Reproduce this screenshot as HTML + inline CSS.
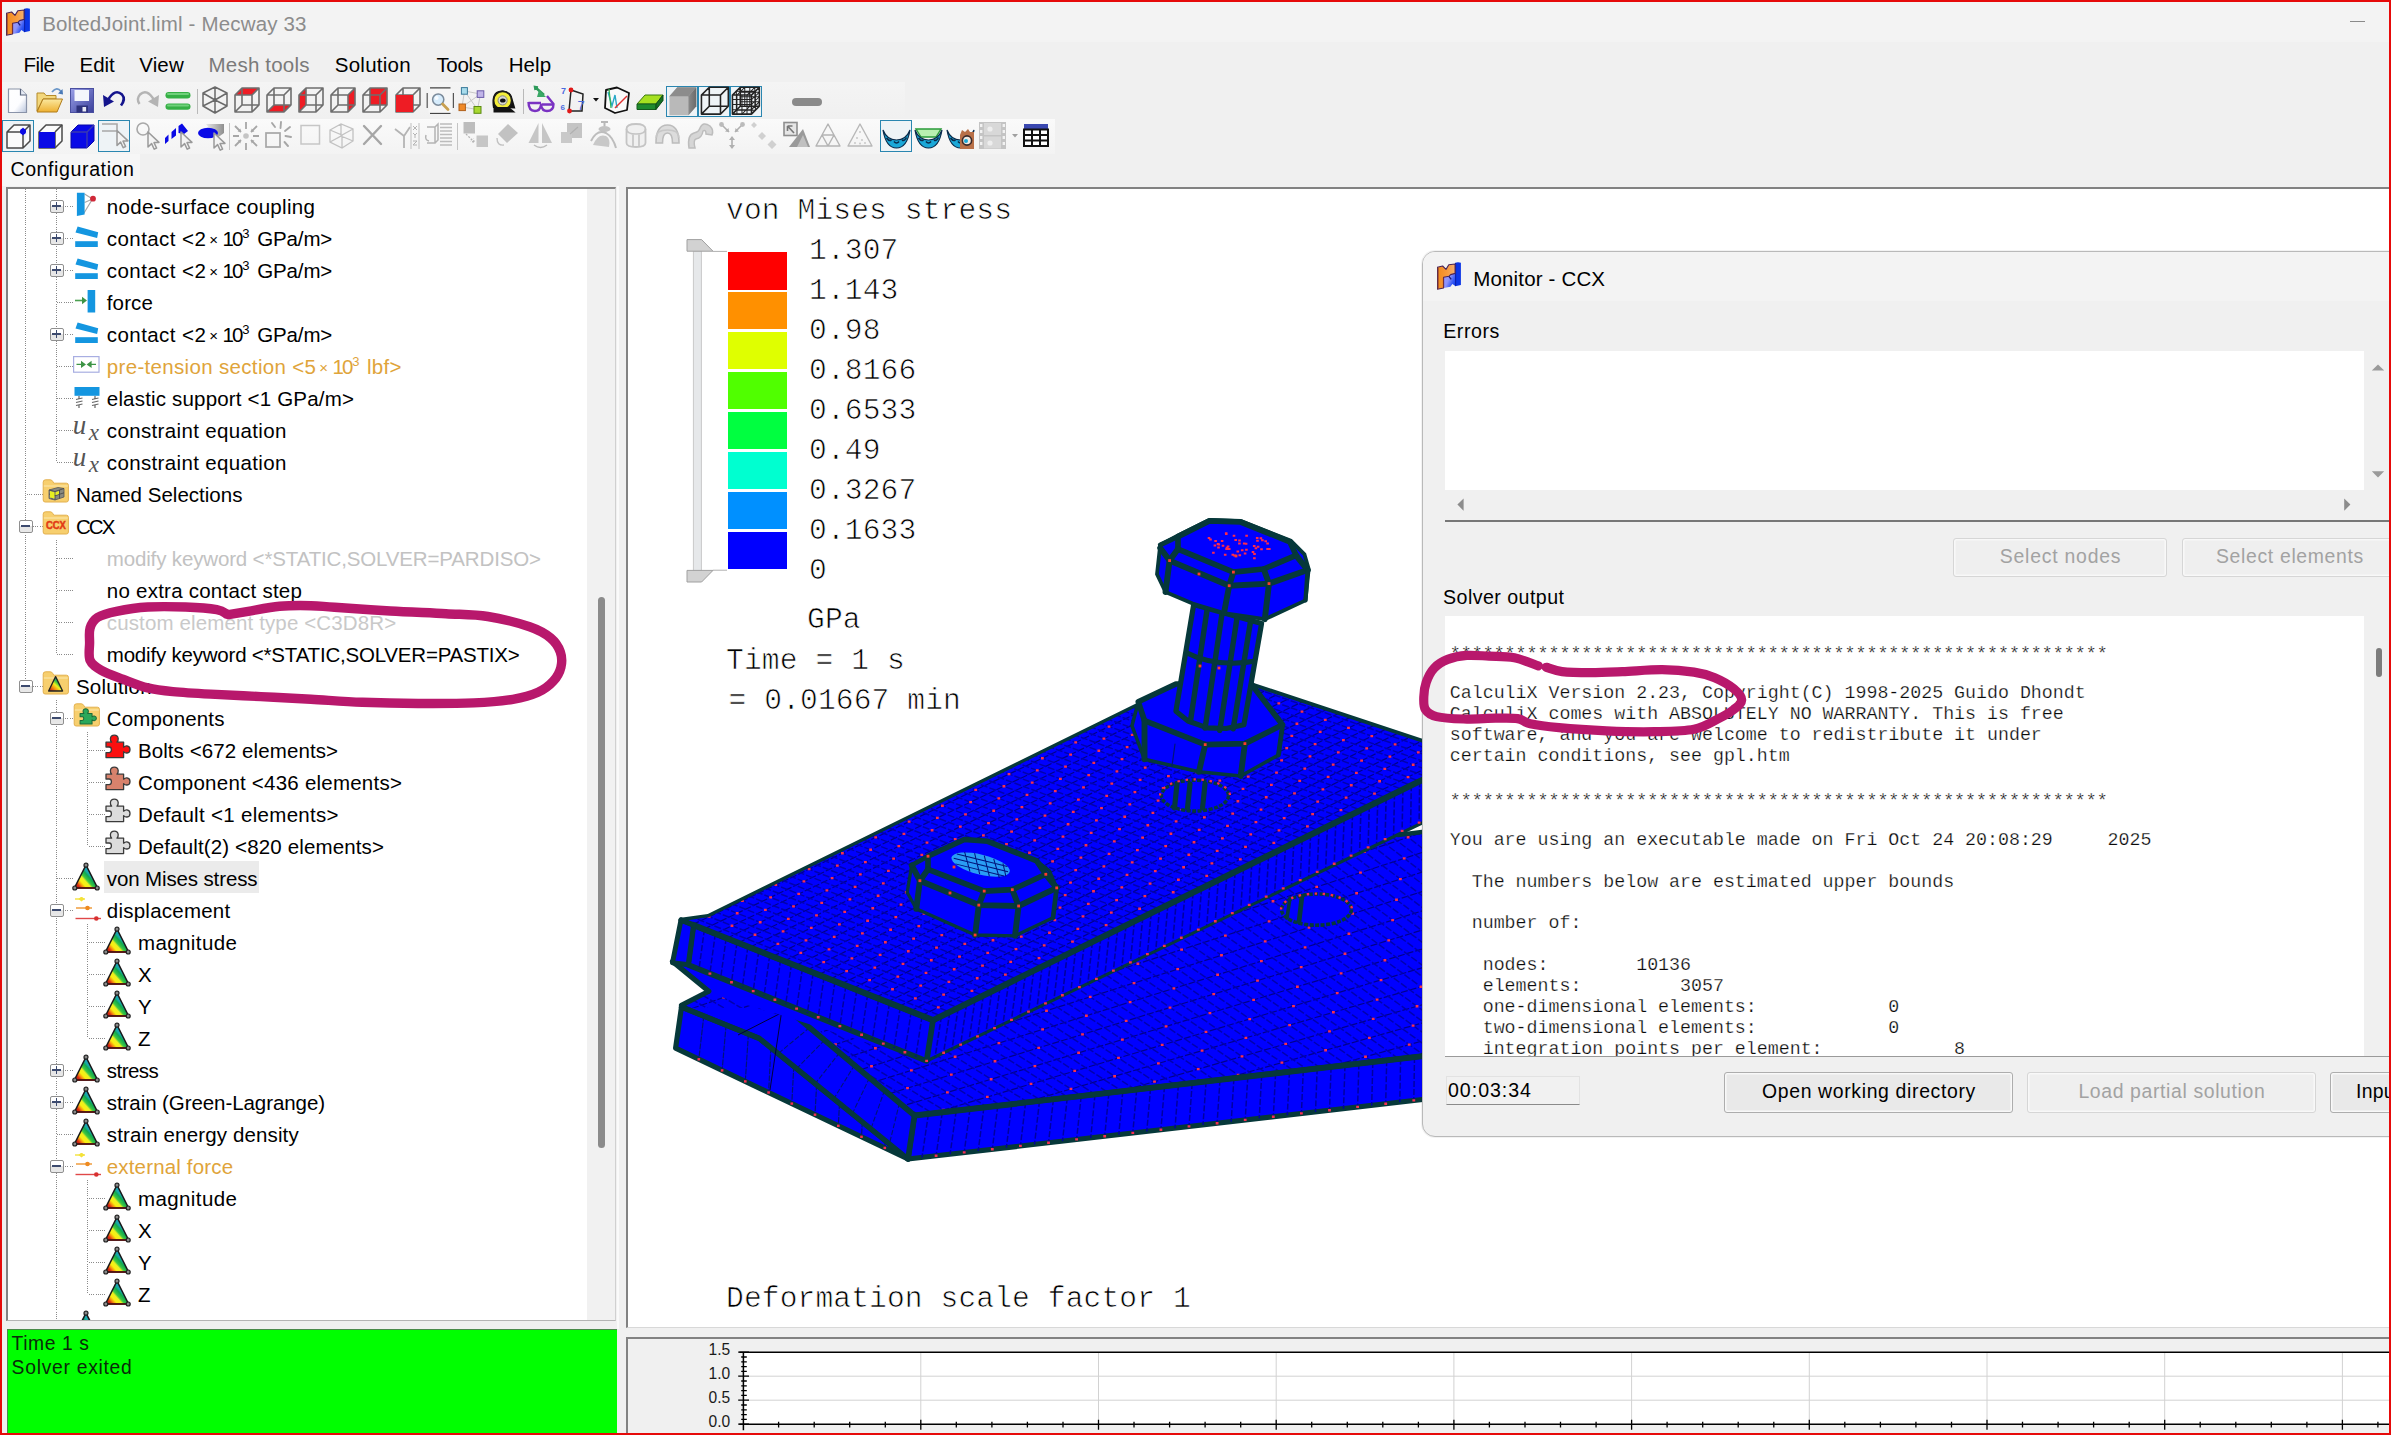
<!DOCTYPE html>
<html lang="en"><head><meta charset="utf-8"><title>BoltedJoint.liml - Mecway 33</title>
<style>
html,body{margin:0;padding:0}
body{width:2391px;height:1435px;overflow:hidden;background:#f0f0f0;position:relative;font-family:"Liberation Sans",sans-serif}
#frame{position:absolute;left:0;top:0;width:2387px;height:1431px;border:2px solid #e60a0a;z-index:50;pointer-events:none}
.abs{position:absolute}
#titlebar{position:absolute;left:2px;top:2px;width:2387px;height:40px;background:#f3f3f3}
#treepanel{position:absolute;left:6px;top:187px;width:610px;height:1133.5px;background:#fff;border-top:2px solid #828282;border-left:2px solid #828282;border-right:1px solid #d0d0d0;border-bottom:1px solid #b4b4b4;box-sizing:border-box;overflow:hidden}
#treeinner{position:absolute;left:-8px;top:-189px;width:640px;height:1435px}
#status{position:absolute;left:7px;top:1329px;width:610px;height:104px;background:#00ff00;border-top:1px solid #4a8a4a;border-left:1px solid #4a8a4a;box-sizing:border-box}
#viewport{position:absolute;left:626px;top:187px;width:1763px;height:1141px;background:#fff;border-top:2px solid #828282;border-left:2px solid #828282;border-bottom:1px solid #d8d8d8;box-sizing:border-box;overflow:hidden}
#vpinner{position:absolute;left:-628px;top:-189px;width:2391px;height:1435px}
#graph{position:absolute;left:626px;top:1337px;width:1763px;height:96px;background:#f0f0f0;border-top:2px solid #828282;border-left:2px solid #828282;box-sizing:border-box;overflow:hidden}
#graphinner{position:absolute;left:-628px;top:-1339px;width:2391px;height:1435px}
</style></head><body>
<div id="titlebar"></div>
<svg style="position:absolute;left:6.2px;top:8px" width="24.0" height="28.0" viewBox="0 0 24 28"><defs><linearGradient id="lgo" x1="0" y1="0" x2="1" y2="0"><stop offset="0" stop-color="#f28a1c"/><stop offset="0.55" stop-color="#f79a3c"/><stop offset="1" stop-color="#f4b070"/></linearGradient><linearGradient id="lgb" x1="0" y1="0" x2="1" y2="0.6"><stop offset="0" stop-color="#a29cff"/><stop offset="0.5" stop-color="#8c92fa"/><stop offset="0.8" stop-color="#3a5cf4"/><stop offset="1" stop-color="#1a44f0"/></linearGradient></defs><path d="M6.6 15.2 L11.9 14.2 L13.6 12.5 L18.6 11.2 V24.2 L15.4 22 L13.4 24.8 L6.6 26Z" fill="url(#lgb)"/><path d="M18.2 0.7 Q21 -0.3 23.9 0.7 V23.1 L18.2 24.2Z" fill="#0c36e6"/><path d="M18.6 1 V24" stroke="#0a1ea8" stroke-width="1"/><path d="M0.4 5.2 L5.6 4 L9 7.4 L11.8 2.7 L18.1 2 V11.4 L13.6 12.6 L11.9 14.3 L6.6 15.3 V26 L0.4 27.2Z" fill="url(#lgo)" stroke="#4a2358" stroke-width="1.1" stroke-linejoin="round"/><path d="M1.1 26.6 V6 M6.4 15.6 V25.4" stroke="#7a3030" stroke-width="0.9"/><path d="M11.9 14.4 L14.2 17.4" stroke="#1a1a7a" stroke-width="1.4"/></svg>
<span style="position:absolute;left:42.20px;top:10.00px;font:20.5px/27px 'Liberation Sans',sans-serif;color:#8c8c8c;white-space:pre;letter-spacing:0.169px;">BoltedJoint.liml - Mecway 33</span>
<div class="abs" style="left:2350px;top:21px;width:15px;height:1px;background:#8a8a8a"></div>
<!-- menu -->
<span style="position:absolute;left:23.60px;top:51.00px;font:20.5px/27px 'Liberation Sans',sans-serif;color:#000;white-space:pre;letter-spacing:-0.608px;">File</span>
<span style="position:absolute;left:79.60px;top:51.00px;font:20.5px/27px 'Liberation Sans',sans-serif;color:#000;white-space:pre;letter-spacing:-0.081px;">Edit</span>
<span style="position:absolute;left:139.30px;top:51.00px;font:20.5px/27px 'Liberation Sans',sans-serif;color:#000;white-space:pre;letter-spacing:0.109px;">View</span>
<span style="position:absolute;left:208.60px;top:51.00px;font:20.5px/27px 'Liberation Sans',sans-serif;color:#7a7a7a;white-space:pre;letter-spacing:0.187px;">Mesh tools</span>
<span style="position:absolute;left:334.80px;top:51.00px;font:20.5px/27px 'Liberation Sans',sans-serif;color:#000;white-space:pre;letter-spacing:0.240px;">Solution</span>
<span style="position:absolute;left:436.40px;top:51.00px;font:20.5px/27px 'Liberation Sans',sans-serif;color:#000;white-space:pre;letter-spacing:-0.291px;">Tools</span>
<span style="position:absolute;left:508.70px;top:51.00px;font:20.5px/27px 'Liberation Sans',sans-serif;color:#000;white-space:pre;letter-spacing:0.110px;">Help</span>
<div style="position:absolute;left:2px;top:82px;width:903px;height:37px;background:linear-gradient(#f4f4f4,#f0f0f0)"></div>
<div style="position:absolute;left:2px;top:119px;width:1053px;height:35px;background:linear-gradient(#fafafa,#f3f3f3)"></div>
<svg style="position:absolute;left:6.0px;top:86.0px;overflow:visible" width="30" height="30" viewBox="0 0 30 30"><defs><linearGradient id="gn" x1="0" y1="0" x2="1" y2="1"><stop offset="0" stop-color="#fff"/><stop offset="0.6" stop-color="#fdfdff"/><stop offset="1" stop-color="#b8c4dc"/></linearGradient></defs><path d="M2.5 3 H14.5 L20.5 9 V26.5 H2.5Z" fill="url(#gn)" stroke="#8a93a8" stroke-width="1.2"/><path d="M14.5 3 V9 H20.5" fill="#e6ebf5" stroke="#5a647c" stroke-width="1.2"/></svg>
<svg style="position:absolute;left:35.0px;top:86.0px;overflow:visible" width="30" height="30" viewBox="0 0 30 30"><defs><linearGradient id="go" x1="0" y1="0" x2="0" y2="1"><stop offset="0" stop-color="#fbe9a0"/><stop offset="1" stop-color="#eeb030"/></linearGradient></defs><path d="M2 7 H9 L11 9.5 H21 V13 H8 L2 25Z" fill="#f3d77c" stroke="#b48a2a" stroke-width="1"/><path d="M8 13 H27.5 L22 26 H2Z" fill="url(#go)" stroke="#b07c1a" stroke-width="1"/><path d="M17 6 Q22 0 26 5.5" fill="none" stroke="#6a96c8" stroke-width="1.8"/><path d="M23 7.5 L28 8.5 L27.5 3Z" fill="#4a7ab8"/></svg>
<svg style="position:absolute;left:68.5px;top:86.0px;overflow:visible" width="30" height="30" viewBox="0 0 30 30"><defs><linearGradient id="gs" x1="0" y1="0" x2="1" y2="1"><stop offset="0" stop-color="#9aa0e8"/><stop offset="1" stop-color="#3a3f9a"/></linearGradient></defs><rect x="1.5" y="2.5" width="23" height="24" fill="url(#gs)" stroke="#4a4fa0" stroke-width="1"/><rect x="5.5" y="4" width="14.5" height="11" fill="#f4f6fc"/><rect x="7.5" y="19.5" width="11.5" height="7" fill="#2e327c"/><rect x="13.5" y="21" width="3.6" height="4.5" fill="#e8eaf6"/></svg>
<svg style="position:absolute;left:101.0px;top:86.0px;overflow:visible" width="30" height="30" viewBox="0 0 30 30"><path d="M7 14 Q14 2 21 8.5 Q25 13 20 19.5" fill="none" stroke="#14148c" stroke-width="2.6"/><path d="M2 9 L3 21 L13 15.5Z" fill="#14148c"/></svg>
<svg style="position:absolute;left:133.0px;top:86.0px;overflow:visible" width="30" height="30" viewBox="0 0 30 30"><path d="M21 14 Q14 2 7 8.5 Q3 13 6.5 18" fill="none" stroke="#b4b4b4" stroke-width="2.4"/><path d="M26 9 L25 21 L15 15.5Z" fill="#b4b4b4"/></svg>
<svg style="position:absolute;left:164.0px;top:86.0px;overflow:visible" width="30" height="30" viewBox="0 0 30 30"><rect x="1.5" y="6" width="25" height="6.4" rx="3.2" fill="#35b045"/><rect x="1.5" y="17.4" width="25" height="6.4" rx="3.2" fill="#35b045"/><rect x="3" y="7" width="22" height="2" rx="1" fill="#6fd07a"/><rect x="3" y="18.4" width="22" height="2" rx="1" fill="#6fd07a"/></svg>
<div style="position:absolute;left:197px;top:89px;width:1px;height:25px;background:#b9b9b9"></div>
<svg style="position:absolute;left:201.0px;top:85.0px;overflow:visible" width="30" height="30" viewBox="0 0 30 30"><path d="M14 2 L26 8 V21 L14 28 L2 21 V8Z M14 15 L14 28 M14 15 L2 8 M14 15 L26 8 M14 2 V15 M2 21 L14 15 L26 21" fill="none" stroke="#6a6a6a" stroke-width="1.5" stroke-linejoin="round"/></svg>
<svg style="position:absolute;left:233.0px;top:86.0px;overflow:visible" width="30" height="30" viewBox="0 0 30 30"><path d="M2 9 L9 2 H26 L19 9Z" fill="#ee1c24"/><path d="M9 2 H26 V19 H9Z M2 9 H19 V26 H2Z M2 9 L9 2 M19 9 L26 2 M19 26 L26 19 M2 26 L9 19" fill="none" stroke="#6e6e6e" stroke-width="1.6" stroke-linejoin="round"/></svg>
<svg style="position:absolute;left:265.1px;top:86.0px;overflow:visible" width="30" height="30" viewBox="0 0 30 30"><path d="M2 26 L9 19 H26 L19 26Z" fill="#ee1c24"/><path d="M9 2 H26 V19 H9Z M2 9 H19 V26 H2Z M2 9 L9 2 M19 9 L26 2 M19 26 L26 19 M2 26 L9 19" fill="none" stroke="#6e6e6e" stroke-width="1.6" stroke-linejoin="round"/></svg>
<svg style="position:absolute;left:297.2px;top:86.0px;overflow:visible" width="30" height="30" viewBox="0 0 30 30"><path d="M2 9 L9 2 V19 L2 26Z" fill="#ee1c24"/><path d="M9 2 H26 V19 H9Z M2 9 H19 V26 H2Z M2 9 L9 2 M19 9 L26 2 M19 26 L26 19 M2 26 L9 19" fill="none" stroke="#6e6e6e" stroke-width="1.6" stroke-linejoin="round"/></svg>
<svg style="position:absolute;left:329.3px;top:86.0px;overflow:visible" width="30" height="30" viewBox="0 0 30 30"><path d="M19 9 L26 2 V19 L19 26Z" fill="#ee1c24"/><path d="M9 2 H26 V19 H9Z M2 9 H19 V26 H2Z M2 9 L9 2 M19 9 L26 2 M19 26 L26 19 M2 26 L9 19" fill="none" stroke="#6e6e6e" stroke-width="1.6" stroke-linejoin="round"/></svg>
<svg style="position:absolute;left:361.4px;top:86.0px;overflow:visible" width="30" height="30" viewBox="0 0 30 30"><path d="M9 2 H26 V19 H9Z" fill="#ee1c24"/><path d="M9 2 H26 V19 H9Z M2 9 H19 V26 H2Z M2 9 L9 2 M19 9 L26 2 M19 26 L26 19 M2 26 L9 19" fill="none" stroke="#6e6e6e" stroke-width="1.6" stroke-linejoin="round"/></svg>
<svg style="position:absolute;left:393.5px;top:86.0px;overflow:visible" width="30" height="30" viewBox="0 0 30 30"><path d="M9 2 H26 V19 H9Z M2 9 H19 V26 H2Z M2 9 L9 2 M19 9 L26 2 M19 26 L26 19 M2 26 L9 19" fill="none" stroke="#6e6e6e" stroke-width="1.6" stroke-linejoin="round"/><path d="M2 9 H19 V26 H2Z" fill="#ee1c24"/></svg>
<svg style="position:absolute;left:425.5px;top:84.0px;overflow:visible" width="30" height="32" viewBox="0 0 30 32"><path d="M4 3.8 H24.5 M4 29.4 H24.5" stroke="#444" stroke-width="1.2"/><path d="M1.2 9 V24 M27.4 9 V24" stroke="#555" stroke-width="1.2"/><rect x="2.5" y="5" width="23.5" height="23.5" fill="#f6f6f6"/><circle cx="12.2" cy="15.6" r="5.6" fill="#d6ecfc" stroke="#7a8a9a" stroke-width="1.5"/><circle cx="10.6" cy="14" r="2" fill="#fff" opacity="0.8"/><path d="M16.6 20 L22 25.4" stroke="#c8a050" stroke-width="2.8" stroke-linecap="round"/></svg>
<svg style="position:absolute;left:457.0px;top:86.0px;overflow:visible" width="30" height="30" viewBox="0 0 30 30"><path d="M7.5 5 L23.5 8 L20.5 23.5 L5 21Z M7.5 5 L20.5 23.5 M23.5 8 L5 21" fill="none" stroke="#c8c8c8" stroke-width="1"/><rect x="4.4" y="1.6" width="6" height="6.6" fill="#a8dcec" stroke="#3a7a9a"/><rect x="20.2" y="4.8" width="6.6" height="6.6" fill="#c0b4e8" stroke="#6a5aa8"/><rect x="2" y="18" width="6.4" height="6.6" fill="#f08a28" stroke="#b0601a"/><rect x="17" y="20.5" width="7" height="6.8" fill="#a8d830" stroke="#5a8a10"/></svg>
<svg style="position:absolute;left:489.5px;top:86.0px;overflow:visible" width="30" height="30" viewBox="0 0 30 30"><path d="M3 22 Q0 4 13 4.5 Q21 5 22.6 13 L25.4 22.5 Z" fill="#111"/><circle cx="12.6" cy="14.4" r="9" fill="#f4ee3a" stroke="#1a1a1a" stroke-width="1.6"/><circle cx="12.6" cy="14.4" r="4.6" fill="#d8d8d0" stroke="#8a8a80" stroke-width="1"/><ellipse cx="12.8" cy="14.6" rx="2.8" ry="2" fill="#111"/><path d="M3.5 21 H19 L25.6 26.4 H3.5Z" fill="#111"/></svg>
<div style="position:absolute;left:523px;top:89px;width:1px;height:25px;background:#b9b9b9"></div>
<svg style="position:absolute;left:527.0px;top:86.0px;overflow:visible" width="30" height="30" viewBox="0 0 30 30"><path d="M8 1 L17 9 M11 1.5 L8 1 L8.5 4" stroke="#2e9a5a" stroke-width="2.4" fill="none"/><path d="M12 4 L19 11 L10 11Z" fill="#3aa866"/><path d="M1.5 16 Q1.5 25 8 25 Q13 25 14 19 Q15 25 20 25 Q26.5 25 26.5 18 L20 10" fill="none" stroke="#7a32c2" stroke-width="2.4" stroke-linejoin="round"/><path d="M1.5 17 H14 M14.5 18.5 H26" stroke="#7a32c2" stroke-width="2.4"/></svg>
<svg style="position:absolute;left:559.5px;top:86.0px;overflow:visible" width="30" height="30" viewBox="0 0 30 30"><path d="M11 4 L23 8 L22 25 L9 25Z" fill="none" stroke="#222" stroke-width="1.5"/><circle cx="11" cy="4" r="2.4" fill="#e01818"/><circle cx="9.5" cy="25" r="2.4" fill="#e01818"/><text x="1" y="8" font-size="9" font-weight="bold" fill="#4a6ae0" font-family="Liberation Sans,sans-serif">7</text><text x="0.5" y="24" font-size="8" font-weight="bold" fill="#4a6ae0" font-family="Liberation Sans,sans-serif">6</text><text x="17.5" y="24" font-size="13" fill="#4a6ae0" font-family="Liberation Sans,sans-serif">7</text></svg>
<svg style="position:absolute;left:593.0px;top:98.0px;overflow:visible" width="7" height="5" viewBox="0 0 7 5"><path d="M0 0 H6 L3 3.4Z" fill="#111"/></svg>
<svg style="position:absolute;left:603.0px;top:86.0px;overflow:visible" width="30" height="30" viewBox="0 0 30 30"><path d="M3 4 L14 1.5 L26 7 L24 24 L12 27 L2 22Z" fill="#fafafa" stroke="#111" stroke-width="1.8" stroke-linejoin="round"/><path d="M5 6 L9 20 L12 9 L14 22" fill="none" stroke="#28a8c8" stroke-width="1.4"/><path d="M12 22 L24 10" stroke="#e03030" stroke-width="1.5"/><path d="M6 3 L8 22" stroke="#30b050" stroke-width="1.2"/></svg>
<svg style="position:absolute;left:635.5px;top:86.0px;overflow:visible" width="30" height="30" viewBox="0 0 30 30"><path d="M1 18 L9 9 H27 L20 18Z" fill="#a6e020" stroke="#3a7a10" stroke-width="1"/><path d="M1 18 H20 V23.5 H1Z" fill="#1e8a2e" stroke="#145a1c" stroke-width="1"/><path d="M20 18 L27 9 V14.5 L20 23.5Z" fill="#157024" stroke="#0e4a16" stroke-width="1"/></svg>
<div style="position:absolute;left:666.0px;top:85.5px;width:30.200000000000003px;height:29.5px;border:1px solid #2a86b0;background:#eef3f6"></div>
<div style="position:absolute;left:697.8px;top:85.5px;width:30.200000000000003px;height:29.5px;border:1px solid #2a86b0;background:#eef3f6"></div>
<div style="position:absolute;left:729.6px;top:85.5px;width:30.200000000000003px;height:29.5px;border:1px solid #2a86b0;background:#eef3f6"></div>
<svg style="position:absolute;left:668.5px;top:87.0px;overflow:visible" width="30" height="30" viewBox="0 0 30 30"><defs><linearGradient id="gc" x1="0" y1="0" x2="1" y2="0"><stop offset="0" stop-color="#8a8a8a"/><stop offset="1" stop-color="#6a6a6a"/></linearGradient></defs><g transform="translate(-1.8,-2) scale(1.12)"><path d="M2 10 L9 2 H26 V19 L19 27 H2Z" fill="#b9b9b9"/><path d="M2 10 L9 2 H26 L19 10Z" fill="#8c8c8c"/><path d="M19 10 L26 2 V19 L19 27Z" fill="url(#gc)"/></g></svg>
<svg style="position:absolute;left:700.5px;top:87.0px;overflow:visible" width="30" height="30" viewBox="0 0 30 30"><g transform="translate(-1.8,-2) scale(1.12)"><path d="M9 2 H26 V19 H9Z M2 9 H19 V26 H2Z M2 9 L9 2 M19 9 L26 2 M19 26 L26 19 M2 26 L9 19" fill="none" stroke="#222" stroke-width="1.4" stroke-linejoin="round"/></g></svg>
<svg style="position:absolute;left:732.3px;top:87.0px;overflow:visible" width="30" height="30" viewBox="0 0 30 30"><g transform="translate(-1.8,-2) scale(1.12)"><path d="M9 2 H26 V19 H9Z M2 9 H19 V26 H2Z M2 9 L9 2 M19 9 L26 2 M19 26 L26 19 M2 26 L9 19" fill="none" stroke="#222" stroke-width="1.4" stroke-linejoin="round"/><path d="M2 17.5 H19 L26 10.5 M10.5 9 V26 L17.5 19 V2 M9 10.5 H26 M2 13 H19 L26 6.5 M2 22 H19 L26 15 M6 9 V26 M15 9 V26 M6 9 L13 2 M15 9 L22 2 M13 2 V19 M22 2 V19 M9 6.5 H26 M9 15 H26 M5.5 5.5 H22.5 V22.5 H5.5Z" fill="none" stroke="#222" stroke-width="0.9"/></g></svg>
<div style="position:absolute;left:791.5px;top:97.5px;width:30.5px;height:8.5px;border-radius:4px;background:#8a8a8a"></div>
<div style="position:absolute;left:2.4px;top:120.3px;width:29.6px;height:29.4px;border:1px solid #2a86b0;background:#eef3f6"></div>
<svg style="position:absolute;left:4.5px;top:122.0px;overflow:visible" width="30" height="30" viewBox="0 0 30 30"><path d="M2 10 H18 V26 H2Z M2 10 L9 3 H25 L18 10 M25 3 V19 L18 26" fill="#fbfbfb" stroke="#4a4a4a" stroke-width="1.5" stroke-linejoin="round"/><path d="M18 5.5 L21 9.5 L18 13.5 L15 9.5Z" fill="#0a0ae6"/><circle cx="18" cy="9.5" r="3" fill="#0a0ae6"/></svg>
<svg style="position:absolute;left:36.5px;top:122.0px;overflow:visible" width="30" height="30" viewBox="0 0 30 30"><path d="M2 10 L9 3 H25 V19 L18 26 H2Z" fill="#fbfbfb" stroke="#4a4a4a" stroke-width="1.5" stroke-linejoin="round"/><path d="M18 10 L25 3 M18 10 V26" stroke="#4a4a4a" stroke-width="1.5"/><rect x="2" y="10" width="16" height="16" fill="#0a0ae6"/></svg>
<svg style="position:absolute;left:69.0px;top:122.0px;overflow:visible" width="30" height="30" viewBox="0 0 30 30"><path d="M2 10 L9 3 H25 V19 L18 26 H2Z" fill="#0a0ae6" stroke="#0808a8" stroke-width="1"/><path d="M2 10 H18 L25 3 M18 10 V26" fill="none" stroke="#3a3ab0" stroke-width="1.4"/></svg>
<div style="position:absolute;left:98.3px;top:120.3px;width:30px;height:29.4px;border:1px solid #2a86b0;background:#eef3f6"></div>
<svg style="position:absolute;left:100.0px;top:121.0px;overflow:visible" width="30" height="30" viewBox="0 0 30 30"><path d="M2 3 H17 V10 H2" fill="none" stroke="#a8a8a8" stroke-width="1.6"/><path d="M17 9.5 l0 15 l3.6 -3.4 l2.6 5.6 l2.4 -1.2 l-2.6 -5.4 l5 -0.2z" fill="#f4f4f4" stroke="#9a9a9a" stroke-width="1.5" stroke-linejoin="round"/></svg>
<svg style="position:absolute;left:134.5px;top:121.0px;overflow:visible" width="30" height="30" viewBox="0 0 30 30"><circle cx="8" cy="8" r="6" fill="none" stroke="#a8a8a8" stroke-width="1.6"/><path d="M13 11 l0 15 l3.6 -3.4 l2.6 5.6 l2.4 -1.2 l-2.6 -5.4 l5 -0.2z" fill="#f4f4f4" stroke="#9a9a9a" stroke-width="1.5" stroke-linejoin="round"/></svg>
<svg style="position:absolute;left:163.5px;top:121.0px;overflow:visible" width="30" height="30" viewBox="0 0 30 30"><path d="M1 17 L4.5 13.5 V20 L1 23Z M7.5 11 L12 7 L12 14.5 L7.5 18Z M14.5 5 L18 2.5 L24 10 L20 13 L14.5 12Z" fill="#0a0ae6"/><path d="M17 11 l0 15 l3.6 -3.4 l2.6 5.6 l2.4 -1.2 l-2.6 -5.4 l5 -0.2z" fill="#f4f4f4" stroke="#9a9a9a" stroke-width="1.5" stroke-linejoin="round"/></svg>
<svg style="position:absolute;left:196.5px;top:121.0px;overflow:visible" width="30" height="30" viewBox="0 0 30 30"><defs><linearGradient id="gp" x1="0" y1="0" x2="1" y2="0"><stop offset="0" stop-color="#e8e8e8"/><stop offset="1" stop-color="#8e8e8e"/></linearGradient></defs><path d="M9 3 H27 V12 L20 17Z" fill="url(#gp)"/><ellipse cx="11" cy="12" rx="10" ry="5.2" fill="#0a0ae6"/><path d="M17 12 l0 15 l3.6 -3.4 l2.6 5.6 l2.4 -1.2 l-2.6 -5.4 l5 -0.2z" fill="#f4f4f4" stroke="#9a9a9a" stroke-width="1.5" stroke-linejoin="round"/></svg>
<div style="position:absolute;left:229px;top:123px;width:1px;height:27px;background:#c4c4c4"></div>
<svg style="position:absolute;left:231.5px;top:121.0px;overflow:visible" width="30" height="30" viewBox="0 0 30 30"><g stroke="#a6a6a6" stroke-width="1.8" fill="none"><path d="M3 5 L9 11 M25 5 L19 11 M3 25 L9 19 M25 25 L19 19 M14 1 V8 M1 15 H7 M27 15 H21 M14 29 V22"/></g><circle cx="14" cy="15" r="2.8" fill="#c4c4c4"/><path d="M9 11 l-3.4 -0.6 l2.8 -2.8z M19 11 l3.4 -0.6 l-2.8 -2.8z M9 19 l-3.4 0.6 l2.8 2.8z M19 19 l3.4 0.6 l-2.8 2.8z" fill="#a6a6a6"/></svg>
<svg style="position:absolute;left:264.0px;top:121.0px;overflow:visible" width="30" height="30" viewBox="0 0 30 30"><rect x="2" y="12" width="14" height="14" fill="none" stroke="#a6a6a6" stroke-width="1.7"/><g stroke="#a6a6a6" stroke-width="1.9" stroke-linecap="round"><path d="M8 2 L11 6 M17 1 L16.5 7 M26 6 L21 10 M27 16 L21.5 15 M24 25 L20.5 21"/></g></svg>
<svg style="position:absolute;left:298.5px;top:121.0px;overflow:visible" width="30" height="30" viewBox="0 0 30 30"><rect x="2" y="4.5" width="18.5" height="18.5" fill="none" stroke="#c6c6c6" stroke-width="1.5"/></svg>
<svg style="position:absolute;left:328.0px;top:121.0px;overflow:visible" width="30" height="30" viewBox="0 0 30 30"><path d="M2 9 L13 3 L25 8 V20 L14 27 L2 21Z M2 9 L14 14 L25 8 M14 14 V27 M13 3 V15 L2 21 M13 15 L25 20" fill="none" stroke="#c2c2c2" stroke-width="1.3"/></svg>
<svg style="position:absolute;left:360.5px;top:121.0px;overflow:visible" width="30" height="30" viewBox="0 0 30 30"><path d="M3 5 L20 23 M20 5 L3 23" stroke="#a6a6a6" stroke-width="2.4" stroke-linecap="round"/></svg>
<svg style="position:absolute;left:392.5px;top:121.0px;overflow:visible" width="30" height="30" viewBox="0 0 30 30"><path d="M2 8 L11 15 V27 M11 15 L17 6" fill="none" stroke="#b4b4b4" stroke-width="1.8"/><path d="M18 2 V28 M26 2 V28" stroke="#c8c8c8" stroke-width="1.2"/><path d="M20 5 l4 4 m0 -4 l-4 4 M20 12 l2 2 l2 -2 m-2 2 v3 M20 20 h4 l-4 4 h4" stroke="#b4b4b4" stroke-width="1" fill="none"/></svg>
<svg style="position:absolute;left:423.5px;top:121.0px;overflow:visible" width="30" height="30" viewBox="0 0 30 30"><path d="M3 6 H11 V22 H3 M11 6 L14 3 V19 L11 22 M2 14 q-1.5 5 3 6" fill="none" stroke="#b4b4b4" stroke-width="1.5"/><path d="M16 3 H28 M16 6.5 H28 M16 10 H28 M16 13.5 H28 M16 17 H28 M16 20.5 H28 M16 24 H28" stroke="#bcbcbc" stroke-width="1.3"/></svg>
<div style="position:absolute;left:457px;top:123px;width:1px;height:27px;background:#c4c4c4"></div>
<svg style="position:absolute;left:461.5px;top:121.0px;overflow:visible" width="30" height="30" viewBox="0 0 30 30"><rect x="1.5" y="1" width="11.5" height="11.5" fill="#bdbdbd"/><rect x="14.5" y="14.5" width="11.5" height="11.5" fill="#c6c6c6"/><path d="M4 13 L12 21 M12 21 l-3.6 -0.6 M12 21 l-0.6 -3.6" stroke="#b4b4b4" stroke-width="1.3" fill="none" stroke-dasharray="2 1.4"/></svg>
<svg style="position:absolute;left:494.0px;top:121.0px;overflow:visible" width="30" height="30" viewBox="0 0 30 30"><path d="M14 3 L24 12 L13 22 L4 13Z" fill="#c2c2c2"/><path d="M3 17 q0 8 7 7" fill="none" stroke="#c2c2c2" stroke-width="1.4"/></svg>
<svg style="position:absolute;left:526.5px;top:121.0px;overflow:visible" width="30" height="30" viewBox="0 0 30 30"><path d="M11.5 2 V22 H1.5Z M15 2 V22 H25Z" fill="#c6c6c6"/><path d="M7 24 q6.5 5 13 0" fill="none" stroke="#bcbcbc" stroke-width="1.4"/></svg>
<svg style="position:absolute;left:560.0px;top:121.0px;overflow:visible" width="30" height="30" viewBox="0 0 30 30"><rect x="7" y="2" width="15" height="15" fill="#c4c4c4"/><rect x="1" y="11" width="11" height="11" fill="#c9c9c9"/><path d="M10 13 L18 6" stroke="#b0b0b0" stroke-width="1.2"/></svg>
<svg style="position:absolute;left:589.0px;top:121.0px;overflow:visible" width="30" height="30" viewBox="0 0 30 30"><path d="M12 1 H19 M15.5 1 V5" stroke="#b8b8b8" stroke-width="2"/><ellipse cx="15.5" cy="8" rx="6" ry="3" fill="#c2c2c2"/><path d="M2 20 Q8 8 17 12 Q24 16 27 27" fill="none" stroke="#bdbdbd" stroke-width="2"/><path d="M4 24 Q9 12 17 15 Q22 18 20 26Z" fill="#c8c8c8"/></svg>
<svg style="position:absolute;left:623.5px;top:121.0px;overflow:visible" width="30" height="30" viewBox="0 0 30 30"><path d="M2.5 8 Q2.5 3 12 3 Q21.5 3 21.5 8 V22 Q21.5 26 12 26 Q2.5 26 2.5 22Z" fill="#f0f0f0" stroke="#c4c4c4" stroke-width="1.8"/><path d="M2.5 8 Q2.5 13 12 13 Q21.5 13 21.5 8 M9 13 V26 M15 13 V26" fill="none" stroke="#c4c4c4" stroke-width="1.6"/></svg>
<svg style="position:absolute;left:654.0px;top:121.0px;overflow:visible" width="30" height="30" viewBox="0 0 30 30"><path d="M2 22 Q2 4 13.5 4 Q25 4 25 22 H18.5 Q18.5 12 13.5 12 Q8.5 12 8.5 22Z" fill="#dcdcdc" stroke="#bcbcbc" stroke-width="1.6"/><path d="M2 17 Q2 9 13.5 9 Q25 9 25 17" fill="none" stroke="#c8c8c8" stroke-width="1.3"/></svg>
<svg style="position:absolute;left:685.5px;top:121.0px;overflow:visible" width="30" height="30" viewBox="0 0 30 30"><path d="M3 27 Q1 14 8 12 Q13 11 14 7 Q17 0 24 5 Q28 9 26 14 L20 13 Q20 8 17 10 Q16 17 10 18 Q7 19 9 27Z" fill="#d6d6d6" stroke="#bdbdbd" stroke-width="1.5"/></svg>
<svg style="position:absolute;left:717.5px;top:121.0px;overflow:visible" width="30" height="30" viewBox="0 0 30 30"><path d="M3 3 L11 11 M25 3 L17 11 M14 16 V27" stroke="#b0b0b0" stroke-width="1.6"/><circle cx="3.5" cy="3.5" r="2.4" fill="#bbb"/><circle cx="24.5" cy="3.5" r="2.4" fill="#bbb"/><path d="M11 11 l-4 -0.5 l3.5 -3.5z M17 11 l4 -0.5 l-3.5 -3.5z M14 15 l-3 4 h6z M14 28 l-3 -4 h6z" fill="#b0b0b0"/></svg>
<svg style="position:absolute;left:751.0px;top:121.0px;overflow:visible" width="30" height="30" viewBox="0 0 30 30"><path d="M3 1 l3 3 l-3 3 l-3 -3z M11 11 l4 4 l-4 4 l-4 -4z M21 19 l4.5 4.5 l-4.5 4.5 l-4.5 -4.5z" fill="#d0d0d0"/></svg>
<svg style="position:absolute;left:783.0px;top:121.0px;overflow:visible" width="30" height="30" viewBox="0 0 30 30"><rect x="1" y="1.5" width="13" height="13" fill="#e6e6e6" stroke="#8e8e8e" stroke-width="1.6"/><path d="M11 12 L4.5 5 M4.5 5 V10 M4.5 5 H9.5" stroke="#777" stroke-width="1.6" fill="none"/><path d="M6 26 L20 8 L27 26Z" fill="#9a9a9a"/><path d="M14 26 L20 14 L25 26Z" fill="#c0c0c0"/></svg>
<svg style="position:absolute;left:814.5px;top:121.0px;overflow:visible" width="30" height="30" viewBox="0 0 30 30"><path d="M13 3 L25 25 H1Z M7 14 H19 L13 25Z" fill="none" stroke="#b4b4b4" stroke-width="1.4" stroke-linejoin="round"/></svg>
<svg style="position:absolute;left:846.5px;top:121.0px;overflow:visible" width="30" height="30" viewBox="0 0 30 30"><path d="M13 3 L25 25 H1Z" fill="none" stroke="#b8b8b8" stroke-width="1.4" stroke-linejoin="round"/><g fill="#c4c4c4"><circle cx="13" cy="11" r="0.9"/><circle cx="10" cy="17" r="0.9"/><circle cx="15" cy="19" r="0.9"/><circle cx="8" cy="22" r="0.9"/><circle cx="18" cy="22" r="0.9"/><circle cx="13" cy="22.5" r="0.9"/></g></svg>
<div style="position:absolute;left:880.0px;top:120.3px;width:30px;height:29.4px;border:1px solid #2a86b0;background:#eef3f6"></div>
<svg style="position:absolute;left:881.5px;top:121.0px;overflow:visible" width="30" height="30" viewBox="0 0 30 30"><path d="M1 9 Q4 27 14.5 27 Q25 27 28 9 Q24 19 14.5 19 Q5 19 1 9Z" fill="#1aa8d8" stroke="#0a2a4a" stroke-width="1.2"/><path d="M4.5 17 q2.5 3.5 5 2 M12 20.5 q2.5 3 5 0 M20 19 q2.5 1.5 4.5 -2.5" stroke="#0a2a4a" stroke-width="1.6" fill="none"/></svg>
<svg style="position:absolute;left:913.5px;top:121.0px;overflow:visible" width="30" height="30" viewBox="0 0 30 30"><path d="M2 8 H27 L22 16 H7Z" fill="#b8f0b0" stroke="#2a9a3a" stroke-width="1.4"/><path d="M1 9 Q4 27 14.5 27 Q25 27 28 9 Q24 19 14.5 19 Q5 19 1 9Z" fill="#1aa8d8" stroke="#0a2a4a" stroke-width="1.2"/><path d="M4.5 17 q2.5 3.5 5 2 M12 20.5 q2.5 3 5 0 M20 19 q2.5 1.5 4.5 -2.5" stroke="#0a2a4a" stroke-width="1.6" fill="none"/></svg>
<svg style="position:absolute;left:945.5px;top:121.0px;overflow:visible" width="30" height="30" viewBox="0 0 30 30"><path d="M1 9 Q4 27 14.5 27 Q25 27 28 9 Q24 19 14.5 19 Q5 19 1 9Z" fill="#1aa8d8" stroke="#0a2a4a" stroke-width="1.2"/><path d="M4.5 17 q2.5 3.5 5 2 M12 20.5 q2.5 3 5 0 M20 19 q2.5 1.5 4.5 -2.5" stroke="#0a2a4a" stroke-width="1.6" fill="none"/><path d="M14 14 l2 -5 l3 2 l3 -3 l2 3 l4 0 V28 H14Z" fill="#b87048"/><circle cx="21" cy="19.5" r="4.6" fill="#f0e8e0" stroke="#3a2a2a" stroke-width="1.6"/><circle cx="20" cy="20" r="2" fill="#1aa8d8"/></svg>
<svg style="position:absolute;left:977.5px;top:121.0px;overflow:visible" width="30" height="30" viewBox="0 0 30 30"><rect x="1" y="1" width="27" height="27" fill="#c4c4c4"/><rect x="6" y="2" width="17" height="12" fill="#d8d8d8"/><rect x="6" y="15.5" width="17" height="12" fill="#d8d8d8"/><g fill="#f2f2f2"><rect x="2" y="3" width="2.4" height="3"/><rect x="2" y="9" width="2.4" height="3"/><rect x="2" y="15" width="2.4" height="3"/><rect x="2" y="21" width="2.4" height="3"/><rect x="24.6" y="3" width="2.4" height="3"/><rect x="24.6" y="9" width="2.4" height="3"/><rect x="24.6" y="15" width="2.4" height="3"/><rect x="24.6" y="21" width="2.4" height="3"/></g><circle cx="12" cy="8" r="2.6" fill="#eee"/><circle cx="12" cy="22" r="2.6" fill="#eee"/></svg>
<svg style="position:absolute;left:1011.5px;top:134.0px;overflow:visible" width="7" height="5" viewBox="0 0 7 5"><path d="M0 0 H6 L3 3.4Z" fill="#a0a0a0"/></svg>
<svg style="position:absolute;left:1022.5px;top:121.0px;overflow:visible" width="30" height="30" viewBox="0 0 30 30"><rect x="1" y="3" width="24" height="5.4" fill="#3a48b0"/><path d="M1 8.4 H25 V25 H1Z M1 14 H25 M1 19.5 H25 M9 8.4 V25 M17 8.4 V25" fill="#fff" stroke="#111" stroke-width="2"/></svg>
<!-- tab -->
<div class="abs" style="left:2px;top:154px;width:138px;height:32px;background:#f6f6f6"></div>
<span style="position:absolute;left:10.40px;top:157.31px;font:19.6px/25px 'Liberation Sans',sans-serif;color:#000;white-space:pre;letter-spacing:0.586px;">Configuration</span>
<!-- tree -->
<div id="treepanel"><div id="treeinner">
<div style="position:absolute;left:25.0px;top:187.0px;width:1px;height:499.0px;background:repeating-linear-gradient(180deg,#8a8a8a 0 1px,transparent 1px 2.2px)"></div>
<div style="position:absolute;left:55.9px;top:187.0px;width:1px;height:275.0px;background:repeating-linear-gradient(180deg,#8a8a8a 0 1px,transparent 1px 2.2px)"></div>
<div style="position:absolute;left:55.9px;top:540.0px;width:1px;height:114.0px;background:repeating-linear-gradient(180deg,#8a8a8a 0 1px,transparent 1px 2.2px)"></div>
<div style="position:absolute;left:55.9px;top:700.0px;width:1px;height:620.0px;background:repeating-linear-gradient(180deg,#8a8a8a 0 1px,transparent 1px 2.2px)"></div>
<div style="position:absolute;left:87.0px;top:732.0px;width:1px;height:114.0px;background:repeating-linear-gradient(180deg,#8a8a8a 0 1px,transparent 1px 2.2px)"></div>
<div style="position:absolute;left:87.0px;top:924.0px;width:1px;height:114.0px;background:repeating-linear-gradient(180deg,#8a8a8a 0 1px,transparent 1px 2.2px)"></div>
<div style="position:absolute;left:87.0px;top:1180.0px;width:1px;height:114.0px;background:repeating-linear-gradient(180deg,#8a8a8a 0 1px,transparent 1px 2.2px)"></div>
<div style="position:absolute;left:63.4px;top:205.5px;width:10.0px;height:1px;background:repeating-linear-gradient(90deg,#8a8a8a 0 1px,transparent 1px 2.2px)"></div>
<div style="position:absolute;left:50.1px;top:199.8px;width:11.5px;height:11.5px;border:1px solid #8f8f8f;border-radius:2px;background:linear-gradient(#fff 0,#fff 50%,#e4e4e4 50%,#e9e9e9 100%)"></div><div style="position:absolute;left:52.2px;top:205.2px;width:8.6px;height:1.5px;background:#3c4a6e"></div><div style="position:absolute;left:55.6px;top:201.6px;width:1.5px;height:8.8px;background:#3c4a6e"></div>
<svg style="position:absolute;left:72.0px;top:192.0px" width="26" height="26" viewBox="0 0 26 26"><path d="M12.6 2 L20.5 7 M12.6 10.5 L20.5 7 M12 21 L20.5 7" stroke="#a8a8a8" stroke-width="1.2" fill="none"/><path d="M4.9 0.8 H12.6 V22.4 L4.9 24.1Z" fill="#1496e0"/><circle cx="21" cy="6.7" r="2.9" fill="#d02838"/></svg>
<span style="position:absolute;left:106.80px;top:193.00px;font:20.5px/27px 'Liberation Sans',sans-serif;color:#000;white-space:pre;letter-spacing:0.323px;">node-surface coupling</span>
<div style="position:absolute;left:63.4px;top:237.5px;width:10.0px;height:1px;background:repeating-linear-gradient(90deg,#8a8a8a 0 1px,transparent 1px 2.2px)"></div>
<div style="position:absolute;left:50.1px;top:231.8px;width:11.5px;height:11.5px;border:1px solid #8f8f8f;border-radius:2px;background:linear-gradient(#fff 0,#fff 50%,#e4e4e4 50%,#e9e9e9 100%)"></div><div style="position:absolute;left:52.2px;top:237.2px;width:8.6px;height:1.5px;background:#3c4a6e"></div><div style="position:absolute;left:55.6px;top:233.6px;width:1.5px;height:8.8px;background:#3c4a6e"></div>
<svg style="position:absolute;left:75.0px;top:226.0px" width="25" height="23" viewBox="0 0 25 23"><path d="M2.6 0.6 L23.2 6.2 L22.1 12.1 L0.5 6.5Z" fill="#1496e0"/><rect x="0.2" y="15.2" width="22.6" height="5.8" fill="#1496e0"/></svg>
<span style="position:absolute;left:106.80px;top:225.00px;font:20.5px/27px 'Liberation Sans',sans-serif;color:#000;white-space:pre;letter-spacing:0.434px;">contact &lt;2</span><span style="position:absolute;left:209.30px;top:229.90px;font:15px/20px 'Liberation Sans',sans-serif;color:#000;white-space:pre;">×</span><span style="position:absolute;left:222.60px;top:225.00px;font:20.5px/27px 'Liberation Sans',sans-serif;color:#000;white-space:pre;letter-spacing:-2.101px;">10</span><span style="position:absolute;left:242.20px;top:225.40px;font:13px/17px 'Liberation Sans',sans-serif;color:#000;white-space:pre;">3</span><span style="position:absolute;left:257.20px;top:225.00px;font:20.5px/27px 'Liberation Sans',sans-serif;color:#000;white-space:pre;letter-spacing:-0.127px;">GPa/m&gt;</span>
<div style="position:absolute;left:63.4px;top:269.5px;width:10.0px;height:1px;background:repeating-linear-gradient(90deg,#8a8a8a 0 1px,transparent 1px 2.2px)"></div>
<div style="position:absolute;left:50.1px;top:263.8px;width:11.5px;height:11.5px;border:1px solid #8f8f8f;border-radius:2px;background:linear-gradient(#fff 0,#fff 50%,#e4e4e4 50%,#e9e9e9 100%)"></div><div style="position:absolute;left:52.2px;top:269.2px;width:8.6px;height:1.5px;background:#3c4a6e"></div><div style="position:absolute;left:55.6px;top:265.6px;width:1.5px;height:8.8px;background:#3c4a6e"></div>
<svg style="position:absolute;left:75.0px;top:258.0px" width="25" height="23" viewBox="0 0 25 23"><path d="M2.6 0.6 L23.2 6.2 L22.1 12.1 L0.5 6.5Z" fill="#1496e0"/><rect x="0.2" y="15.2" width="22.6" height="5.8" fill="#1496e0"/></svg>
<span style="position:absolute;left:106.80px;top:257.00px;font:20.5px/27px 'Liberation Sans',sans-serif;color:#000;white-space:pre;letter-spacing:0.434px;">contact &lt;2</span><span style="position:absolute;left:209.30px;top:261.90px;font:15px/20px 'Liberation Sans',sans-serif;color:#000;white-space:pre;">×</span><span style="position:absolute;left:222.60px;top:257.00px;font:20.5px/27px 'Liberation Sans',sans-serif;color:#000;white-space:pre;letter-spacing:-2.101px;">10</span><span style="position:absolute;left:242.20px;top:257.40px;font:13px/17px 'Liberation Sans',sans-serif;color:#000;white-space:pre;">3</span><span style="position:absolute;left:257.20px;top:257.00px;font:20.5px/27px 'Liberation Sans',sans-serif;color:#000;white-space:pre;letter-spacing:-0.127px;">GPa/m&gt;</span>
<div style="position:absolute;left:57.4px;top:301.5px;width:18.0px;height:1px;background:repeating-linear-gradient(90deg,#8a8a8a 0 1px,transparent 1px 2.2px)"></div>
<svg style="position:absolute;left:75.0px;top:290.0px" width="22" height="23" viewBox="0 0 22 23"><path d="M0 10.5 H10" stroke="#4aa050" stroke-width="1.6"/><path d="M7 6.8 L12 10.5 L7 14.2Z" fill="#3d9446"/><rect x="12.6" y="0" width="7.6" height="22.5" fill="#1496e0"/></svg>
<span style="position:absolute;left:106.80px;top:289.00px;font:20.5px/27px 'Liberation Sans',sans-serif;color:#000;white-space:pre;letter-spacing:0.125px;">force</span>
<div style="position:absolute;left:63.4px;top:333.5px;width:10.0px;height:1px;background:repeating-linear-gradient(90deg,#8a8a8a 0 1px,transparent 1px 2.2px)"></div>
<div style="position:absolute;left:50.1px;top:327.8px;width:11.5px;height:11.5px;border:1px solid #8f8f8f;border-radius:2px;background:linear-gradient(#fff 0,#fff 50%,#e4e4e4 50%,#e9e9e9 100%)"></div><div style="position:absolute;left:52.2px;top:333.2px;width:8.6px;height:1.5px;background:#3c4a6e"></div><div style="position:absolute;left:55.6px;top:329.6px;width:1.5px;height:8.8px;background:#3c4a6e"></div>
<svg style="position:absolute;left:75.0px;top:322.0px" width="25" height="23" viewBox="0 0 25 23"><path d="M2.6 0.6 L23.2 6.2 L22.1 12.1 L0.5 6.5Z" fill="#1496e0"/><rect x="0.2" y="15.2" width="22.6" height="5.8" fill="#1496e0"/></svg>
<span style="position:absolute;left:106.80px;top:321.00px;font:20.5px/27px 'Liberation Sans',sans-serif;color:#000;white-space:pre;letter-spacing:0.434px;">contact &lt;2</span><span style="position:absolute;left:209.30px;top:325.90px;font:15px/20px 'Liberation Sans',sans-serif;color:#000;white-space:pre;">×</span><span style="position:absolute;left:222.60px;top:321.00px;font:20.5px/27px 'Liberation Sans',sans-serif;color:#000;white-space:pre;letter-spacing:-2.101px;">10</span><span style="position:absolute;left:242.20px;top:321.40px;font:13px/17px 'Liberation Sans',sans-serif;color:#000;white-space:pre;">3</span><span style="position:absolute;left:257.20px;top:321.00px;font:20.5px/27px 'Liberation Sans',sans-serif;color:#000;white-space:pre;letter-spacing:-0.127px;">GPa/m&gt;</span>
<div style="position:absolute;left:57.4px;top:365.5px;width:18.0px;height:1px;background:repeating-linear-gradient(90deg,#8a8a8a 0 1px,transparent 1px 2.2px)"></div>
<svg style="position:absolute;left:73.3px;top:356.2px" width="27" height="17" viewBox="0 0 27 17"><rect x="0.6" y="0.6" width="25.4" height="15.6" fill="#fff" stroke="#a8aee2" stroke-width="1.2"/><path d="M3.5 8.4 H11 M15.6 8.4 H23" stroke="#3d9446" stroke-width="1.3"/><path d="M8 4.8 L13 8.4 L8 12Z M18.6 4.8 L13.6 8.4 L18.6 12Z" fill="#3d9446"/></svg>
<span style="position:absolute;left:106.80px;top:353.00px;font:20.5px/27px 'Liberation Sans',sans-serif;color:#e0a43a;white-space:pre;letter-spacing:0.328px;">pre-tension section &lt;5</span><span style="position:absolute;left:319.20px;top:357.90px;font:15px/20px 'Liberation Sans',sans-serif;color:#e0a43a;white-space:pre;">×</span><span style="position:absolute;left:332.60px;top:353.00px;font:20.5px/27px 'Liberation Sans',sans-serif;color:#e0a43a;white-space:pre;letter-spacing:-2.101px;">10</span><span style="position:absolute;left:352.20px;top:353.40px;font:13px/17px 'Liberation Sans',sans-serif;color:#e0a43a;white-space:pre;">3</span><span style="position:absolute;left:367.00px;top:353.00px;font:20.5px/27px 'Liberation Sans',sans-serif;color:#e0a43a;white-space:pre;letter-spacing:0.244px;">lbf&gt;</span>
<div style="position:absolute;left:57.4px;top:397.5px;width:18.0px;height:1px;background:repeating-linear-gradient(90deg,#8a8a8a 0 1px,transparent 1px 2.2px)"></div>
<svg style="position:absolute;left:73.8px;top:387.0px" width="27" height="22" viewBox="0 0 27 22"><rect x="0.5" y="0" width="25" height="8.8" fill="#1496e0"/><path d="M5 9 V12 M2 12.5 L8.5 11 M2 15.5 L8.5 14 M2 18.5 L8.5 17 M5 18 V21" stroke="#666" stroke-width="1.2" fill="none"/><path d="M21 9 V12 M18 12.5 L24.5 11 M18 15.5 L24.5 14 M18 18.5 L24.5 17 M21 18 V21" stroke="#666" stroke-width="1.2" fill="none"/></svg>
<span style="position:absolute;left:106.80px;top:385.00px;font:20.5px/27px 'Liberation Sans',sans-serif;color:#000;white-space:pre;letter-spacing:0.184px;">elastic support &lt;1 GPa/m&gt;</span>
<div style="position:absolute;left:57.4px;top:429.5px;width:18.0px;height:1px;background:repeating-linear-gradient(90deg,#8a8a8a 0 1px,transparent 1px 2.2px)"></div>
<span style="position:absolute;left:72.8px;top:410.4px;font:italic 27px/30px 'Liberation Serif',serif;color:#555;letter-spacing:-0.5px">u</span><span style="position:absolute;left:88.8px;top:421.4px;font:italic 23px/24px 'Liberation Serif',serif;color:#555">x</span>
<span style="position:absolute;left:106.80px;top:417.00px;font:20.5px/27px 'Liberation Sans',sans-serif;color:#000;white-space:pre;letter-spacing:0.356px;">constraint equation</span>
<div style="position:absolute;left:57.4px;top:461.5px;width:18.0px;height:1px;background:repeating-linear-gradient(90deg,#8a8a8a 0 1px,transparent 1px 2.2px)"></div>
<span style="position:absolute;left:72.8px;top:442.4px;font:italic 27px/30px 'Liberation Serif',serif;color:#555;letter-spacing:-0.5px">u</span><span style="position:absolute;left:88.8px;top:453.4px;font:italic 23px/24px 'Liberation Serif',serif;color:#555">x</span>
<span style="position:absolute;left:106.80px;top:449.00px;font:20.5px/27px 'Liberation Sans',sans-serif;color:#000;white-space:pre;letter-spacing:0.356px;">constraint equation</span>
<div style="position:absolute;left:26.5px;top:493.5px;width:18.0px;height:1px;background:repeating-linear-gradient(90deg,#8a8a8a 0 1px,transparent 1px 2.2px)"></div>
<svg style="position:absolute;left:42.3px;top:479.4px" width="28" height="24" viewBox="0 0 28 24"><path d="M1.2 3.2 Q1.2 0.8 3.5 0.8 H8.2 Q9.8 0.8 10.6 2.2 L11.8 4.2 H24.4 Q26.4 4.2 26.4 6.2 V21 Q26.4 23 24.4 23 H3.2 Q1.2 23 1.2 21Z" fill="#f7cf6e" stroke="#e3b04e" stroke-width="1"/><path d="M1.8 7 H25.8" stroke="#fbe4a6" stroke-width="1.2"/><path d="M7 11 L16 8.5 L22 9.5 L22 18 L13 21 L7 19.5Z" fill="#8a8a80" stroke="#555" stroke-width="0.8"/><path d="M7 11 L13 12.5 L22 9.5 M13 12.5 V21 M7 15 L13 16.7 L22 13.8 M10 11.8 V20.2 M17.5 11 V19.5" stroke="#444" stroke-width="0.8" fill="none"/><path d="M8 12 L12.5 13.2 V19.5 L8 18.4Z" fill="#e8f020"/><path d="M13.5 13.2 L17 12 V15 L13.5 16.2Z" fill="#e8f020"/></svg>
<span style="position:absolute;left:75.90px;top:481.00px;font:20.5px/27px 'Liberation Sans',sans-serif;color:#000;white-space:pre;letter-spacing:0.009px;">Named Selections</span>
<div style="position:absolute;left:32.5px;top:525.5px;width:10.0px;height:1px;background:repeating-linear-gradient(90deg,#8a8a8a 0 1px,transparent 1px 2.2px)"></div>
<div style="position:absolute;left:19.2px;top:519.8px;width:11.5px;height:11.5px;border:1px solid #8f8f8f;border-radius:2px;background:linear-gradient(#fff 0,#fff 50%,#e4e4e4 50%,#e9e9e9 100%)"></div><div style="position:absolute;left:21.3px;top:525.2px;width:8.6px;height:1.5px;background:#3c4a6e"></div>
<svg style="position:absolute;left:42.3px;top:511.4px" width="28" height="24" viewBox="0 0 28 24"><path d="M1.2 3.2 Q1.2 0.8 3.5 0.8 H8.2 Q9.8 0.8 10.6 2.2 L11.8 4.2 H24.4 Q26.4 4.2 26.4 6.2 V21 Q26.4 23 24.4 23 H3.2 Q1.2 23 1.2 21Z" fill="#f7cf6e" stroke="#e3b04e" stroke-width="1"/><path d="M1.8 7 H25.8" stroke="#fbe4a6" stroke-width="1.2"/><text x="13.9" y="18.4" text-anchor="middle" font-family="Liberation Sans, sans-serif" font-weight="bold" font-size="10.4" fill="#e23a14" stroke="#e23a14" stroke-width="0.5" textLength="20" lengthAdjust="spacingAndGlyphs">CCX</text></svg>
<span style="position:absolute;left:75.90px;top:513.00px;font:20.5px/27px 'Liberation Sans',sans-serif;color:#000;white-space:pre;letter-spacing:-1.894px;">CCX</span>
<div style="position:absolute;left:57.4px;top:557.5px;width:18.0px;height:1px;background:repeating-linear-gradient(90deg,#8a8a8a 0 1px,transparent 1px 2.2px)"></div>
<span style="position:absolute;left:106.80px;top:545.00px;font:20.5px/27px 'Liberation Sans',sans-serif;color:#c2c2c2;white-space:pre;letter-spacing:-0.152px;">modify keyword &lt;*STATIC,SOLVER=PARDISO&gt;</span>
<div style="position:absolute;left:57.4px;top:589.5px;width:18.0px;height:1px;background:repeating-linear-gradient(90deg,#8a8a8a 0 1px,transparent 1px 2.2px)"></div>
<span style="position:absolute;left:106.80px;top:577.00px;font:20.5px/27px 'Liberation Sans',sans-serif;color:#000;white-space:pre;letter-spacing:0.238px;">no extra contact step</span>
<div style="position:absolute;left:57.4px;top:621.5px;width:18.0px;height:1px;background:repeating-linear-gradient(90deg,#8a8a8a 0 1px,transparent 1px 2.2px)"></div>
<span style="position:absolute;left:106.80px;top:609.00px;font:20.5px/27px 'Liberation Sans',sans-serif;color:#c9c9c9;white-space:pre;letter-spacing:0.130px;">custom element type &lt;C3D8R&gt;</span>
<div style="position:absolute;left:57.4px;top:653.5px;width:18.0px;height:1px;background:repeating-linear-gradient(90deg,#8a8a8a 0 1px,transparent 1px 2.2px)"></div>
<span style="position:absolute;left:106.80px;top:641.00px;font:20.5px/27px 'Liberation Sans',sans-serif;color:#000;white-space:pre;letter-spacing:-0.205px;">modify keyword &lt;*STATIC,SOLVER=PASTIX&gt;</span>
<div style="position:absolute;left:32.5px;top:685.5px;width:10.0px;height:1px;background:repeating-linear-gradient(90deg,#8a8a8a 0 1px,transparent 1px 2.2px)"></div>
<div style="position:absolute;left:19.2px;top:679.8px;width:11.5px;height:11.5px;border:1px solid #8f8f8f;border-radius:2px;background:linear-gradient(#fff 0,#fff 50%,#e4e4e4 50%,#e9e9e9 100%)"></div><div style="position:absolute;left:21.3px;top:685.2px;width:8.6px;height:1.5px;background:#3c4a6e"></div>
<svg style="position:absolute;left:42.3px;top:671.4px" width="28" height="24" viewBox="0 0 28 24"><path d="M1.2 3.2 Q1.2 0.8 3.5 0.8 H8.2 Q9.8 0.8 10.6 2.2 L11.8 4.2 H24.4 Q26.4 4.2 26.4 6.2 V21 Q26.4 23 24.4 23 H3.2 Q1.2 23 1.2 21Z" fill="#f7cf6e" stroke="#e3b04e" stroke-width="1"/><path d="M1.8 7 H25.8" stroke="#fbe4a6" stroke-width="1.2"/><defs><linearGradient id="gsf" gradientUnits="userSpaceOnUse" x1="8" y1="20" x2="18" y2="9"><stop offset="0" stop-color="#c01818"/><stop offset="0.35" stop-color="#f7a010"/><stop offset="0.55" stop-color="#f0f020"/><stop offset="0.75" stop-color="#30c040"/><stop offset="1" stop-color="#2098c8"/></linearGradient></defs><path d="M13.6 5.6 L20.6 20 L6.6 20Z" fill="url(#gsf)" stroke="#222" stroke-width="1.3" stroke-linejoin="round"/></svg>
<span style="position:absolute;left:75.90px;top:673.00px;font:20.5px/27px 'Liberation Sans',sans-serif;color:#000;white-space:pre;letter-spacing:0.240px;">Solution</span>
<div style="position:absolute;left:63.4px;top:717.5px;width:10.0px;height:1px;background:repeating-linear-gradient(90deg,#8a8a8a 0 1px,transparent 1px 2.2px)"></div>
<div style="position:absolute;left:50.1px;top:711.8px;width:11.5px;height:11.5px;border:1px solid #8f8f8f;border-radius:2px;background:linear-gradient(#fff 0,#fff 50%,#e4e4e4 50%,#e9e9e9 100%)"></div><div style="position:absolute;left:52.2px;top:717.2px;width:8.6px;height:1.5px;background:#3c4a6e"></div>
<svg style="position:absolute;left:73.2px;top:703.4px" width="28" height="24" viewBox="0 0 28 24"><path d="M1.2 3.2 Q1.2 0.8 3.5 0.8 H8.2 Q9.8 0.8 10.6 2.2 L11.8 4.2 H24.4 Q26.4 4.2 26.4 6.2 V21 Q26.4 23 24.4 23 H3.2 Q1.2 23 1.2 21Z" fill="#f7cf6e" stroke="#e3b04e" stroke-width="1"/><path d="M1.8 7 H25.8" stroke="#fbe4a6" stroke-width="1.2"/><g transform="translate(6.4,4.2) scale(0.68)"><path d="M1 9.2 H6.6 Q5.2 7.4 5.4 5.6 Q5.8 2.2 9.3 2.2 Q12.8 2.2 13.2 5.6 Q13.4 7.4 12 9.2 H18.6 V14.2 Q20.2 12.6 22 12.8 Q25 13.2 25 16.4 Q25 19.6 22 20 Q20.2 20.2 18.6 18.6 V24.6 H1 V19.6 H4.2 Q6.4 19.6 6.4 16.8 Q6.4 14 4.2 14 H1Z" fill="#2aa85a" stroke="#1c6a38" stroke-width="1.5" stroke-linejoin="round"/></g></svg>
<span style="position:absolute;left:106.80px;top:705.00px;font:20.5px/27px 'Liberation Sans',sans-serif;color:#000;white-space:pre;letter-spacing:0.157px;">Components</span>
<div style="position:absolute;left:88.5px;top:749.5px;width:18.0px;height:1px;background:repeating-linear-gradient(90deg,#8a8a8a 0 1px,transparent 1px 2.2px)"></div>
<svg style="position:absolute;left:105.1px;top:733.0px" width="27" height="26" viewBox="0 0 27 26"><path d="M1 9.2 H6.6 Q5.2 7.4 5.4 5.6 Q5.8 2.2 9.3 2.2 Q12.8 2.2 13.2 5.6 Q13.4 7.4 12 9.2 H18.6 V14.2 Q20.2 12.6 22 12.8 Q25 13.2 25 16.4 Q25 19.6 22 20 Q20.2 20.2 18.6 18.6 V24.6 H1 V19.6 H4.2 Q6.4 19.6 6.4 16.8 Q6.4 14 4.2 14 H1Z" fill="#fb1010" stroke="#3a3a3a" stroke-width="1.3" stroke-linejoin="round"/></svg>
<span style="position:absolute;left:137.90px;top:737.00px;font:20.5px/27px 'Liberation Sans',sans-serif;color:#000;white-space:pre;letter-spacing:0.095px;">Bolts &lt;672 elements&gt;</span>
<div style="position:absolute;left:88.5px;top:781.5px;width:18.0px;height:1px;background:repeating-linear-gradient(90deg,#8a8a8a 0 1px,transparent 1px 2.2px)"></div>
<svg style="position:absolute;left:105.1px;top:765.0px" width="27" height="26" viewBox="0 0 27 26"><path d="M1 9.2 H6.6 Q5.2 7.4 5.4 5.6 Q5.8 2.2 9.3 2.2 Q12.8 2.2 13.2 5.6 Q13.4 7.4 12 9.2 H18.6 V14.2 Q20.2 12.6 22 12.8 Q25 13.2 25 16.4 Q25 19.6 22 20 Q20.2 20.2 18.6 18.6 V24.6 H1 V19.6 H4.2 Q6.4 19.6 6.4 16.8 Q6.4 14 4.2 14 H1Z" fill="#d8826c" stroke="#3a3a3a" stroke-width="1.3" stroke-linejoin="round"/></svg>
<span style="position:absolute;left:137.90px;top:769.00px;font:20.5px/27px 'Liberation Sans',sans-serif;color:#000;white-space:pre;letter-spacing:0.229px;">Component &lt;436 elements&gt;</span>
<div style="position:absolute;left:88.5px;top:813.5px;width:18.0px;height:1px;background:repeating-linear-gradient(90deg,#8a8a8a 0 1px,transparent 1px 2.2px)"></div>
<svg style="position:absolute;left:105.1px;top:797.0px" width="27" height="26" viewBox="0 0 27 26"><path d="M1 9.2 H6.6 Q5.2 7.4 5.4 5.6 Q5.8 2.2 9.3 2.2 Q12.8 2.2 13.2 5.6 Q13.4 7.4 12 9.2 H18.6 V14.2 Q20.2 12.6 22 12.8 Q25 13.2 25 16.4 Q25 19.6 22 20 Q20.2 20.2 18.6 18.6 V24.6 H1 V19.6 H4.2 Q6.4 19.6 6.4 16.8 Q6.4 14 4.2 14 H1Z" fill="#dcdcdc" stroke="#3a3a3a" stroke-width="1.3" stroke-linejoin="round"/></svg>
<span style="position:absolute;left:137.90px;top:801.00px;font:20.5px/27px 'Liberation Sans',sans-serif;color:#000;white-space:pre;letter-spacing:0.306px;">Default &lt;1 elements&gt;</span>
<div style="position:absolute;left:88.5px;top:845.5px;width:18.0px;height:1px;background:repeating-linear-gradient(90deg,#8a8a8a 0 1px,transparent 1px 2.2px)"></div>
<svg style="position:absolute;left:105.1px;top:829.0px" width="27" height="26" viewBox="0 0 27 26"><path d="M1 9.2 H6.6 Q5.2 7.4 5.4 5.6 Q5.8 2.2 9.3 2.2 Q12.8 2.2 13.2 5.6 Q13.4 7.4 12 9.2 H18.6 V14.2 Q20.2 12.6 22 12.8 Q25 13.2 25 16.4 Q25 19.6 22 20 Q20.2 20.2 18.6 18.6 V24.6 H1 V19.6 H4.2 Q6.4 19.6 6.4 16.8 Q6.4 14 4.2 14 H1Z" fill="#dcdcdc" stroke="#3a3a3a" stroke-width="1.3" stroke-linejoin="round"/></svg>
<span style="position:absolute;left:137.90px;top:833.00px;font:20.5px/27px 'Liberation Sans',sans-serif;color:#000;white-space:pre;letter-spacing:0.139px;">Default(2) &lt;820 elements&gt;</span>
<div style="position:absolute;left:103.8px;top:861.0px;width:155.5px;height:32px;background:#ebebeb"></div>
<div style="position:absolute;left:57.4px;top:877.5px;width:18.0px;height:1px;background:repeating-linear-gradient(90deg,#8a8a8a 0 1px,transparent 1px 2.2px)"></div>
<svg style="position:absolute;left:72.0px;top:862.4px" width="28" height="30" viewBox="0 0 28 30"><defs><linearGradient id="g1" gradientUnits="userSpaceOnUse" x1="4" y1="26" x2="22" y2="10"><stop offset="0" stop-color="#c01818"/><stop offset="0.14" stop-color="#d82a10"/><stop offset="0.24" stop-color="#f79010"/><stop offset="0.34" stop-color="#f8f010"/><stop offset="0.48" stop-color="#eef020"/><stop offset="0.56" stop-color="#40c840"/><stop offset="0.7" stop-color="#10a850"/><stop offset="0.78" stop-color="#18a8a8"/><stop offset="1" stop-color="#2098c8"/></linearGradient></defs><path d="M14 3 L25.6 26 L2.4 26 Z" fill="url(#g1)" stroke="#1a1a1a" stroke-width="1.6" stroke-linejoin="round"/><path d="M3 26 L25 26" stroke="#5a1010" stroke-width="1.6"/><circle cx="14" cy="3.2" r="2" fill="#8a8a8a" stroke="#222" stroke-width="1.2"/><circle cx="2.8" cy="26" r="2" fill="#8a8a8a" stroke="#222" stroke-width="1.2"/><circle cx="25.2" cy="26" r="2" fill="#8a8a8a" stroke="#222" stroke-width="1.2"/></svg>
<span style="position:absolute;left:106.80px;top:865.00px;font:20.5px/27px 'Liberation Sans',sans-serif;color:#000;white-space:pre;letter-spacing:-0.128px;">von Mises stress</span>
<div style="position:absolute;left:63.4px;top:909.5px;width:10.0px;height:1px;background:repeating-linear-gradient(90deg,#8a8a8a 0 1px,transparent 1px 2.2px)"></div>
<div style="position:absolute;left:50.1px;top:903.8px;width:11.5px;height:11.5px;border:1px solid #8f8f8f;border-radius:2px;background:linear-gradient(#fff 0,#fff 50%,#e4e4e4 50%,#e9e9e9 100%)"></div><div style="position:absolute;left:52.2px;top:909.2px;width:8.6px;height:1.5px;background:#3c4a6e"></div>
<svg style="position:absolute;left:73.5px;top:897.0px" width="28" height="26" viewBox="0 0 28 26"><path d="M1 2 H11" stroke="#f4e23a" stroke-width="1.4"/><path d="M4.5 2 l3 -2.6 l3 2.6 l-3 2.6z" fill="#f4e23a"/><path d="M2 11 H18" stroke="#ee9530" stroke-width="1.4"/><circle cx="13.5" cy="11" r="2.3" fill="#ee8a20"/><path d="M1.5 21.5 H27" stroke="#e04848" stroke-width="1.4"/><circle cx="22.3" cy="21.5" r="2.3" fill="#d83030"/></svg>
<span style="position:absolute;left:106.80px;top:897.00px;font:20.5px/27px 'Liberation Sans',sans-serif;color:#000;white-space:pre;letter-spacing:0.234px;">displacement</span>
<div style="position:absolute;left:88.5px;top:941.5px;width:18.0px;height:1px;background:repeating-linear-gradient(90deg,#8a8a8a 0 1px,transparent 1px 2.2px)"></div>
<svg style="position:absolute;left:103.1px;top:926.4px" width="28" height="30" viewBox="0 0 28 30"><defs><linearGradient id="g2" gradientUnits="userSpaceOnUse" x1="4" y1="26" x2="22" y2="10"><stop offset="0" stop-color="#c01818"/><stop offset="0.14" stop-color="#d82a10"/><stop offset="0.24" stop-color="#f79010"/><stop offset="0.34" stop-color="#f8f010"/><stop offset="0.48" stop-color="#eef020"/><stop offset="0.56" stop-color="#40c840"/><stop offset="0.7" stop-color="#10a850"/><stop offset="0.78" stop-color="#18a8a8"/><stop offset="1" stop-color="#2098c8"/></linearGradient></defs><path d="M14 3 L25.6 26 L2.4 26 Z" fill="url(#g2)" stroke="#1a1a1a" stroke-width="1.6" stroke-linejoin="round"/><path d="M3 26 L25 26" stroke="#5a1010" stroke-width="1.6"/><circle cx="14" cy="3.2" r="2" fill="#8a8a8a" stroke="#222" stroke-width="1.2"/><circle cx="2.8" cy="26" r="2" fill="#8a8a8a" stroke="#222" stroke-width="1.2"/><circle cx="25.2" cy="26" r="2" fill="#8a8a8a" stroke="#222" stroke-width="1.2"/></svg>
<span style="position:absolute;left:137.90px;top:929.00px;font:20.5px/27px 'Liberation Sans',sans-serif;color:#000;white-space:pre;letter-spacing:0.418px;">magnitude</span>
<div style="position:absolute;left:88.5px;top:973.5px;width:18.0px;height:1px;background:repeating-linear-gradient(90deg,#8a8a8a 0 1px,transparent 1px 2.2px)"></div>
<svg style="position:absolute;left:103.1px;top:958.4px" width="28" height="30" viewBox="0 0 28 30"><defs><linearGradient id="g3" gradientUnits="userSpaceOnUse" x1="4" y1="26" x2="22" y2="10"><stop offset="0" stop-color="#c01818"/><stop offset="0.14" stop-color="#d82a10"/><stop offset="0.24" stop-color="#f79010"/><stop offset="0.34" stop-color="#f8f010"/><stop offset="0.48" stop-color="#eef020"/><stop offset="0.56" stop-color="#40c840"/><stop offset="0.7" stop-color="#10a850"/><stop offset="0.78" stop-color="#18a8a8"/><stop offset="1" stop-color="#2098c8"/></linearGradient></defs><path d="M14 3 L25.6 26 L2.4 26 Z" fill="url(#g3)" stroke="#1a1a1a" stroke-width="1.6" stroke-linejoin="round"/><path d="M3 26 L25 26" stroke="#5a1010" stroke-width="1.6"/><circle cx="14" cy="3.2" r="2" fill="#8a8a8a" stroke="#222" stroke-width="1.2"/><circle cx="2.8" cy="26" r="2" fill="#8a8a8a" stroke="#222" stroke-width="1.2"/><circle cx="25.2" cy="26" r="2" fill="#8a8a8a" stroke="#222" stroke-width="1.2"/></svg>
<span style="position:absolute;left:137.90px;top:961.00px;font:20.5px/27px 'Liberation Sans',sans-serif;color:#000;white-space:pre;letter-spacing:-1.074px;">X</span>
<div style="position:absolute;left:88.5px;top:1005.5px;width:18.0px;height:1px;background:repeating-linear-gradient(90deg,#8a8a8a 0 1px,transparent 1px 2.2px)"></div>
<svg style="position:absolute;left:103.1px;top:990.4px" width="28" height="30" viewBox="0 0 28 30"><defs><linearGradient id="g4" gradientUnits="userSpaceOnUse" x1="4" y1="26" x2="22" y2="10"><stop offset="0" stop-color="#c01818"/><stop offset="0.14" stop-color="#d82a10"/><stop offset="0.24" stop-color="#f79010"/><stop offset="0.34" stop-color="#f8f010"/><stop offset="0.48" stop-color="#eef020"/><stop offset="0.56" stop-color="#40c840"/><stop offset="0.7" stop-color="#10a850"/><stop offset="0.78" stop-color="#18a8a8"/><stop offset="1" stop-color="#2098c8"/></linearGradient></defs><path d="M14 3 L25.6 26 L2.4 26 Z" fill="url(#g4)" stroke="#1a1a1a" stroke-width="1.6" stroke-linejoin="round"/><path d="M3 26 L25 26" stroke="#5a1010" stroke-width="1.6"/><circle cx="14" cy="3.2" r="2" fill="#8a8a8a" stroke="#222" stroke-width="1.2"/><circle cx="2.8" cy="26" r="2" fill="#8a8a8a" stroke="#222" stroke-width="1.2"/><circle cx="25.2" cy="26" r="2" fill="#8a8a8a" stroke="#222" stroke-width="1.2"/></svg>
<span style="position:absolute;left:137.90px;top:993.00px;font:20.5px/27px 'Liberation Sans',sans-serif;color:#000;white-space:pre;letter-spacing:-1.074px;">Y</span>
<div style="position:absolute;left:88.5px;top:1037.5px;width:18.0px;height:1px;background:repeating-linear-gradient(90deg,#8a8a8a 0 1px,transparent 1px 2.2px)"></div>
<svg style="position:absolute;left:103.1px;top:1022.4px" width="28" height="30" viewBox="0 0 28 30"><defs><linearGradient id="g5" gradientUnits="userSpaceOnUse" x1="4" y1="26" x2="22" y2="10"><stop offset="0" stop-color="#c01818"/><stop offset="0.14" stop-color="#d82a10"/><stop offset="0.24" stop-color="#f79010"/><stop offset="0.34" stop-color="#f8f010"/><stop offset="0.48" stop-color="#eef020"/><stop offset="0.56" stop-color="#40c840"/><stop offset="0.7" stop-color="#10a850"/><stop offset="0.78" stop-color="#18a8a8"/><stop offset="1" stop-color="#2098c8"/></linearGradient></defs><path d="M14 3 L25.6 26 L2.4 26 Z" fill="url(#g5)" stroke="#1a1a1a" stroke-width="1.6" stroke-linejoin="round"/><path d="M3 26 L25 26" stroke="#5a1010" stroke-width="1.6"/><circle cx="14" cy="3.2" r="2" fill="#8a8a8a" stroke="#222" stroke-width="1.2"/><circle cx="2.8" cy="26" r="2" fill="#8a8a8a" stroke="#222" stroke-width="1.2"/><circle cx="25.2" cy="26" r="2" fill="#8a8a8a" stroke="#222" stroke-width="1.2"/></svg>
<span style="position:absolute;left:137.90px;top:1025.00px;font:20.5px/27px 'Liberation Sans',sans-serif;color:#000;white-space:pre;letter-spacing:-0.322px;">Z</span>
<div style="position:absolute;left:63.4px;top:1069.5px;width:10.0px;height:1px;background:repeating-linear-gradient(90deg,#8a8a8a 0 1px,transparent 1px 2.2px)"></div>
<div style="position:absolute;left:50.1px;top:1063.8px;width:11.5px;height:11.5px;border:1px solid #8f8f8f;border-radius:2px;background:linear-gradient(#fff 0,#fff 50%,#e4e4e4 50%,#e9e9e9 100%)"></div><div style="position:absolute;left:52.2px;top:1069.2px;width:8.6px;height:1.5px;background:#3c4a6e"></div><div style="position:absolute;left:55.6px;top:1065.6px;width:1.5px;height:8.8px;background:#3c4a6e"></div>
<svg style="position:absolute;left:72.0px;top:1054.4px" width="28" height="30" viewBox="0 0 28 30"><defs><linearGradient id="g6" gradientUnits="userSpaceOnUse" x1="4" y1="26" x2="22" y2="10"><stop offset="0" stop-color="#c01818"/><stop offset="0.14" stop-color="#d82a10"/><stop offset="0.24" stop-color="#f79010"/><stop offset="0.34" stop-color="#f8f010"/><stop offset="0.48" stop-color="#eef020"/><stop offset="0.56" stop-color="#40c840"/><stop offset="0.7" stop-color="#10a850"/><stop offset="0.78" stop-color="#18a8a8"/><stop offset="1" stop-color="#2098c8"/></linearGradient></defs><path d="M14 3 L25.6 26 L2.4 26 Z" fill="url(#g6)" stroke="#1a1a1a" stroke-width="1.6" stroke-linejoin="round"/><path d="M3 26 L25 26" stroke="#5a1010" stroke-width="1.6"/><circle cx="14" cy="3.2" r="2" fill="#8a8a8a" stroke="#222" stroke-width="1.2"/><circle cx="2.8" cy="26" r="2" fill="#8a8a8a" stroke="#222" stroke-width="1.2"/><circle cx="25.2" cy="26" r="2" fill="#8a8a8a" stroke="#222" stroke-width="1.2"/></svg>
<span style="position:absolute;left:106.80px;top:1057.00px;font:20.5px/27px 'Liberation Sans',sans-serif;color:#000;white-space:pre;letter-spacing:-0.529px;">stress</span>
<div style="position:absolute;left:63.4px;top:1101.5px;width:10.0px;height:1px;background:repeating-linear-gradient(90deg,#8a8a8a 0 1px,transparent 1px 2.2px)"></div>
<div style="position:absolute;left:50.1px;top:1095.8px;width:11.5px;height:11.5px;border:1px solid #8f8f8f;border-radius:2px;background:linear-gradient(#fff 0,#fff 50%,#e4e4e4 50%,#e9e9e9 100%)"></div><div style="position:absolute;left:52.2px;top:1101.2px;width:8.6px;height:1.5px;background:#3c4a6e"></div><div style="position:absolute;left:55.6px;top:1097.6px;width:1.5px;height:8.8px;background:#3c4a6e"></div>
<svg style="position:absolute;left:72.0px;top:1086.4px" width="28" height="30" viewBox="0 0 28 30"><defs><linearGradient id="g7" gradientUnits="userSpaceOnUse" x1="4" y1="26" x2="22" y2="10"><stop offset="0" stop-color="#c01818"/><stop offset="0.14" stop-color="#d82a10"/><stop offset="0.24" stop-color="#f79010"/><stop offset="0.34" stop-color="#f8f010"/><stop offset="0.48" stop-color="#eef020"/><stop offset="0.56" stop-color="#40c840"/><stop offset="0.7" stop-color="#10a850"/><stop offset="0.78" stop-color="#18a8a8"/><stop offset="1" stop-color="#2098c8"/></linearGradient></defs><path d="M14 3 L25.6 26 L2.4 26 Z" fill="url(#g7)" stroke="#1a1a1a" stroke-width="1.6" stroke-linejoin="round"/><path d="M3 26 L25 26" stroke="#5a1010" stroke-width="1.6"/><circle cx="14" cy="3.2" r="2" fill="#8a8a8a" stroke="#222" stroke-width="1.2"/><circle cx="2.8" cy="26" r="2" fill="#8a8a8a" stroke="#222" stroke-width="1.2"/><circle cx="25.2" cy="26" r="2" fill="#8a8a8a" stroke="#222" stroke-width="1.2"/></svg>
<span style="position:absolute;left:106.80px;top:1089.00px;font:20.5px/27px 'Liberation Sans',sans-serif;color:#000;white-space:pre;letter-spacing:-0.075px;">strain (Green-Lagrange)</span>
<div style="position:absolute;left:57.4px;top:1133.5px;width:18.0px;height:1px;background:repeating-linear-gradient(90deg,#8a8a8a 0 1px,transparent 1px 2.2px)"></div>
<svg style="position:absolute;left:72.0px;top:1118.4px" width="28" height="30" viewBox="0 0 28 30"><defs><linearGradient id="g8" gradientUnits="userSpaceOnUse" x1="4" y1="26" x2="22" y2="10"><stop offset="0" stop-color="#c01818"/><stop offset="0.14" stop-color="#d82a10"/><stop offset="0.24" stop-color="#f79010"/><stop offset="0.34" stop-color="#f8f010"/><stop offset="0.48" stop-color="#eef020"/><stop offset="0.56" stop-color="#40c840"/><stop offset="0.7" stop-color="#10a850"/><stop offset="0.78" stop-color="#18a8a8"/><stop offset="1" stop-color="#2098c8"/></linearGradient></defs><path d="M14 3 L25.6 26 L2.4 26 Z" fill="url(#g8)" stroke="#1a1a1a" stroke-width="1.6" stroke-linejoin="round"/><path d="M3 26 L25 26" stroke="#5a1010" stroke-width="1.6"/><circle cx="14" cy="3.2" r="2" fill="#8a8a8a" stroke="#222" stroke-width="1.2"/><circle cx="2.8" cy="26" r="2" fill="#8a8a8a" stroke="#222" stroke-width="1.2"/><circle cx="25.2" cy="26" r="2" fill="#8a8a8a" stroke="#222" stroke-width="1.2"/></svg>
<span style="position:absolute;left:106.80px;top:1121.00px;font:20.5px/27px 'Liberation Sans',sans-serif;color:#000;white-space:pre;letter-spacing:0.135px;">strain energy density</span>
<div style="position:absolute;left:63.4px;top:1165.5px;width:10.0px;height:1px;background:repeating-linear-gradient(90deg,#8a8a8a 0 1px,transparent 1px 2.2px)"></div>
<div style="position:absolute;left:50.1px;top:1159.8px;width:11.5px;height:11.5px;border:1px solid #8f8f8f;border-radius:2px;background:linear-gradient(#fff 0,#fff 50%,#e4e4e4 50%,#e9e9e9 100%)"></div><div style="position:absolute;left:52.2px;top:1165.2px;width:8.6px;height:1.5px;background:#3c4a6e"></div>
<svg style="position:absolute;left:73.5px;top:1153.0px" width="28" height="26" viewBox="0 0 28 26"><path d="M1 2 H11" stroke="#f4e23a" stroke-width="1.4"/><path d="M4.5 2 l3 -2.6 l3 2.6 l-3 2.6z" fill="#f4e23a"/><path d="M2 11 H18" stroke="#ee9530" stroke-width="1.4"/><circle cx="13.5" cy="11" r="2.3" fill="#ee8a20"/><path d="M1.5 21.5 H27" stroke="#e04848" stroke-width="1.4"/><circle cx="22.3" cy="21.5" r="2.3" fill="#d83030"/></svg>
<span style="position:absolute;left:106.80px;top:1153.00px;font:20.5px/27px 'Liberation Sans',sans-serif;color:#e0a43a;white-space:pre;letter-spacing:0.157px;">external force</span>
<div style="position:absolute;left:88.5px;top:1197.5px;width:18.0px;height:1px;background:repeating-linear-gradient(90deg,#8a8a8a 0 1px,transparent 1px 2.2px)"></div>
<svg style="position:absolute;left:103.1px;top:1182.4px" width="28" height="30" viewBox="0 0 28 30"><defs><linearGradient id="g9" gradientUnits="userSpaceOnUse" x1="4" y1="26" x2="22" y2="10"><stop offset="0" stop-color="#c01818"/><stop offset="0.14" stop-color="#d82a10"/><stop offset="0.24" stop-color="#f79010"/><stop offset="0.34" stop-color="#f8f010"/><stop offset="0.48" stop-color="#eef020"/><stop offset="0.56" stop-color="#40c840"/><stop offset="0.7" stop-color="#10a850"/><stop offset="0.78" stop-color="#18a8a8"/><stop offset="1" stop-color="#2098c8"/></linearGradient></defs><path d="M14 3 L25.6 26 L2.4 26 Z" fill="url(#g9)" stroke="#1a1a1a" stroke-width="1.6" stroke-linejoin="round"/><path d="M3 26 L25 26" stroke="#5a1010" stroke-width="1.6"/><circle cx="14" cy="3.2" r="2" fill="#8a8a8a" stroke="#222" stroke-width="1.2"/><circle cx="2.8" cy="26" r="2" fill="#8a8a8a" stroke="#222" stroke-width="1.2"/><circle cx="25.2" cy="26" r="2" fill="#8a8a8a" stroke="#222" stroke-width="1.2"/></svg>
<span style="position:absolute;left:137.90px;top:1185.00px;font:20.5px/27px 'Liberation Sans',sans-serif;color:#000;white-space:pre;letter-spacing:0.418px;">magnitude</span>
<div style="position:absolute;left:88.5px;top:1229.5px;width:18.0px;height:1px;background:repeating-linear-gradient(90deg,#8a8a8a 0 1px,transparent 1px 2.2px)"></div>
<svg style="position:absolute;left:103.1px;top:1214.4px" width="28" height="30" viewBox="0 0 28 30"><defs><linearGradient id="g10" gradientUnits="userSpaceOnUse" x1="4" y1="26" x2="22" y2="10"><stop offset="0" stop-color="#c01818"/><stop offset="0.14" stop-color="#d82a10"/><stop offset="0.24" stop-color="#f79010"/><stop offset="0.34" stop-color="#f8f010"/><stop offset="0.48" stop-color="#eef020"/><stop offset="0.56" stop-color="#40c840"/><stop offset="0.7" stop-color="#10a850"/><stop offset="0.78" stop-color="#18a8a8"/><stop offset="1" stop-color="#2098c8"/></linearGradient></defs><path d="M14 3 L25.6 26 L2.4 26 Z" fill="url(#g10)" stroke="#1a1a1a" stroke-width="1.6" stroke-linejoin="round"/><path d="M3 26 L25 26" stroke="#5a1010" stroke-width="1.6"/><circle cx="14" cy="3.2" r="2" fill="#8a8a8a" stroke="#222" stroke-width="1.2"/><circle cx="2.8" cy="26" r="2" fill="#8a8a8a" stroke="#222" stroke-width="1.2"/><circle cx="25.2" cy="26" r="2" fill="#8a8a8a" stroke="#222" stroke-width="1.2"/></svg>
<span style="position:absolute;left:137.90px;top:1217.00px;font:20.5px/27px 'Liberation Sans',sans-serif;color:#000;white-space:pre;letter-spacing:-1.074px;">X</span>
<div style="position:absolute;left:88.5px;top:1261.5px;width:18.0px;height:1px;background:repeating-linear-gradient(90deg,#8a8a8a 0 1px,transparent 1px 2.2px)"></div>
<svg style="position:absolute;left:103.1px;top:1246.4px" width="28" height="30" viewBox="0 0 28 30"><defs><linearGradient id="g11" gradientUnits="userSpaceOnUse" x1="4" y1="26" x2="22" y2="10"><stop offset="0" stop-color="#c01818"/><stop offset="0.14" stop-color="#d82a10"/><stop offset="0.24" stop-color="#f79010"/><stop offset="0.34" stop-color="#f8f010"/><stop offset="0.48" stop-color="#eef020"/><stop offset="0.56" stop-color="#40c840"/><stop offset="0.7" stop-color="#10a850"/><stop offset="0.78" stop-color="#18a8a8"/><stop offset="1" stop-color="#2098c8"/></linearGradient></defs><path d="M14 3 L25.6 26 L2.4 26 Z" fill="url(#g11)" stroke="#1a1a1a" stroke-width="1.6" stroke-linejoin="round"/><path d="M3 26 L25 26" stroke="#5a1010" stroke-width="1.6"/><circle cx="14" cy="3.2" r="2" fill="#8a8a8a" stroke="#222" stroke-width="1.2"/><circle cx="2.8" cy="26" r="2" fill="#8a8a8a" stroke="#222" stroke-width="1.2"/><circle cx="25.2" cy="26" r="2" fill="#8a8a8a" stroke="#222" stroke-width="1.2"/></svg>
<span style="position:absolute;left:137.90px;top:1249.00px;font:20.5px/27px 'Liberation Sans',sans-serif;color:#000;white-space:pre;letter-spacing:-1.074px;">Y</span>
<div style="position:absolute;left:88.5px;top:1293.5px;width:18.0px;height:1px;background:repeating-linear-gradient(90deg,#8a8a8a 0 1px,transparent 1px 2.2px)"></div>
<svg style="position:absolute;left:103.1px;top:1278.4px" width="28" height="30" viewBox="0 0 28 30"><defs><linearGradient id="g12" gradientUnits="userSpaceOnUse" x1="4" y1="26" x2="22" y2="10"><stop offset="0" stop-color="#c01818"/><stop offset="0.14" stop-color="#d82a10"/><stop offset="0.24" stop-color="#f79010"/><stop offset="0.34" stop-color="#f8f010"/><stop offset="0.48" stop-color="#eef020"/><stop offset="0.56" stop-color="#40c840"/><stop offset="0.7" stop-color="#10a850"/><stop offset="0.78" stop-color="#18a8a8"/><stop offset="1" stop-color="#2098c8"/></linearGradient></defs><path d="M14 3 L25.6 26 L2.4 26 Z" fill="url(#g12)" stroke="#1a1a1a" stroke-width="1.6" stroke-linejoin="round"/><path d="M3 26 L25 26" stroke="#5a1010" stroke-width="1.6"/><circle cx="14" cy="3.2" r="2" fill="#8a8a8a" stroke="#222" stroke-width="1.2"/><circle cx="2.8" cy="26" r="2" fill="#8a8a8a" stroke="#222" stroke-width="1.2"/><circle cx="25.2" cy="26" r="2" fill="#8a8a8a" stroke="#222" stroke-width="1.2"/></svg>
<span style="position:absolute;left:137.90px;top:1281.00px;font:20.5px/27px 'Liberation Sans',sans-serif;color:#000;white-space:pre;letter-spacing:-0.322px;">Z</span>
<div style="position:absolute;left:63.4px;top:1325.5px;width:10.0px;height:1px;background:repeating-linear-gradient(90deg,#8a8a8a 0 1px,transparent 1px 2.2px)"></div>
<div style="position:absolute;left:50.1px;top:1319.8px;width:11.5px;height:11.5px;border:1px solid #8f8f8f;border-radius:2px;background:linear-gradient(#fff 0,#fff 50%,#e4e4e4 50%,#e9e9e9 100%)"></div><div style="position:absolute;left:52.2px;top:1325.2px;width:8.6px;height:1.5px;background:#3c4a6e"></div><div style="position:absolute;left:55.6px;top:1321.6px;width:1.5px;height:8.8px;background:#3c4a6e"></div>
<svg style="position:absolute;left:72.0px;top:1310.4px" width="28" height="30" viewBox="0 0 28 30"><defs><linearGradient id="g13" gradientUnits="userSpaceOnUse" x1="4" y1="26" x2="22" y2="10"><stop offset="0" stop-color="#c01818"/><stop offset="0.14" stop-color="#d82a10"/><stop offset="0.24" stop-color="#f79010"/><stop offset="0.34" stop-color="#f8f010"/><stop offset="0.48" stop-color="#eef020"/><stop offset="0.56" stop-color="#40c840"/><stop offset="0.7" stop-color="#10a850"/><stop offset="0.78" stop-color="#18a8a8"/><stop offset="1" stop-color="#2098c8"/></linearGradient></defs><path d="M14 3 L25.6 26 L2.4 26 Z" fill="url(#g13)" stroke="#1a1a1a" stroke-width="1.6" stroke-linejoin="round"/><path d="M3 26 L25 26" stroke="#5a1010" stroke-width="1.6"/><circle cx="14" cy="3.2" r="2" fill="#8a8a8a" stroke="#222" stroke-width="1.2"/><circle cx="2.8" cy="26" r="2" fill="#8a8a8a" stroke="#222" stroke-width="1.2"/><circle cx="25.2" cy="26" r="2" fill="#8a8a8a" stroke="#222" stroke-width="1.2"/></svg>
<span style="position:absolute;left:106.80px;top:1313.00px;font:20.5px/27px 'Liberation Sans',sans-serif;color:#000;white-space:pre;letter-spacing:-0.097px;">contact pressure</span>
<div class="abs" style="left:587px;top:188px;width:28px;height:1134px;background:#f1f1f1"></div>
<div class="abs" style="left:597.5px;top:597px;width:7px;height:551px;background:#8b8b8b;border-radius:3.5px"></div>
<svg style="position:absolute;left:0;top:0;z-index:5" width="640" height="1435" viewBox="0 0 640 1435"><path d="M226.9 614.2C225.2 613.4 223.7 610.8 216.8 609.6C209.9 608.4 197.0 607.4 185.5 607.0C174.0 606.6 159.3 606.3 147.8 607.0C136.3 607.7 124.9 609.6 116.5 611.3C108.1 613.0 102.0 614.6 97.6 617.4C93.2 620.2 91.4 623.8 90.1 628.0C88.8 632.2 89.6 637.3 89.6 642.7C89.6 648.1 88.1 655.7 90.1 660.3C92.1 664.9 96.0 667.2 101.4 670.3C106.8 673.4 115.0 676.2 122.7 679.1C130.4 682.0 139.4 685.8 147.8 687.9C156.2 690.0 162.4 690.6 172.9 691.6C183.4 692.6 195.9 693.3 210.6 694.1C225.2 694.9 244.1 695.8 260.8 696.6C277.5 697.5 294.1 698.2 311.0 699.2C327.9 700.2 344.5 701.6 362.4 702.3C380.2 703.0 399.5 703.4 418.1 703.5C436.7 703.6 458.1 703.6 473.9 702.9C489.7 702.2 502.2 701.1 512.9 699.3C523.6 697.5 531.3 695.3 538.0 692.3C544.7 689.3 549.5 685.4 553.3 681.2C557.1 677.0 559.7 672.2 560.9 667.3C562.1 662.4 562.0 656.8 560.3 651.9C558.6 647.0 555.7 642.2 550.6 638.0C545.5 633.8 540.1 630.4 529.6 626.8C519.1 623.2 501.7 618.7 487.8 616.5C473.9 614.3 462.2 614.6 446.0 613.7C429.8 612.8 408.9 612.1 390.3 611.0C371.7 609.9 347.7 608.2 334.5 607.3C321.3 606.4 320.1 605.9 311.0 605.7C301.9 605.5 290.1 605.4 279.6 606.3C269.1 607.2 256.7 609.9 248.2 611.3C239.7 612.7 231.8 614.0 228.5 614.6" fill="none" stroke="#b8186c" stroke-width="9.4" stroke-linecap="round" stroke-linejoin="round"/></svg>
</div></div>
<div class="abs" style="left:617px;top:186px;width:2px;height:1143px;background:#fafafa"></div>
<div id="status">
<span style="position:absolute;left:3.60px;top:0.81px;font:19.3px/25px 'Liberation Sans',sans-serif;color:#0a2a0a;white-space:pre;letter-spacing:0.590px;">Time 1 s</span>
<span style="position:absolute;left:3.60px;top:24.81px;font:19.3px/25px 'Liberation Sans',sans-serif;color:#0a2a0a;white-space:pre;letter-spacing:0.725px;">Solver exited</span>
</div>
<!-- viewport -->
<div id="viewport"><div id="vpinner">
<svg style="position:absolute;left:0;top:0" width="2391" height="1435" viewBox="0 0 2391 1435" shape-rendering="geometricPrecision"><defs><clipPath id="cbt"><polygon points="681.0,1007.7 705.0,992.0 927.0,1061.0 1398.0,835.0 1470.0,826.0 1470.0,1050.6 915.0,1115.4 794.0,1008.0"/></clipPath><clipPath id="ctt"><polygon points="681.0,920.0 708.0,915.7 1214.0,667.0 1251.0,684.0 1470.0,756.5 933.0,1020.2 693.5,925.0"/></clipPath></defs><polygon points="681.5,1005.3 708.8,991.2 927.0,1061.0 1398.0,835.0 1470.0,826.0 1470.0,1094.0 908.0,1159.0 675.6,1048.2" fill="#0000ff" stroke="#0000ff" stroke-width="1.60" stroke-linejoin="round" /><g clip-path="url(#cbt)"><path d="M658.0 1020.5L1358.0 774.0M676.0 1031.0L1376.0 788.0M694.0 1041.5L1394.0 802.0M712.0 1052.0L1412.0 816.0M730.0 1062.5L1430.0 830.0M748.0 1073.0L1448.0 844.0M766.0 1083.5L1466.0 858.0M784.0 1094.0L1484.0 872.0M802.0 1104.5L1502.0 886.0M820.0 1115.0L1520.0 900.0M838.0 1125.5L1538.0 914.0M856.0 1136.0L1556.0 928.0M874.0 1146.5L1574.0 942.0M892.0 1157.0L1592.0 956.0M910.0 1167.5L1610.0 970.0M928.0 1178.0L1628.0 984.0M946.0 1188.5L1646.0 998.0M964.0 1199.0L1664.0 1012.0M982.0 1209.5L1682.0 1026.0" stroke="#00008c" stroke-width="1.2" fill="none" stroke-dasharray="7 2"/><path d="M650.9 1006.1L1010.9 1217.2M661.9 1002.2L1021.9 1214.4M672.8 998.3L1032.8 1211.6M683.8 994.4L1043.8 1208.8M694.7 990.5L1054.7 1205.9M705.6 986.6L1065.6 1203.1M716.6 982.7L1076.6 1200.3M727.5 978.8L1087.5 1197.5M738.4 974.8L1098.4 1194.7M749.4 970.9L1109.4 1191.9M760.3 967.0L1120.3 1189.1M771.2 963.1L1131.2 1186.2M782.2 959.2L1142.2 1183.4M793.1 955.3L1153.1 1180.6M804.1 951.4L1164.1 1177.8M815.0 947.5L1175.0 1175.0M825.9 943.6L1185.9 1172.2M836.9 939.7L1196.9 1169.4M847.8 935.8L1207.8 1166.6M858.8 931.9L1218.8 1163.8M869.7 928.0L1229.7 1160.9M880.6 924.1L1240.6 1158.1M891.6 920.2L1251.6 1155.3M902.5 916.2L1262.5 1152.5M913.4 912.3L1273.4 1149.7M924.4 908.4L1284.4 1146.9M935.3 904.5L1295.3 1144.1M946.2 900.6L1306.2 1141.2M957.2 896.7L1317.2 1138.4M968.1 892.8L1328.1 1135.6M979.1 888.9L1339.1 1132.8M990.0 885.0L1350.0 1130.0M1000.9 881.1L1360.9 1127.2M1011.9 877.2L1371.9 1124.4M1022.8 873.3L1382.8 1121.6M1033.8 869.4L1393.8 1118.8M1044.7 865.5L1404.7 1115.9M1055.6 861.6L1415.6 1113.1M1066.6 857.7L1426.6 1110.3M1077.5 853.8L1437.5 1107.5M1088.4 849.8L1448.4 1104.7M1099.4 845.9L1459.4 1101.9M1110.3 842.0L1470.3 1099.1M1121.2 838.1L1481.2 1096.2M1132.2 834.2L1492.2 1093.4M1143.1 830.3L1503.1 1090.6M1154.1 826.4L1514.1 1087.8M1165.0 822.5L1525.0 1085.0M1175.9 818.6L1535.9 1082.2M1186.9 814.7L1546.9 1079.4M1197.8 810.8L1557.8 1076.6M1208.8 806.9L1568.8 1073.8M1219.7 803.0L1579.7 1070.9M1230.6 799.1L1590.6 1068.1M1241.6 795.2L1601.6 1065.3M1252.5 791.2L1612.5 1062.5M1263.4 787.3L1623.4 1059.7M1274.4 783.4L1634.4 1056.9M1285.3 779.5L1645.3 1054.1M1296.2 775.6L1656.2 1051.2M1307.2 771.7L1667.2 1048.4M1318.1 767.8L1678.1 1045.6M1329.1 763.9L1689.1 1042.8" stroke="#0000b0" stroke-width="1.5" fill="none" stroke-dasharray="7 2"/><path d="M638.6 1008.9h2.8v2.3h-2.8zM682.4 993.2h2.8v2.3h-2.8zM726.1 977.6h2.8v2.3h-2.8zM769.9 962.0h2.8v2.3h-2.8zM813.6 946.4h2.8v2.3h-2.8zM857.4 930.7h2.8v2.3h-2.8zM901.1 915.1h2.8v2.3h-2.8zM944.9 899.5h2.8v2.3h-2.8zM988.6 883.9h2.8v2.3h-2.8zM1032.3 868.2h2.8v2.3h-2.8zM1076.1 852.6h2.8v2.3h-2.8zM1119.8 837.0h2.8v2.3h-2.8zM1163.6 821.4h2.8v2.3h-2.8zM1207.3 805.7h2.8v2.3h-2.8zM1251.1 790.1h2.8v2.3h-2.8zM1294.8 774.5h2.8v2.3h-2.8zM1338.6 758.9h2.8v2.3h-2.8zM678.5 1011.6h2.8v2.3h-2.8zM722.2 996.2h2.8v2.3h-2.8zM766.0 980.8h2.8v2.3h-2.8zM809.7 965.4h2.8v2.3h-2.8zM853.5 950.0h2.8v2.3h-2.8zM897.2 934.6h2.8v2.3h-2.8zM941.0 919.2h2.8v2.3h-2.8zM984.7 903.8h2.8v2.3h-2.8zM1028.5 888.4h2.8v2.3h-2.8zM1072.2 873.0h2.8v2.3h-2.8zM1116.0 857.6h2.8v2.3h-2.8zM1159.7 842.2h2.8v2.3h-2.8zM1203.5 826.8h2.8v2.3h-2.8zM1247.2 811.4h2.8v2.3h-2.8zM1291.0 796.0h2.8v2.3h-2.8zM1334.7 780.6h2.8v2.3h-2.8zM674.6 1029.8h2.8v2.3h-2.8zM718.4 1014.7h2.8v2.3h-2.8zM762.1 999.5h2.8v2.3h-2.8zM805.9 984.3h2.8v2.3h-2.8zM849.6 969.1h2.8v2.3h-2.8zM893.4 953.9h2.8v2.3h-2.8zM937.1 938.7h2.8v2.3h-2.8zM980.9 923.5h2.8v2.3h-2.8zM1024.6 908.4h2.8v2.3h-2.8zM1068.3 893.2h2.8v2.3h-2.8zM1112.1 878.0h2.8v2.3h-2.8zM1155.8 862.8h2.8v2.3h-2.8zM1199.6 847.6h2.8v2.3h-2.8zM1243.3 832.4h2.8v2.3h-2.8zM1287.1 817.2h2.8v2.3h-2.8zM1330.8 802.0h2.8v2.3h-2.8zM1374.6 786.9h2.8v2.3h-2.8zM714.5 1032.9h2.8v2.3h-2.8zM758.2 1017.9h2.8v2.3h-2.8zM802.0 1002.9h2.8v2.3h-2.8zM845.7 988.0h2.8v2.3h-2.8zM889.5 973.0h2.8v2.3h-2.8zM933.2 958.0h2.8v2.3h-2.8zM977.0 943.1h2.8v2.3h-2.8zM1020.7 928.1h2.8v2.3h-2.8zM1064.5 913.1h2.8v2.3h-2.8zM1108.2 898.1h2.8v2.3h-2.8zM1152.0 883.2h2.8v2.3h-2.8zM1195.7 868.2h2.8v2.3h-2.8zM1239.5 853.2h2.8v2.3h-2.8zM1283.2 838.3h2.8v2.3h-2.8zM1327.0 823.3h2.8v2.3h-2.8zM1370.7 808.3h2.8v2.3h-2.8zM710.6 1050.8h2.8v2.3h-2.8zM754.4 1036.1h2.8v2.3h-2.8zM798.1 1021.4h2.8v2.3h-2.8zM841.9 1006.6h2.8v2.3h-2.8zM885.6 991.9h2.8v2.3h-2.8zM929.4 977.1h2.8v2.3h-2.8zM973.1 962.4h2.8v2.3h-2.8zM1016.9 947.6h2.8v2.3h-2.8zM1060.6 932.9h2.8v2.3h-2.8zM1104.3 918.1h2.8v2.3h-2.8zM1148.1 903.4h2.8v2.3h-2.8zM1191.8 888.6h2.8v2.3h-2.8zM1235.6 873.9h2.8v2.3h-2.8zM1279.3 859.1h2.8v2.3h-2.8zM1323.1 844.4h2.8v2.3h-2.8zM1366.8 829.6h2.8v2.3h-2.8zM1410.6 814.9h2.8v2.3h-2.8zM750.5 1054.1h2.8v2.3h-2.8zM794.2 1039.6h2.8v2.3h-2.8zM838.0 1025.0h2.8v2.3h-2.8zM881.7 1010.5h2.8v2.3h-2.8zM925.5 996.0h2.8v2.3h-2.8zM969.2 981.4h2.8v2.3h-2.8zM1013.0 966.9h2.8v2.3h-2.8zM1056.7 952.4h2.8v2.3h-2.8zM1100.5 937.8h2.8v2.3h-2.8zM1144.2 923.3h2.8v2.3h-2.8zM1188.0 908.8h2.8v2.3h-2.8zM1231.7 894.2h2.8v2.3h-2.8zM1275.5 879.7h2.8v2.3h-2.8zM1319.2 865.2h2.8v2.3h-2.8zM1363.0 850.6h2.8v2.3h-2.8zM1406.7 836.1h2.8v2.3h-2.8zM746.6 1071.8h2.8v2.3h-2.8zM790.4 1057.5h2.8v2.3h-2.8zM834.1 1043.2h2.8v2.3h-2.8zM877.9 1028.9h2.8v2.3h-2.8zM921.6 1014.6h2.8v2.3h-2.8zM965.4 1000.3h2.8v2.3h-2.8zM1009.1 986.0h2.8v2.3h-2.8zM1052.8 971.7h2.8v2.3h-2.8zM1096.6 957.4h2.8v2.3h-2.8zM1140.3 943.0h2.8v2.3h-2.8zM1184.1 928.7h2.8v2.3h-2.8zM1227.8 914.4h2.8v2.3h-2.8zM1271.6 900.1h2.8v2.3h-2.8zM1315.3 885.8h2.8v2.3h-2.8zM1359.1 871.5h2.8v2.3h-2.8zM1402.8 857.2h2.8v2.3h-2.8zM1446.6 842.9h2.8v2.3h-2.8zM786.5 1075.3h2.8v2.3h-2.8zM830.2 1061.2h2.8v2.3h-2.8zM874.0 1047.1h2.8v2.3h-2.8zM917.7 1033.0h2.8v2.3h-2.8zM961.5 1018.9h2.8v2.3h-2.8zM1005.2 1004.8h2.8v2.3h-2.8zM1049.0 990.7h2.8v2.3h-2.8zM1092.7 976.6h2.8v2.3h-2.8zM1136.5 962.6h2.8v2.3h-2.8zM1180.2 948.5h2.8v2.3h-2.8zM1224.0 934.4h2.8v2.3h-2.8zM1267.7 920.3h2.8v2.3h-2.8zM1311.5 906.2h2.8v2.3h-2.8zM1355.2 892.1h2.8v2.3h-2.8zM1399.0 878.0h2.8v2.3h-2.8zM1442.7 863.9h2.8v2.3h-2.8zM782.6 1092.8h2.8v2.3h-2.8zM826.4 1079.0h2.8v2.3h-2.8zM870.1 1065.1h2.8v2.3h-2.8zM913.9 1051.2h2.8v2.3h-2.8zM957.6 1037.3h2.8v2.3h-2.8zM1001.4 1023.5h2.8v2.3h-2.8zM1045.1 1009.6h2.8v2.3h-2.8zM1088.8 995.7h2.8v2.3h-2.8zM1132.6 981.9h2.8v2.3h-2.8zM1176.3 968.0h2.8v2.3h-2.8zM1220.1 954.1h2.8v2.3h-2.8zM1263.8 940.2h2.8v2.3h-2.8zM1307.6 926.4h2.8v2.3h-2.8zM1351.3 912.5h2.8v2.3h-2.8zM1395.1 898.6h2.8v2.3h-2.8zM1438.8 884.7h2.8v2.3h-2.8zM1482.6 870.9h2.8v2.3h-2.8zM822.5 1096.5h2.8v2.3h-2.8zM866.2 1082.9h2.8v2.3h-2.8zM910.0 1069.2h2.8v2.3h-2.8zM953.7 1055.6h2.8v2.3h-2.8zM997.5 1041.9h2.8v2.3h-2.8zM1041.2 1028.2h2.8v2.3h-2.8zM1085.0 1014.6h2.8v2.3h-2.8zM1128.7 1000.9h2.8v2.3h-2.8zM1172.5 987.3h2.8v2.3h-2.8zM1216.2 973.6h2.8v2.3h-2.8zM1260.0 960.0h2.8v2.3h-2.8zM1303.7 946.3h2.8v2.3h-2.8zM1347.5 932.6h2.8v2.3h-2.8zM1391.2 919.0h2.8v2.3h-2.8zM1435.0 905.3h2.8v2.3h-2.8zM1478.7 891.7h2.8v2.3h-2.8zM818.6 1113.8h2.8v2.3h-2.8zM862.4 1100.4h2.8v2.3h-2.8zM906.1 1087.0h2.8v2.3h-2.8zM949.9 1073.5h2.8v2.3h-2.8zM993.6 1060.1h2.8v2.3h-2.8zM1037.3 1046.7h2.8v2.3h-2.8zM1081.1 1033.2h2.8v2.3h-2.8zM1124.8 1019.8h2.8v2.3h-2.8zM1168.6 1006.4h2.8v2.3h-2.8zM1212.3 992.9h2.8v2.3h-2.8zM1256.1 979.5h2.8v2.3h-2.8zM1299.8 966.0h2.8v2.3h-2.8zM1343.6 952.6h2.8v2.3h-2.8zM1387.3 939.2h2.8v2.3h-2.8zM1431.1 925.7h2.8v2.3h-2.8zM1474.8 912.3h2.8v2.3h-2.8zM1518.6 898.9h2.8v2.3h-2.8zM858.5 1117.7h2.8v2.3h-2.8zM902.2 1104.5h2.8v2.3h-2.8zM946.0 1091.3h2.8v2.3h-2.8zM989.7 1078.1h2.8v2.3h-2.8zM1033.5 1064.9h2.8v2.3h-2.8zM1077.2 1051.6h2.8v2.3h-2.8zM1121.0 1038.4h2.8v2.3h-2.8zM1164.7 1025.2h2.8v2.3h-2.8zM1208.5 1012.0h2.8v2.3h-2.8zM1252.2 998.8h2.8v2.3h-2.8zM1296.0 985.6h2.8v2.3h-2.8zM1339.7 972.3h2.8v2.3h-2.8zM1383.5 959.1h2.8v2.3h-2.8zM1427.2 945.9h2.8v2.3h-2.8zM1471.0 932.7h2.8v2.3h-2.8zM1514.7 919.5h2.8v2.3h-2.8zM854.6 1134.8h2.8v2.3h-2.8zM898.4 1121.8h2.8v2.3h-2.8zM942.1 1108.8h2.8v2.3h-2.8zM985.9 1095.8h2.8v2.3h-2.8zM1029.6 1082.8h2.8v2.3h-2.8zM1073.3 1069.8h2.8v2.3h-2.8zM1117.1 1056.8h2.8v2.3h-2.8zM1160.8 1043.8h2.8v2.3h-2.8zM1204.6 1030.8h2.8v2.3h-2.8zM1248.3 1017.9h2.8v2.3h-2.8zM1292.1 1004.9h2.8v2.3h-2.8zM1335.8 991.9h2.8v2.3h-2.8zM1379.6 978.9h2.8v2.3h-2.8zM1423.3 965.9h2.8v2.3h-2.8zM1467.1 952.9h2.8v2.3h-2.8zM1510.8 939.9h2.8v2.3h-2.8zM1554.6 926.9h2.8v2.3h-2.8zM894.5 1139.0h2.8v2.3h-2.8zM938.2 1126.2h2.8v2.3h-2.8zM982.0 1113.4h2.8v2.3h-2.8zM1025.7 1100.6h2.8v2.3h-2.8zM1069.5 1087.8h2.8v2.3h-2.8zM1113.2 1075.1h2.8v2.3h-2.8zM1157.0 1062.3h2.8v2.3h-2.8zM1200.7 1049.5h2.8v2.3h-2.8zM1244.5 1036.7h2.8v2.3h-2.8zM1288.2 1023.9h2.8v2.3h-2.8zM1332.0 1011.1h2.8v2.3h-2.8zM1375.7 998.4h2.8v2.3h-2.8zM1419.5 985.6h2.8v2.3h-2.8zM1463.2 972.8h2.8v2.3h-2.8zM1507.0 960.0h2.8v2.3h-2.8zM1550.7 947.2h2.8v2.3h-2.8zM890.6 1155.8h2.8v2.3h-2.8zM934.4 1143.3h2.8v2.3h-2.8zM978.1 1130.7h2.8v2.3h-2.8zM1021.9 1118.2h2.8v2.3h-2.8zM1065.6 1105.6h2.8v2.3h-2.8zM1109.3 1093.0h2.8v2.3h-2.8zM1153.1 1080.5h2.8v2.3h-2.8zM1196.8 1067.9h2.8v2.3h-2.8zM1240.6 1055.3h2.8v2.3h-2.8zM1284.3 1042.8h2.8v2.3h-2.8zM1328.1 1030.2h2.8v2.3h-2.8zM1371.8 1017.7h2.8v2.3h-2.8zM1415.6 1005.1h2.8v2.3h-2.8zM1459.3 992.5h2.8v2.3h-2.8zM1503.1 980.0h2.8v2.3h-2.8zM1546.8 967.4h2.8v2.3h-2.8zM1590.6 954.9h2.8v2.3h-2.8zM930.5 1160.2h2.8v2.3h-2.8zM974.2 1147.8h2.8v2.3h-2.8zM1018.0 1135.5h2.8v2.3h-2.8zM1061.7 1123.1h2.8v2.3h-2.8zM1105.5 1110.8h2.8v2.3h-2.8zM1149.2 1098.5h2.8v2.3h-2.8zM1193.0 1086.1h2.8v2.3h-2.8zM1236.7 1073.8h2.8v2.3h-2.8zM1280.5 1061.4h2.8v2.3h-2.8zM1324.2 1049.1h2.8v2.3h-2.8zM1368.0 1036.7h2.8v2.3h-2.8zM1411.7 1024.4h2.8v2.3h-2.8zM1455.5 1012.1h2.8v2.3h-2.8zM1499.2 999.7h2.8v2.3h-2.8zM1543.0 987.4h2.8v2.3h-2.8zM1586.7 975.0h2.8v2.3h-2.8zM926.6 1176.8h2.8v2.3h-2.8zM970.4 1164.7h2.8v2.3h-2.8zM1014.1 1152.6h2.8v2.3h-2.8zM1057.8 1140.5h2.8v2.3h-2.8zM1101.6 1128.3h2.8v2.3h-2.8zM1145.3 1116.2h2.8v2.3h-2.8zM1189.1 1104.1h2.8v2.3h-2.8zM1232.8 1092.0h2.8v2.3h-2.8zM1276.6 1079.8h2.8v2.3h-2.8zM1320.3 1067.7h2.8v2.3h-2.8zM1364.1 1055.6h2.8v2.3h-2.8zM1407.8 1043.5h2.8v2.3h-2.8zM1451.6 1031.3h2.8v2.3h-2.8zM1495.3 1019.2h2.8v2.3h-2.8zM1539.1 1007.1h2.8v2.3h-2.8zM1582.8 995.0h2.8v2.3h-2.8zM1626.6 982.9h2.8v2.3h-2.8zM966.5 1181.4h2.8v2.3h-2.8zM1010.2 1169.5h2.8v2.3h-2.8zM1054.0 1157.6h2.8v2.3h-2.8zM1097.7 1145.7h2.8v2.3h-2.8zM1141.5 1133.8h2.8v2.3h-2.8zM1185.2 1121.9h2.8v2.3h-2.8zM1229.0 1110.0h2.8v2.3h-2.8zM1272.7 1098.1h2.8v2.3h-2.8zM1316.5 1086.1h2.8v2.3h-2.8zM1360.2 1074.2h2.8v2.3h-2.8zM1404.0 1062.3h2.8v2.3h-2.8zM1447.7 1050.4h2.8v2.3h-2.8zM1491.5 1038.5h2.8v2.3h-2.8zM1535.2 1026.6h2.8v2.3h-2.8zM1579.0 1014.7h2.8v2.3h-2.8zM1622.7 1002.8h2.8v2.3h-2.8zM962.6 1197.8h2.8v2.3h-2.8zM1006.4 1186.2h2.8v2.3h-2.8zM1050.1 1174.5h2.8v2.3h-2.8zM1093.8 1162.8h2.8v2.3h-2.8zM1137.6 1151.1h2.8v2.3h-2.8zM1181.3 1139.4h2.8v2.3h-2.8zM1225.1 1127.7h2.8v2.3h-2.8zM1268.8 1116.0h2.8v2.3h-2.8zM1312.6 1104.3h2.8v2.3h-2.8zM1356.3 1092.7h2.8v2.3h-2.8zM1400.1 1081.0h2.8v2.3h-2.8zM1443.8 1069.3h2.8v2.3h-2.8zM1487.6 1057.6h2.8v2.3h-2.8zM1531.3 1045.9h2.8v2.3h-2.8zM1575.1 1034.2h2.8v2.3h-2.8zM1618.8 1022.5h2.8v2.3h-2.8zM1662.6 1010.9h2.8v2.3h-2.8zM1002.5 1202.6h2.8v2.3h-2.8zM1046.2 1191.1h2.8v2.3h-2.8zM1090.0 1179.7h2.8v2.3h-2.8zM1133.7 1168.2h2.8v2.3h-2.8zM1177.5 1156.7h2.8v2.3h-2.8zM1221.2 1145.3h2.8v2.3h-2.8zM1265.0 1133.8h2.8v2.3h-2.8zM1308.7 1122.3h2.8v2.3h-2.8zM1352.5 1110.9h2.8v2.3h-2.8zM1396.2 1099.4h2.8v2.3h-2.8zM1440.0 1087.9h2.8v2.3h-2.8zM1483.7 1076.5h2.8v2.3h-2.8zM1527.5 1065.0h2.8v2.3h-2.8zM1571.2 1053.5h2.8v2.3h-2.8zM1615.0 1042.1h2.8v2.3h-2.8zM1658.7 1030.6h2.8v2.3h-2.8zM998.6 1218.8h2.8v2.3h-2.8zM1042.3 1207.6h2.8v2.3h-2.8zM1086.1 1196.3h2.8v2.3h-2.8zM1129.8 1185.1h2.8v2.3h-2.8zM1173.6 1173.8h2.8v2.3h-2.8zM1217.3 1162.6h2.8v2.3h-2.8zM1261.1 1151.3h2.8v2.3h-2.8zM1304.8 1140.1h2.8v2.3h-2.8zM1348.6 1128.8h2.8v2.3h-2.8zM1392.3 1117.6h2.8v2.3h-2.8zM1436.1 1106.3h2.8v2.3h-2.8zM1479.8 1095.1h2.8v2.3h-2.8zM1523.6 1083.8h2.8v2.3h-2.8zM1567.3 1072.6h2.8v2.3h-2.8zM1611.1 1061.3h2.8v2.3h-2.8zM1654.8 1050.1h2.8v2.3h-2.8zM1698.6 1038.8h2.8v2.3h-2.8z" fill="#f8304e"/></g><ellipse cx="1316.5" cy="909.6" rx="35" ry="15.6" fill="#0000ff" stroke="#06383a" stroke-width="3.6" stroke-dasharray="4 1.5"/><polyline points="1302.0,896.0 1299.0,922.0" fill="none" stroke="#06383a" stroke-width="4.72" stroke-linejoin="round" stroke-linecap="round" /><polyline points="1290.0,898.0 1287.0,918.0" fill="none" stroke="#06383a" stroke-width="3.54" stroke-linejoin="round" stroke-linecap="round" /><path d="M1281 909.6 a35.5 16 0 0 1 71 0" fill="none" stroke="#ff2a4a" stroke-width="2.4" stroke-dasharray="2.4 5.6"/><polyline points="1398.0,835.0 1470.0,826.0" fill="none" stroke="#06383a" stroke-width="4.72" stroke-linejoin="round" stroke-linecap="round" /><polygon points="914.5,1115.5 1470.0,1050.6 1470.0,1094.0 908.0,1159.0" fill="#0000ff" stroke="#06383a" stroke-width="5.19" stroke-linejoin="round" /><path d="M928.4 1113.9L922.0 1157.4M942.3 1112.3L936.1 1155.8M956.2 1110.6L950.1 1154.1M970.0 1109.0L964.2 1152.5M983.9 1107.4L978.2 1150.9M997.8 1105.8L992.3 1149.2M1011.7 1104.1L1006.4 1147.6M1025.6 1102.5L1020.4 1146.0M1039.5 1100.9L1034.5 1144.4M1053.4 1099.3L1048.5 1142.8M1067.3 1097.7L1062.5 1141.1M1081.2 1096.0L1076.6 1139.5M1095.0 1094.4L1090.7 1137.9M1108.9 1092.8L1104.7 1136.2M1122.8 1091.2L1118.8 1134.6M1136.7 1089.5L1132.8 1133.0M1150.6 1087.9L1146.8 1131.4M1164.5 1086.3L1160.9 1129.8M1178.4 1084.7L1175.0 1128.1M1192.2 1083.0L1189.0 1126.5M1206.1 1081.4L1203.0 1124.9M1220.0 1079.8L1217.1 1123.2M1233.9 1078.2L1231.2 1121.6M1247.8 1076.6L1245.2 1120.0M1261.7 1074.9L1259.2 1118.4M1275.6 1073.3L1273.3 1116.8M1289.5 1071.7L1287.3 1115.1M1303.3 1070.1L1301.4 1113.5M1317.2 1068.4L1315.5 1111.9M1331.1 1066.8L1329.5 1110.2M1345.0 1065.2L1343.5 1108.6M1358.9 1063.6L1357.6 1107.0M1372.8 1062.0L1371.7 1105.4M1386.7 1060.3L1385.7 1103.8M1400.6 1058.7L1399.8 1102.1M1414.5 1057.1L1413.8 1100.5M1428.3 1055.5L1427.8 1098.9M1442.2 1053.8L1441.9 1097.2M1456.1 1052.2L1455.9 1095.6" stroke="#0000a0" stroke-width="1.5" fill="none" stroke-dasharray="6 2"/><path d="M913.1 1114.3h2.8v2.3h-2.8zM906.6 1157.8h2.8v2.3h-2.8zM940.9 1111.1h2.8v2.3h-2.8zM934.7 1154.6h2.8v2.3h-2.8zM968.6 1107.9h2.8v2.3h-2.8zM962.8 1151.3h2.8v2.3h-2.8zM996.4 1104.6h2.8v2.3h-2.8zM990.9 1148.1h2.8v2.3h-2.8zM1024.2 1101.4h2.8v2.3h-2.8zM1019.0 1144.8h2.8v2.3h-2.8zM1052.0 1098.1h2.8v2.3h-2.8zM1047.1 1141.6h2.8v2.3h-2.8zM1079.8 1094.9h2.8v2.3h-2.8zM1075.2 1138.3h2.8v2.3h-2.8zM1107.5 1091.6h2.8v2.3h-2.8zM1103.3 1135.1h2.8v2.3h-2.8zM1135.3 1088.4h2.8v2.3h-2.8zM1131.4 1131.8h2.8v2.3h-2.8zM1163.1 1085.1h2.8v2.3h-2.8zM1159.5 1128.6h2.8v2.3h-2.8zM1190.8 1081.9h2.8v2.3h-2.8zM1187.6 1125.3h2.8v2.3h-2.8zM1218.6 1078.7h2.8v2.3h-2.8zM1215.7 1122.1h2.8v2.3h-2.8zM1246.4 1075.4h2.8v2.3h-2.8zM1243.8 1118.8h2.8v2.3h-2.8zM1274.2 1072.2h2.8v2.3h-2.8zM1271.9 1115.6h2.8v2.3h-2.8zM1301.9 1068.9h2.8v2.3h-2.8zM1300.0 1112.3h2.8v2.3h-2.8zM1329.7 1065.7h2.8v2.3h-2.8zM1328.1 1109.1h2.8v2.3h-2.8zM1357.5 1062.4h2.8v2.3h-2.8zM1356.2 1105.8h2.8v2.3h-2.8zM1385.3 1059.2h2.8v2.3h-2.8zM1384.3 1102.6h2.8v2.3h-2.8zM1413.0 1055.9h2.8v2.3h-2.8zM1412.4 1099.3h2.8v2.3h-2.8zM1440.8 1052.7h2.8v2.3h-2.8zM1440.5 1096.1h2.8v2.3h-2.8zM1468.6 1049.4h2.8v2.3h-2.8zM1468.6 1092.8h2.8v2.3h-2.8z" fill="#f8304e"/><polygon points="681.5,1007.0 759.5,1038.5 908.0,1159.0 675.6,1048.2" fill="#0000ff" stroke="#06383a" stroke-width="5.19" stroke-linejoin="round" /><polygon points="794.6,1015.0 914.5,1115.5 908.0,1159.0 759.5,1038.5" fill="#0000ff" stroke="#0000ff" stroke-width="1.60" stroke-linejoin="round" /><path d="M809.6 1027.6L778.1 1053.6M824.6 1040.1L796.6 1068.6M839.6 1052.7L815.2 1083.7M854.5 1065.2L833.8 1098.8M869.5 1077.8L852.3 1113.8M884.5 1090.4L870.9 1128.9M899.5 1102.9L889.4 1143.9" stroke="#00127a" stroke-width="1.1" fill="none" stroke-dasharray="5 2"/><path d="M793.2 1013.9h2.8v2.3h-2.8zM758.1 1037.3h2.8v2.3h-2.8zM808.2 1026.4h2.8v2.3h-2.8zM776.7 1052.4h2.8v2.3h-2.8zM823.2 1039.0h2.8v2.3h-2.8zM795.2 1067.5h2.8v2.3h-2.8zM838.2 1051.5h2.8v2.3h-2.8zM813.8 1082.5h2.8v2.3h-2.8zM853.1 1064.1h2.8v2.3h-2.8zM832.4 1097.6h2.8v2.3h-2.8zM868.1 1076.7h2.8v2.3h-2.8zM850.9 1112.7h2.8v2.3h-2.8zM883.1 1089.2h2.8v2.3h-2.8zM869.5 1127.7h2.8v2.3h-2.8zM898.1 1101.8h2.8v2.3h-2.8zM888.0 1142.8h2.8v2.3h-2.8zM913.1 1114.3h2.8v2.3h-2.8zM906.6 1157.8h2.8v2.3h-2.8z" fill="#f8304e"/><polyline points="703.8,1016.0 698.8,1059.3" fill="none" stroke="#00127a" stroke-width="1.20" stroke-linejoin="round" stroke-linecap="round" stroke-dasharray="5 2"/><rect x="702.5" y="1014.8" width="2.6" height="2.4" fill="#f8304e"/><rect x="697.5" y="1058.1" width="2.6" height="2.4" fill="#f8304e"/><polyline points="726.1,1025.0 722.1,1070.4" fill="none" stroke="#00127a" stroke-width="1.20" stroke-linejoin="round" stroke-linecap="round" stroke-dasharray="5 2"/><rect x="724.8" y="1023.8" width="2.6" height="2.4" fill="#f8304e"/><rect x="720.8" y="1069.2" width="2.6" height="2.4" fill="#f8304e"/><polyline points="748.4,1034.0 745.3,1081.4" fill="none" stroke="#00127a" stroke-width="1.20" stroke-linejoin="round" stroke-linecap="round" stroke-dasharray="5 2"/><rect x="747.1" y="1032.8" width="2.6" height="2.4" fill="#f8304e"/><rect x="744.0" y="1080.2" width="2.6" height="2.4" fill="#f8304e"/><polyline points="770.9,1047.8 768.6,1092.5" fill="none" stroke="#00127a" stroke-width="1.20" stroke-linejoin="round" stroke-linecap="round" stroke-dasharray="5 2"/><rect x="769.6" y="1046.6" width="2.6" height="2.4" fill="#f8304e"/><rect x="767.3" y="1091.3" width="2.6" height="2.4" fill="#f8304e"/><polyline points="793.8,1066.3 791.8,1103.6" fill="none" stroke="#00127a" stroke-width="1.20" stroke-linejoin="round" stroke-linecap="round" stroke-dasharray="5 2"/><rect x="792.5" y="1065.1" width="2.6" height="2.4" fill="#f8304e"/><rect x="790.5" y="1102.4" width="2.6" height="2.4" fill="#f8304e"/><polyline points="816.6,1084.8 815.0,1114.7" fill="none" stroke="#00127a" stroke-width="1.20" stroke-linejoin="round" stroke-linecap="round" stroke-dasharray="5 2"/><rect x="815.3" y="1083.6" width="2.6" height="2.4" fill="#f8304e"/><rect x="813.7" y="1113.5" width="2.6" height="2.4" fill="#f8304e"/><polyline points="839.5,1103.4 838.3,1125.8" fill="none" stroke="#00127a" stroke-width="1.20" stroke-linejoin="round" stroke-linecap="round" stroke-dasharray="5 2"/><rect x="838.2" y="1102.2" width="2.6" height="2.4" fill="#f8304e"/><rect x="837.0" y="1124.6" width="2.6" height="2.4" fill="#f8304e"/><polyline points="862.3,1121.9 861.5,1136.8" fill="none" stroke="#00127a" stroke-width="1.20" stroke-linejoin="round" stroke-linecap="round" stroke-dasharray="5 2"/><rect x="861.0" y="1120.7" width="2.6" height="2.4" fill="#f8304e"/><rect x="860.2" y="1135.6" width="2.6" height="2.4" fill="#f8304e"/><polyline points="885.2,1140.5 884.8,1147.9" fill="none" stroke="#00127a" stroke-width="1.20" stroke-linejoin="round" stroke-linecap="round" stroke-dasharray="5 2"/><rect x="883.9" y="1139.3" width="2.6" height="2.4" fill="#f8304e"/><rect x="883.5" y="1146.7" width="2.6" height="2.4" fill="#f8304e"/><polyline points="681.5,1007.0 759.5,1038.5 908.0,1159.0" fill="none" stroke="#06383a" stroke-width="5.43" stroke-linejoin="round" stroke-linecap="round" /><polyline points="794.6,1015.0 914.5,1115.5 908.0,1159.0" fill="none" stroke="#06383a" stroke-width="5.66" stroke-linejoin="round" stroke-linecap="round" /><polyline points="681.5,1005.3 708.8,991.2" fill="none" stroke="#06383a" stroke-width="5.19" stroke-linejoin="round" stroke-linecap="round" /><polyline points="914.5,1115.5 1470.0,1050.6" fill="none" stroke="#06383a" stroke-width="5.90" stroke-linejoin="round" stroke-linecap="round" /><path d="M791.5 945 L770 1090 M738 1035 L787 1010 L797 1004 M712 990 L790 1013" stroke="#00003a" stroke-width="1" fill="none"/><polygon points="672.5,962.7 688.0,965.0 927.0,1061.0 708.8,991.2" fill="#0000ff" stroke="#0000ff" stroke-width="1.60" stroke-linejoin="round" /><polyline points="672.5,961.5 708.8,991.2" fill="none" stroke="#06383a" stroke-width="5.19" stroke-linejoin="round" stroke-linecap="round" /><polygon points="933.0,1020.2 1470.0,756.5 1470.0,800.0 926.6,1061.0" fill="#0000ff" stroke="#06383a" stroke-width="3.07" stroke-linejoin="round" /><path d="M941.4 1016.1L935.1 1056.9M949.8 1012.0L943.6 1052.8M958.2 1007.8L952.1 1048.7M966.6 1003.7L960.6 1044.6M975.0 999.6L969.1 1040.5M983.3 995.5L977.5 1036.3M991.7 991.4L986.0 1032.2M1000.1 987.2L994.5 1028.1M1008.5 983.1L1003.0 1024.0M1016.9 979.0L1011.5 1019.9M1025.3 974.9L1020.0 1015.8M1033.7 970.8L1028.5 1011.7M1042.1 966.6L1037.0 1007.6M1050.5 962.5L1045.5 1003.5M1058.9 958.4L1054.0 999.4M1067.2 954.3L1062.5 995.2M1075.6 950.2L1070.9 991.1M1084.0 946.0L1079.4 987.0M1092.4 941.9L1087.9 982.9M1100.8 937.8L1096.4 978.8M1109.2 933.7L1104.9 974.7M1117.6 929.6L1113.4 970.6M1126.0 925.4L1121.9 966.5M1134.4 921.3L1130.4 962.4M1142.8 917.2L1138.9 958.3M1151.2 913.1L1147.4 954.2M1159.5 909.0L1155.8 950.0M1167.9 904.8L1164.3 945.9M1176.3 900.7L1172.8 941.8M1184.7 896.6L1181.3 937.7M1193.1 892.5L1189.8 933.6M1201.5 888.4L1198.3 929.5M1209.9 884.2L1206.8 925.4M1218.3 880.1L1215.3 921.3M1226.7 876.0L1223.8 917.2M1235.1 871.9L1232.3 913.1M1243.5 867.7L1240.8 909.0M1251.8 863.6L1249.2 904.8M1260.2 859.5L1257.7 900.7M1268.6 855.4L1266.2 896.6M1277.0 851.3L1274.7 892.5M1285.4 847.1L1283.2 888.4M1293.8 843.0L1291.7 884.3M1302.2 838.9L1300.2 880.2M1310.6 834.8L1308.7 876.1M1319.0 830.7L1317.2 872.0M1327.4 826.5L1325.7 867.9M1335.8 822.4L1334.2 863.8M1344.1 818.3L1342.6 859.6M1352.5 814.2L1351.1 855.5M1360.9 810.1L1359.6 851.4M1369.3 805.9L1368.1 847.3M1377.7 801.8L1376.6 843.2M1386.1 797.7L1385.1 839.1M1394.5 793.6L1393.6 835.0M1402.9 789.5L1402.1 830.9M1411.3 785.3L1410.6 826.8M1419.7 781.2L1419.1 822.7M1428.0 777.1L1427.5 818.5M1436.4 773.0L1436.0 814.4M1444.8 768.9L1444.5 810.3M1453.2 764.7L1453.0 806.2M1461.6 760.6L1461.5 802.1" stroke="#0000a0" stroke-width="1.6" fill="none" stroke-dasharray="6 2"/><path d="M931.6 1019.1h2.8v2.3h-2.8zM925.2 1059.8h2.8v2.3h-2.8zM948.4 1010.8h2.8v2.3h-2.8zM942.2 1051.6h2.8v2.3h-2.8zM965.2 1002.6h2.8v2.3h-2.8zM959.2 1043.4h2.8v2.3h-2.8zM981.9 994.3h2.8v2.3h-2.8zM976.1 1035.2h2.8v2.3h-2.8zM998.7 986.1h2.8v2.3h-2.8zM993.1 1027.0h2.8v2.3h-2.8zM1015.5 977.8h2.8v2.3h-2.8zM1010.1 1018.8h2.8v2.3h-2.8zM1032.3 969.6h2.8v2.3h-2.8zM1027.1 1010.5h2.8v2.3h-2.8zM1049.1 961.4h2.8v2.3h-2.8zM1044.1 1002.3h2.8v2.3h-2.8zM1065.8 953.1h2.8v2.3h-2.8zM1061.0 994.1h2.8v2.3h-2.8zM1082.6 944.9h2.8v2.3h-2.8zM1078.0 985.9h2.8v2.3h-2.8zM1099.4 936.6h2.8v2.3h-2.8zM1095.0 977.7h2.8v2.3h-2.8zM1116.2 928.4h2.8v2.3h-2.8zM1112.0 969.4h2.8v2.3h-2.8zM1133.0 920.2h2.8v2.3h-2.8zM1129.0 961.2h2.8v2.3h-2.8zM1149.8 911.9h2.8v2.3h-2.8zM1146.0 953.0h2.8v2.3h-2.8zM1166.5 903.7h2.8v2.3h-2.8zM1162.9 944.8h2.8v2.3h-2.8zM1183.3 895.4h2.8v2.3h-2.8zM1179.9 936.6h2.8v2.3h-2.8zM1200.1 887.2h2.8v2.3h-2.8zM1196.9 928.4h2.8v2.3h-2.8zM1216.9 879.0h2.8v2.3h-2.8zM1213.9 920.1h2.8v2.3h-2.8zM1233.7 870.7h2.8v2.3h-2.8zM1230.9 911.9h2.8v2.3h-2.8zM1250.4 862.5h2.8v2.3h-2.8zM1247.8 903.7h2.8v2.3h-2.8zM1267.2 854.2h2.8v2.3h-2.8zM1264.8 895.5h2.8v2.3h-2.8zM1284.0 846.0h2.8v2.3h-2.8zM1281.8 887.3h2.8v2.3h-2.8zM1300.8 837.8h2.8v2.3h-2.8zM1298.8 879.0h2.8v2.3h-2.8zM1317.6 829.5h2.8v2.3h-2.8zM1315.8 870.8h2.8v2.3h-2.8zM1334.3 821.3h2.8v2.3h-2.8zM1332.8 862.6h2.8v2.3h-2.8zM1351.1 813.0h2.8v2.3h-2.8zM1349.7 854.4h2.8v2.3h-2.8zM1367.9 804.8h2.8v2.3h-2.8zM1366.7 846.2h2.8v2.3h-2.8zM1384.7 796.6h2.8v2.3h-2.8zM1383.7 837.9h2.8v2.3h-2.8zM1401.5 788.3h2.8v2.3h-2.8zM1400.7 829.7h2.8v2.3h-2.8zM1418.3 780.1h2.8v2.3h-2.8zM1417.7 821.5h2.8v2.3h-2.8zM1435.0 771.8h2.8v2.3h-2.8zM1434.6 813.3h2.8v2.3h-2.8zM1451.8 763.6h2.8v2.3h-2.8zM1451.6 805.1h2.8v2.3h-2.8zM1468.6 755.4h2.8v2.3h-2.8zM1468.6 796.9h2.8v2.3h-2.8z" fill="#f8304e"/><polygon points="693.5,925.0 933.0,1020.2 926.6,1061.0 688.2,964.8" fill="#0000ff" stroke="#06383a" stroke-width="5.66" stroke-linejoin="round" /><path d="M704.4 929.3L699.0 969.2M715.3 933.7L709.9 973.5M726.2 938.0L720.7 977.9M737.0 942.3L731.5 982.3M747.9 946.6L742.4 986.7M758.8 951.0L753.2 991.0M769.7 955.3L764.1 995.4M780.6 959.6L774.9 999.8M791.5 963.9L785.7 1004.2M802.4 968.3L796.6 1008.5M813.2 972.6L807.4 1012.9M824.1 976.9L818.2 1017.3M835.0 981.3L829.1 1021.6M845.9 985.6L839.9 1026.0M856.8 989.9L850.7 1030.4M867.7 994.2L861.6 1034.8M878.6 998.6L872.4 1039.1M889.5 1002.9L883.3 1043.5M900.3 1007.2L894.1 1047.9M911.2 1011.5L904.9 1052.3M922.1 1015.9L915.8 1056.6" stroke="#0000a0" stroke-width="1.5" fill="none" stroke-dasharray="6 2"/><path d="M692.1 923.9h2.8v2.3h-2.8zM686.8 963.6h2.8v2.3h-2.8zM713.9 932.5h2.8v2.3h-2.8zM708.5 972.4h2.8v2.3h-2.8zM735.6 941.2h2.8v2.3h-2.8zM730.1 981.1h2.8v2.3h-2.8zM757.4 949.8h2.8v2.3h-2.8zM751.8 989.9h2.8v2.3h-2.8zM779.2 958.5h2.8v2.3h-2.8zM773.5 998.6h2.8v2.3h-2.8zM801.0 967.1h2.8v2.3h-2.8zM795.2 1007.4h2.8v2.3h-2.8zM822.7 975.8h2.8v2.3h-2.8zM816.8 1016.1h2.8v2.3h-2.8zM844.5 984.4h2.8v2.3h-2.8zM838.5 1024.9h2.8v2.3h-2.8zM866.3 993.1h2.8v2.3h-2.8zM860.2 1033.6h2.8v2.3h-2.8zM888.1 1001.7h2.8v2.3h-2.8zM881.9 1042.4h2.8v2.3h-2.8zM909.8 1010.4h2.8v2.3h-2.8zM903.5 1051.1h2.8v2.3h-2.8zM931.6 1019.1h2.8v2.3h-2.8zM925.2 1059.8h2.8v2.3h-2.8z" fill="#f8304e"/><polygon points="681.0,920.0 693.5,925.0 688.2,964.8 672.5,962.7" fill="#0000ff" stroke="#06383a" stroke-width="4.96" stroke-linejoin="round" /><polygon points="681.0,920.0 708.0,915.7 1214.0,667.0 1251.0,684.0 1470.0,756.5 933.0,1020.2 693.5,925.0" fill="#0000ff" stroke="#0000ff" stroke-width="1.60" stroke-linejoin="round" /><g clip-path="url(#ctt)"><path d="M692.5 924.6L1225.6 671.1M703.9 929.1L1237.3 675.1M715.4 933.7L1248.9 679.2M726.8 938.2L1260.5 683.3M738.3 942.8L1272.2 687.3M749.7 947.3L1283.8 691.4M761.2 951.9L1295.5 695.5M772.6 956.4L1307.1 699.5M784.1 961.0L1318.7 703.6M795.5 965.5L1330.4 707.7M807.0 970.1L1342.0 711.8M818.5 974.7L1353.6 715.8M829.9 979.2L1365.3 719.9M841.4 983.8L1376.9 724.0M852.8 988.3L1388.5 728.0M864.3 992.9L1400.2 732.1M875.7 997.4L1411.8 736.2M887.2 1002.0L1423.5 740.2M898.6 1006.5L1435.1 744.3M910.1 1011.1L1446.7 748.4M921.5 1015.6L1458.4 752.4" stroke="#00008c" stroke-width="1.2" fill="none" stroke-dasharray="7 2"/><path d="M689.3 916.0L941.4 1016.1M697.7 912.1L949.8 1012.0M706.0 908.1L958.2 1007.8M714.3 904.2L966.6 1003.7M722.6 900.2L975.0 999.6M731.0 896.3L983.3 995.5M739.3 892.3L991.7 991.4M747.6 888.4L1000.1 987.2M756.0 884.4L1008.5 983.1M764.3 880.5L1016.9 979.0M772.6 876.5L1025.3 974.9M780.9 872.6L1033.7 970.8M789.3 868.6L1042.1 966.6M797.6 864.7L1050.5 962.5M805.9 860.7L1058.9 958.4M814.2 856.8L1067.2 954.3M822.6 852.8L1075.6 950.2M830.9 848.8L1084.0 946.0M839.2 844.9L1092.4 941.9M847.6 840.9L1100.8 937.8M855.9 837.0L1109.2 933.7M864.2 833.0L1117.6 929.6M872.5 829.1L1126.0 925.4M880.9 825.1L1134.4 921.3M889.2 821.2L1142.8 917.2M897.5 817.2L1151.2 913.1M905.9 813.3L1159.5 909.0M914.2 809.3L1167.9 904.8M922.5 805.4L1176.3 900.7M930.8 801.4L1184.7 896.6M939.2 797.5L1193.1 892.5M947.5 793.5L1201.5 888.4M955.8 789.5L1209.9 884.2M964.2 785.6L1218.3 880.1M972.5 781.6L1226.7 876.0M980.8 777.7L1235.1 871.9M989.1 773.7L1243.5 867.7M997.5 769.8L1251.8 863.6M1005.8 765.8L1260.2 859.5M1014.1 761.9L1268.6 855.4M1022.5 757.9L1277.0 851.3M1030.8 754.0L1285.4 847.1M1039.1 750.0L1293.8 843.0M1047.4 746.1L1302.2 838.9M1055.8 742.1L1310.6 834.8M1064.1 738.2L1319.0 830.7M1072.4 734.2L1327.4 826.5M1080.8 730.2L1335.8 822.4M1089.1 726.3L1344.1 818.3M1097.4 722.3L1352.5 814.2M1105.7 718.4L1360.9 810.1M1114.1 714.4L1369.3 805.9M1122.4 710.5L1377.7 801.8M1130.7 706.5L1386.1 797.7M1139.0 702.6L1394.5 793.6M1147.4 698.6L1402.9 789.5M1155.7 694.7L1411.3 785.3M1164.0 690.7L1419.7 781.2M1172.4 686.8L1428.0 777.1M1180.7 682.8L1436.4 773.0M1189.0 678.9L1444.8 768.9M1197.3 674.9L1453.2 764.7M1205.7 671.0L1461.6 760.6" stroke="#0000b0" stroke-width="1.5" fill="none" stroke-dasharray="7 2"/><path d="M679.6 918.9h2.8v2.3h-2.8zM712.9 903.0h2.8v2.3h-2.8zM746.2 887.2h2.8v2.3h-2.8zM779.5 871.4h2.8v2.3h-2.8zM812.9 855.6h2.8v2.3h-2.8zM846.2 839.8h2.8v2.3h-2.8zM879.5 824.0h2.8v2.3h-2.8zM912.8 808.2h2.8v2.3h-2.8zM946.1 792.4h2.8v2.3h-2.8zM979.4 776.5h2.8v2.3h-2.8zM1012.7 760.7h2.8v2.3h-2.8zM1046.0 744.9h2.8v2.3h-2.8zM1079.3 729.1h2.8v2.3h-2.8zM1112.7 713.3h2.8v2.3h-2.8zM1146.0 697.5h2.8v2.3h-2.8zM1179.3 681.7h2.8v2.3h-2.8zM1212.6 665.9h2.8v2.3h-2.8zM707.7 915.5h2.8v2.3h-2.8zM741.0 899.6h2.8v2.3h-2.8zM774.4 883.8h2.8v2.3h-2.8zM807.7 868.0h2.8v2.3h-2.8zM841.0 852.1h2.8v2.3h-2.8zM874.3 836.3h2.8v2.3h-2.8zM907.7 820.4h2.8v2.3h-2.8zM941.0 804.6h2.8v2.3h-2.8zM974.3 788.7h2.8v2.3h-2.8zM1007.6 772.9h2.8v2.3h-2.8zM1041.0 757.1h2.8v2.3h-2.8zM1074.3 741.2h2.8v2.3h-2.8zM1107.6 725.4h2.8v2.3h-2.8zM1140.9 709.5h2.8v2.3h-2.8zM1174.3 693.7h2.8v2.3h-2.8zM1207.6 677.8h2.8v2.3h-2.8zM702.5 928.0h2.8v2.3h-2.8zM735.8 912.1h2.8v2.3h-2.8zM769.2 896.2h2.8v2.3h-2.8zM802.5 880.3h2.8v2.3h-2.8zM835.9 864.5h2.8v2.3h-2.8zM869.2 848.6h2.8v2.3h-2.8zM902.5 832.7h2.8v2.3h-2.8zM935.9 816.8h2.8v2.3h-2.8zM969.2 801.0h2.8v2.3h-2.8zM1002.5 785.1h2.8v2.3h-2.8zM1035.9 769.2h2.8v2.3h-2.8zM1069.2 753.4h2.8v2.3h-2.8zM1102.5 737.5h2.8v2.3h-2.8zM1135.9 721.6h2.8v2.3h-2.8zM1169.2 705.7h2.8v2.3h-2.8zM1202.5 689.9h2.8v2.3h-2.8zM1235.9 674.0h2.8v2.3h-2.8zM730.6 924.6h2.8v2.3h-2.8zM764.0 908.7h2.8v2.3h-2.8zM797.3 892.8h2.8v2.3h-2.8zM830.7 876.9h2.8v2.3h-2.8zM864.0 860.9h2.8v2.3h-2.8zM897.4 845.0h2.8v2.3h-2.8zM930.7 829.1h2.8v2.3h-2.8zM964.1 813.2h2.8v2.3h-2.8zM997.4 797.3h2.8v2.3h-2.8zM1030.8 781.4h2.8v2.3h-2.8zM1064.1 765.5h2.8v2.3h-2.8zM1097.4 749.6h2.8v2.3h-2.8zM1130.8 733.7h2.8v2.3h-2.8zM1164.1 717.8h2.8v2.3h-2.8zM1197.5 701.9h2.8v2.3h-2.8zM1230.8 686.0h2.8v2.3h-2.8zM725.4 937.1h2.8v2.3h-2.8zM758.8 921.1h2.8v2.3h-2.8zM792.1 905.2h2.8v2.3h-2.8zM825.5 889.3h2.8v2.3h-2.8zM858.9 873.3h2.8v2.3h-2.8zM892.2 857.4h2.8v2.3h-2.8zM925.6 841.5h2.8v2.3h-2.8zM958.9 825.5h2.8v2.3h-2.8zM992.3 809.6h2.8v2.3h-2.8zM1025.6 793.7h2.8v2.3h-2.8zM1059.0 777.7h2.8v2.3h-2.8zM1092.4 761.8h2.8v2.3h-2.8zM1125.7 745.9h2.8v2.3h-2.8zM1159.1 729.9h2.8v2.3h-2.8zM1192.4 714.0h2.8v2.3h-2.8zM1225.8 698.1h2.8v2.3h-2.8zM1259.1 682.1h2.8v2.3h-2.8zM753.6 933.6h2.8v2.3h-2.8zM786.9 917.7h2.8v2.3h-2.8zM820.3 901.7h2.8v2.3h-2.8zM853.7 885.7h2.8v2.3h-2.8zM887.0 869.8h2.8v2.3h-2.8zM920.4 853.8h2.8v2.3h-2.8zM953.8 837.9h2.8v2.3h-2.8zM987.1 821.9h2.8v2.3h-2.8zM1020.5 805.9h2.8v2.3h-2.8zM1053.9 790.0h2.8v2.3h-2.8zM1087.3 774.0h2.8v2.3h-2.8zM1120.6 758.0h2.8v2.3h-2.8zM1154.0 742.1h2.8v2.3h-2.8zM1187.4 726.1h2.8v2.3h-2.8zM1220.7 710.1h2.8v2.3h-2.8zM1254.1 694.2h2.8v2.3h-2.8zM748.3 946.2h2.8v2.3h-2.8zM781.7 930.2h2.8v2.3h-2.8zM815.1 914.2h2.8v2.3h-2.8zM848.5 898.2h2.8v2.3h-2.8zM881.9 882.2h2.8v2.3h-2.8zM915.2 866.2h2.8v2.3h-2.8zM948.6 850.2h2.8v2.3h-2.8zM982.0 834.2h2.8v2.3h-2.8zM1015.4 818.2h2.8v2.3h-2.8zM1048.8 802.2h2.8v2.3h-2.8zM1082.1 786.2h2.8v2.3h-2.8zM1115.5 770.2h2.8v2.3h-2.8zM1148.9 754.2h2.8v2.3h-2.8zM1182.3 738.2h2.8v2.3h-2.8zM1215.7 722.2h2.8v2.3h-2.8zM1249.0 706.3h2.8v2.3h-2.8zM1282.4 690.3h2.8v2.3h-2.8zM776.5 942.7h2.8v2.3h-2.8zM809.9 926.7h2.8v2.3h-2.8zM843.3 910.7h2.8v2.3h-2.8zM876.7 894.6h2.8v2.3h-2.8zM910.0 878.6h2.8v2.3h-2.8zM943.4 862.6h2.8v2.3h-2.8zM976.8 846.6h2.8v2.3h-2.8zM1010.2 830.5h2.8v2.3h-2.8zM1043.6 814.5h2.8v2.3h-2.8zM1077.0 798.5h2.8v2.3h-2.8zM1110.4 782.5h2.8v2.3h-2.8zM1143.8 766.4h2.8v2.3h-2.8zM1177.2 750.4h2.8v2.3h-2.8zM1210.6 734.4h2.8v2.3h-2.8zM1244.0 718.4h2.8v2.3h-2.8zM1277.4 702.3h2.8v2.3h-2.8zM771.2 955.3h2.8v2.3h-2.8zM804.6 939.2h2.8v2.3h-2.8zM838.0 923.2h2.8v2.3h-2.8zM871.4 907.1h2.8v2.3h-2.8zM904.9 891.1h2.8v2.3h-2.8zM938.3 875.0h2.8v2.3h-2.8zM971.7 859.0h2.8v2.3h-2.8zM1005.1 842.9h2.8v2.3h-2.8zM1038.5 826.8h2.8v2.3h-2.8zM1071.9 810.8h2.8v2.3h-2.8zM1105.3 794.7h2.8v2.3h-2.8zM1138.7 778.7h2.8v2.3h-2.8zM1172.1 762.6h2.8v2.3h-2.8zM1205.5 746.6h2.8v2.3h-2.8zM1238.9 730.5h2.8v2.3h-2.8zM1272.3 714.5h2.8v2.3h-2.8zM1305.7 698.4h2.8v2.3h-2.8zM799.4 951.8h2.8v2.3h-2.8zM832.8 935.7h2.8v2.3h-2.8zM866.2 919.6h2.8v2.3h-2.8zM899.6 903.5h2.8v2.3h-2.8zM933.1 887.5h2.8v2.3h-2.8zM966.5 871.4h2.8v2.3h-2.8zM999.9 855.3h2.8v2.3h-2.8zM1033.3 839.2h2.8v2.3h-2.8zM1066.7 823.1h2.8v2.3h-2.8zM1100.1 807.0h2.8v2.3h-2.8zM1133.5 790.9h2.8v2.3h-2.8zM1167.0 774.9h2.8v2.3h-2.8zM1200.4 758.8h2.8v2.3h-2.8zM1233.8 742.7h2.8v2.3h-2.8zM1267.2 726.6h2.8v2.3h-2.8zM1300.6 710.5h2.8v2.3h-2.8zM794.1 964.4h2.8v2.3h-2.8zM827.6 948.3h2.8v2.3h-2.8zM861.0 932.2h2.8v2.3h-2.8zM894.4 916.0h2.8v2.3h-2.8zM927.9 899.9h2.8v2.3h-2.8zM961.3 883.8h2.8v2.3h-2.8zM994.7 867.7h2.8v2.3h-2.8zM1028.1 851.6h2.8v2.3h-2.8zM1061.6 835.5h2.8v2.3h-2.8zM1095.0 819.3h2.8v2.3h-2.8zM1128.4 803.2h2.8v2.3h-2.8zM1161.8 787.1h2.8v2.3h-2.8zM1195.3 771.0h2.8v2.3h-2.8zM1228.7 754.9h2.8v2.3h-2.8zM1262.1 738.8h2.8v2.3h-2.8zM1295.5 722.6h2.8v2.3h-2.8zM1329.0 706.5h2.8v2.3h-2.8zM822.3 960.9h2.8v2.3h-2.8zM855.8 944.7h2.8v2.3h-2.8zM889.2 928.6h2.8v2.3h-2.8zM922.6 912.4h2.8v2.3h-2.8zM956.1 896.3h2.8v2.3h-2.8zM989.5 880.1h2.8v2.3h-2.8zM1022.9 864.0h2.8v2.3h-2.8zM1056.4 847.8h2.8v2.3h-2.8zM1089.8 831.7h2.8v2.3h-2.8zM1123.3 815.6h2.8v2.3h-2.8zM1156.7 799.4h2.8v2.3h-2.8zM1190.1 783.3h2.8v2.3h-2.8zM1223.6 767.1h2.8v2.3h-2.8zM1257.0 751.0h2.8v2.3h-2.8zM1290.4 734.8h2.8v2.3h-2.8zM1323.9 718.7h2.8v2.3h-2.8zM817.1 973.5h2.8v2.3h-2.8zM850.5 957.3h2.8v2.3h-2.8zM884.0 941.1h2.8v2.3h-2.8zM917.4 925.0h2.8v2.3h-2.8zM950.9 908.8h2.8v2.3h-2.8zM984.3 892.6h2.8v2.3h-2.8zM1017.7 876.4h2.8v2.3h-2.8zM1051.2 860.3h2.8v2.3h-2.8zM1084.6 844.1h2.8v2.3h-2.8zM1118.1 827.9h2.8v2.3h-2.8zM1151.5 811.7h2.8v2.3h-2.8zM1185.0 795.6h2.8v2.3h-2.8zM1218.4 779.4h2.8v2.3h-2.8zM1251.9 763.2h2.8v2.3h-2.8zM1285.3 747.0h2.8v2.3h-2.8zM1318.8 730.8h2.8v2.3h-2.8zM1352.2 714.7h2.8v2.3h-2.8zM845.2 970.0h2.8v2.3h-2.8zM878.7 953.7h2.8v2.3h-2.8zM912.2 937.5h2.8v2.3h-2.8zM945.6 921.3h2.8v2.3h-2.8zM979.1 905.1h2.8v2.3h-2.8zM1012.5 888.9h2.8v2.3h-2.8zM1046.0 872.7h2.8v2.3h-2.8zM1079.5 856.5h2.8v2.3h-2.8zM1112.9 840.3h2.8v2.3h-2.8zM1146.4 824.1h2.8v2.3h-2.8zM1179.8 807.9h2.8v2.3h-2.8zM1213.3 791.7h2.8v2.3h-2.8zM1246.8 775.5h2.8v2.3h-2.8zM1280.2 759.3h2.8v2.3h-2.8zM1313.7 743.0h2.8v2.3h-2.8zM1347.1 726.8h2.8v2.3h-2.8zM840.0 982.6h2.8v2.3h-2.8zM873.4 966.4h2.8v2.3h-2.8zM906.9 950.1h2.8v2.3h-2.8zM940.4 933.9h2.8v2.3h-2.8zM973.9 917.7h2.8v2.3h-2.8zM1007.3 901.4h2.8v2.3h-2.8zM1040.8 885.2h2.8v2.3h-2.8zM1074.3 868.9h2.8v2.3h-2.8zM1107.7 852.7h2.8v2.3h-2.8zM1141.2 836.5h2.8v2.3h-2.8zM1174.7 820.2h2.8v2.3h-2.8zM1208.2 804.0h2.8v2.3h-2.8zM1241.6 787.8h2.8v2.3h-2.8zM1275.1 771.5h2.8v2.3h-2.8zM1308.6 755.3h2.8v2.3h-2.8zM1342.0 739.0h2.8v2.3h-2.8zM1375.5 722.8h2.8v2.3h-2.8zM868.2 979.0h2.8v2.3h-2.8zM901.6 962.8h2.8v2.3h-2.8zM935.1 946.5h2.8v2.3h-2.8zM968.6 930.2h2.8v2.3h-2.8zM1002.1 914.0h2.8v2.3h-2.8zM1035.6 897.7h2.8v2.3h-2.8zM1069.1 881.4h2.8v2.3h-2.8zM1102.5 865.2h2.8v2.3h-2.8zM1136.0 848.9h2.8v2.3h-2.8zM1169.5 832.6h2.8v2.3h-2.8zM1203.0 816.3h2.8v2.3h-2.8zM1236.5 800.1h2.8v2.3h-2.8zM1270.0 783.8h2.8v2.3h-2.8zM1303.4 767.5h2.8v2.3h-2.8zM1336.9 751.3h2.8v2.3h-2.8zM1370.4 735.0h2.8v2.3h-2.8zM862.9 991.7h2.8v2.3h-2.8zM896.4 975.4h2.8v2.3h-2.8zM929.9 959.1h2.8v2.3h-2.8zM963.4 942.8h2.8v2.3h-2.8zM996.9 926.5h2.8v2.3h-2.8zM1030.3 910.2h2.8v2.3h-2.8zM1063.8 893.9h2.8v2.3h-2.8zM1097.3 877.6h2.8v2.3h-2.8zM1130.8 861.3h2.8v2.3h-2.8zM1164.3 845.0h2.8v2.3h-2.8zM1197.8 828.7h2.8v2.3h-2.8zM1231.3 812.4h2.8v2.3h-2.8zM1264.8 796.1h2.8v2.3h-2.8zM1298.3 779.8h2.8v2.3h-2.8zM1331.8 763.5h2.8v2.3h-2.8zM1365.3 747.2h2.8v2.3h-2.8zM1398.8 730.9h2.8v2.3h-2.8zM891.1 988.1h2.8v2.3h-2.8zM924.6 971.8h2.8v2.3h-2.8zM958.1 955.5h2.8v2.3h-2.8zM991.6 939.1h2.8v2.3h-2.8zM1025.1 922.8h2.8v2.3h-2.8zM1058.6 906.5h2.8v2.3h-2.8zM1092.1 890.1h2.8v2.3h-2.8zM1125.6 873.8h2.8v2.3h-2.8zM1159.1 857.5h2.8v2.3h-2.8zM1192.6 841.1h2.8v2.3h-2.8zM1226.1 824.8h2.8v2.3h-2.8zM1259.6 808.5h2.8v2.3h-2.8zM1293.1 792.2h2.8v2.3h-2.8zM1326.7 775.8h2.8v2.3h-2.8zM1360.2 759.5h2.8v2.3h-2.8zM1393.7 743.2h2.8v2.3h-2.8zM885.8 1000.8h2.8v2.3h-2.8zM919.3 984.5h2.8v2.3h-2.8zM952.8 968.1h2.8v2.3h-2.8zM986.3 951.8h2.8v2.3h-2.8zM1019.9 935.4h2.8v2.3h-2.8zM1053.4 919.0h2.8v2.3h-2.8zM1086.9 902.7h2.8v2.3h-2.8zM1120.4 886.3h2.8v2.3h-2.8zM1153.9 870.0h2.8v2.3h-2.8zM1187.4 853.6h2.8v2.3h-2.8zM1221.0 837.2h2.8v2.3h-2.8zM1254.5 820.9h2.8v2.3h-2.8zM1288.0 804.5h2.8v2.3h-2.8zM1321.5 788.2h2.8v2.3h-2.8zM1355.0 771.8h2.8v2.3h-2.8zM1388.5 755.4h2.8v2.3h-2.8zM1422.1 739.1h2.8v2.3h-2.8zM914.0 997.2h2.8v2.3h-2.8zM947.5 980.8h2.8v2.3h-2.8zM981.1 964.4h2.8v2.3h-2.8zM1014.6 948.0h2.8v2.3h-2.8zM1048.1 931.6h2.8v2.3h-2.8zM1081.6 915.2h2.8v2.3h-2.8zM1115.2 898.9h2.8v2.3h-2.8zM1148.7 882.5h2.8v2.3h-2.8zM1182.2 866.1h2.8v2.3h-2.8zM1215.8 849.7h2.8v2.3h-2.8zM1249.3 833.3h2.8v2.3h-2.8zM1282.8 816.9h2.8v2.3h-2.8zM1316.3 800.5h2.8v2.3h-2.8zM1349.9 784.1h2.8v2.3h-2.8zM1383.4 767.7h2.8v2.3h-2.8zM1416.9 751.3h2.8v2.3h-2.8zM908.7 1009.9h2.8v2.3h-2.8zM942.2 993.5h2.8v2.3h-2.8zM975.8 977.1h2.8v2.3h-2.8zM1009.3 960.7h2.8v2.3h-2.8zM1042.8 944.3h2.8v2.3h-2.8zM1076.4 927.8h2.8v2.3h-2.8zM1109.9 911.4h2.8v2.3h-2.8zM1143.5 895.0h2.8v2.3h-2.8zM1177.0 878.6h2.8v2.3h-2.8zM1210.5 862.2h2.8v2.3h-2.8zM1244.1 845.7h2.8v2.3h-2.8zM1277.6 829.3h2.8v2.3h-2.8zM1311.2 812.9h2.8v2.3h-2.8zM1344.7 796.5h2.8v2.3h-2.8zM1378.2 780.1h2.8v2.3h-2.8zM1411.8 763.6h2.8v2.3h-2.8zM1445.3 747.2h2.8v2.3h-2.8zM936.9 1006.3h2.8v2.3h-2.8zM970.5 989.8h2.8v2.3h-2.8zM1004.0 973.4h2.8v2.3h-2.8zM1037.6 956.9h2.8v2.3h-2.8zM1071.1 940.5h2.8v2.3h-2.8zM1104.7 924.0h2.8v2.3h-2.8zM1138.2 907.6h2.8v2.3h-2.8zM1171.8 891.1h2.8v2.3h-2.8zM1205.3 874.7h2.8v2.3h-2.8zM1238.9 858.2h2.8v2.3h-2.8zM1272.4 841.8h2.8v2.3h-2.8zM1306.0 825.3h2.8v2.3h-2.8zM1339.5 808.9h2.8v2.3h-2.8zM1373.1 792.4h2.8v2.3h-2.8zM1406.6 776.0h2.8v2.3h-2.8zM1440.2 759.5h2.8v2.3h-2.8zM931.6 1019.1h2.8v2.3h-2.8zM965.2 1002.6h2.8v2.3h-2.8zM998.7 986.1h2.8v2.3h-2.8zM1032.3 969.6h2.8v2.3h-2.8zM1065.8 953.1h2.8v2.3h-2.8zM1099.4 936.6h2.8v2.3h-2.8zM1133.0 920.2h2.8v2.3h-2.8zM1166.5 903.7h2.8v2.3h-2.8zM1200.1 887.2h2.8v2.3h-2.8zM1233.7 870.7h2.8v2.3h-2.8zM1267.2 854.2h2.8v2.3h-2.8zM1300.8 837.8h2.8v2.3h-2.8zM1334.3 821.3h2.8v2.3h-2.8zM1367.9 804.8h2.8v2.3h-2.8zM1401.5 788.3h2.8v2.3h-2.8zM1435.0 771.8h2.8v2.3h-2.8zM1468.6 755.4h2.8v2.3h-2.8z" fill="#f8304e"/></g><polyline points="681.0,919.5 708.0,915.7 1214.0,667.0" fill="none" stroke="#06383a" stroke-width="3.30" stroke-linejoin="round" stroke-linecap="round" /><polyline points="1251.0,684.0 1470.0,756.5" fill="none" stroke="#06383a" stroke-width="3.78" stroke-linejoin="round" stroke-linecap="round" /><polyline points="693.5,925.0 933.0,1020.2 1470.0,756.5" fill="none" stroke="#06383a" stroke-width="6.14" stroke-linejoin="round" stroke-linecap="round" /><polyline points="681.0,920.0 693.5,925.0" fill="none" stroke="#06383a" stroke-width="5.19" stroke-linejoin="round" stroke-linecap="round" /><ellipse cx="1195" cy="795.6" rx="33.5" ry="15.4" fill="#0000ff" stroke="#06383a" stroke-width="3.4" stroke-dasharray="4 1.5"/><polyline points="1177.0,784.0 1174.5,808.0" fill="none" stroke="#06383a" stroke-width="5.19" stroke-linejoin="round" stroke-linecap="round" /><polyline points="1190.0,784.0 1187.5,808.0" fill="none" stroke="#06383a" stroke-width="5.19" stroke-linejoin="round" stroke-linecap="round" /><polyline points="1205.0,784.0 1202.5,808.0" fill="none" stroke="#06383a" stroke-width="5.19" stroke-linejoin="round" stroke-linecap="round" /><path d="M1160 795.6 a34.5 16 0 0 1 70 0" fill="none" stroke="#ff2a4a" stroke-width="2.2" stroke-dasharray="2.4 5.6"/><polygon points="928.0,856.2 964.3,839.5 987.8,841.3 1036.7,860.8 1049.4,870.7 1056.7,887.9 1053.0,917.8 1015.0,935.9 975.1,935.0 916.3,908.8 907.2,892.5 911.7,865.3" fill="#0000ff" stroke="#06383a" stroke-width="3.30" stroke-linejoin="round" /><polygon points="928.0,856.2 964.3,839.5 987.8,841.3 1036.7,860.8 1045.8,874.3 1012.3,889.7 984.2,891.1 928.0,869.4" fill="#0000ff" stroke="#06383a" stroke-width="5.66" stroke-linejoin="round" /><ellipse cx="980.6" cy="864.6" rx="30" ry="10" transform="rotate(14 980.6 864.6)" fill="#2a9df4"/><g transform="rotate(14 980.6 864.6)"><path d="M955 860 h52 M953 865 h56 M956 870 h50 M962 856 l10 18 M972 855 l10 19 M982 855 l10 19 M992 856 l10 17 M1002 858 l6 12" stroke="#00127a" stroke-width="1" fill="none"/></g><polyline points="911.7,865.3 919.9,880.7 978.8,905.1 1018.6,906.0 1056.7,887.9" fill="none" stroke="#06383a" stroke-width="5.90" stroke-linejoin="round" stroke-linecap="round" /><polyline points="928.0,856.2 911.7,865.3" fill="none" stroke="#06383a" stroke-width="4.72" stroke-linejoin="round" stroke-linecap="round" /><polyline points="928.0,869.4 919.9,880.7" fill="none" stroke="#06383a" stroke-width="5.90" stroke-linejoin="round" stroke-linecap="round" /><polyline points="984.2,891.1 978.8,905.1" fill="none" stroke="#06383a" stroke-width="5.90" stroke-linejoin="round" stroke-linecap="round" /><polyline points="1012.3,889.7 1018.6,906.0" fill="none" stroke="#06383a" stroke-width="5.90" stroke-linejoin="round" stroke-linecap="round" /><polyline points="1045.8,874.3 1056.7,887.9" fill="none" stroke="#06383a" stroke-width="5.90" stroke-linejoin="round" stroke-linecap="round" /><polyline points="919.9,880.7 916.3,908.8" fill="none" stroke="#06383a" stroke-width="5.90" stroke-linejoin="round" stroke-linecap="round" /><polyline points="978.8,905.1 975.1,935.0" fill="none" stroke="#06383a" stroke-width="5.90" stroke-linejoin="round" stroke-linecap="round" /><polyline points="1018.6,906.0 1015.0,935.9" fill="none" stroke="#06383a" stroke-width="5.90" stroke-linejoin="round" stroke-linecap="round" /><polyline points="1056.7,887.9 1053.0,917.8" fill="none" stroke="#06383a" stroke-width="4.72" stroke-linejoin="round" stroke-linecap="round" /><rect x="977.4" y="903.7" width="2.8" height="2.8" fill="#ff3a2a"/><rect x="1017.2" y="904.6" width="2.8" height="2.8" fill="#ff3a2a"/><rect x="918.5" y="879.3" width="2.8" height="2.8" fill="#ff3a2a"/><rect x="1055.3" y="886.5" width="2.8" height="2.8" fill="#ff3a2a"/><rect x="926.6" y="854.8" width="2.8" height="2.8" fill="#ff3a2a"/><rect x="1044.4" y="872.9" width="2.8" height="2.8" fill="#ff3a2a"/><rect x="982.8" y="889.7" width="2.8" height="2.8" fill="#ff3a2a"/><rect x="1010.9" y="888.3" width="2.8" height="2.8" fill="#ff3a2a"/><rect x="973.7" y="933.6" width="2.8" height="2.8" fill="#ff3a2a"/><rect x="948.6" y="891.6" width="2.8" height="2.8" fill="#ff3a2a"/><rect x="952.6" y="865.6" width="2.8" height="2.8" fill="#ff3a2a"/><polygon points="1138.3,701.8 1175.9,684.0 1251.2,684.0 1282.5,725.8 1278.4,755.1 1240.7,776.0 1198.9,771.8 1144.5,759.3 1132.0,725.8" fill="#0000ff" stroke="#06383a" stroke-width="3.54" stroke-linejoin="round" /><polygon points="1138.3,701.8 1175.9,684.0 1251.2,684.0 1282.5,724.8 1244.9,743.6 1205.2,744.6 1144.5,720.6" fill="#0000ff" stroke="#06383a" stroke-width="5.66" stroke-linejoin="round" /><polyline points="1144.5,720.6 1144.5,759.3" fill="none" stroke="#06383a" stroke-width="5.90" stroke-linejoin="round" stroke-linecap="round" /><polyline points="1205.2,744.6 1198.9,771.8" fill="none" stroke="#06383a" stroke-width="5.90" stroke-linejoin="round" stroke-linecap="round" /><polyline points="1244.9,743.6 1240.7,776.0" fill="none" stroke="#06383a" stroke-width="5.90" stroke-linejoin="round" stroke-linecap="round" /><polyline points="1282.5,725.8 1278.4,755.1" fill="none" stroke="#06383a" stroke-width="4.72" stroke-linejoin="round" stroke-linecap="round" /><polyline points="1175.0,744.0 1172.0,766.0" fill="none" stroke="#00127a" stroke-width="1.20" stroke-linejoin="round" stroke-linecap="round" /><polygon points="1193.7,604.5 1261.6,623.4 1243.9,724.8 1226.0,728.5 1207.3,727.9 1188.0,721.0 1175.9,711.2" fill="#0000ff" stroke="#06383a" stroke-width="5.19" stroke-linejoin="round" /><polyline points="1207.3,608.3 1190.4,721.5" fill="none" stroke="#06383a" stroke-width="5.43" stroke-linejoin="round" stroke-linecap="round" /><polyline points="1222.2,612.4 1205.1,728.1" fill="none" stroke="#06383a" stroke-width="5.43" stroke-linejoin="round" stroke-linecap="round" /><polyline points="1237.2,616.6 1219.8,730.4" fill="none" stroke="#06383a" stroke-width="5.43" stroke-linejoin="round" stroke-linecap="round" /><polyline points="1250.7,620.4 1233.2,728.7" fill="none" stroke="#06383a" stroke-width="5.43" stroke-linejoin="round" stroke-linecap="round" /><path d="M1186 652.5 Q1216 668 1256 661" fill="none" stroke="#06383a" stroke-width="5"/><polygon points="1209.4,519.9 1240.7,520.9 1291.0,540.8 1304.5,554.4 1308.7,569.0 1305.5,600.4 1264.8,619.2 1224.0,613.0 1192.6,603.5 1165.5,592.0 1157.0,574.2 1160.2,545.0 1178.0,535.5" fill="#0000ff" stroke="#06383a" stroke-width="3.78" stroke-linejoin="round" /><polygon points="1178.0,536.6 1209.4,520.9 1240.7,522.0 1289.9,541.8 1296.1,555.4 1263.7,569.0 1233.4,572.1 1178.0,549.1" fill="#0000ff" stroke="#06383a" stroke-width="5.66" stroke-linejoin="round" /><polyline points="1160.2,548.0 1169.6,560.6 1229.2,585.7 1269.0,583.6 1307.6,570.0" fill="none" stroke="#06383a" stroke-width="5.90" stroke-linejoin="round" stroke-linecap="round" /><polyline points="1178.0,549.1 1169.6,560.6" fill="none" stroke="#06383a" stroke-width="5.90" stroke-linejoin="round" stroke-linecap="round" /><polyline points="1233.4,572.1 1229.2,585.7" fill="none" stroke="#06383a" stroke-width="5.90" stroke-linejoin="round" stroke-linecap="round" /><polyline points="1263.7,569.0 1269.0,583.6" fill="none" stroke="#06383a" stroke-width="5.90" stroke-linejoin="round" stroke-linecap="round" /><polyline points="1296.1,555.4 1307.6,570.0" fill="none" stroke="#06383a" stroke-width="5.90" stroke-linejoin="round" stroke-linecap="round" /><polyline points="1169.6,560.6 1165.5,592.0" fill="none" stroke="#06383a" stroke-width="5.90" stroke-linejoin="round" stroke-linecap="round" /><polyline points="1229.2,585.7 1224.0,613.0" fill="none" stroke="#06383a" stroke-width="5.90" stroke-linejoin="round" stroke-linecap="round" /><polyline points="1269.0,583.6 1264.8,619.2" fill="none" stroke="#06383a" stroke-width="5.90" stroke-linejoin="round" stroke-linecap="round" /><polyline points="1307.6,570.0 1305.5,600.4" fill="none" stroke="#06383a" stroke-width="4.25" stroke-linejoin="round" stroke-linecap="round" /><polyline points="1178.0,536.6 1160.2,545.0" fill="none" stroke="#06383a" stroke-width="4.72" stroke-linejoin="round" stroke-linecap="round" /><path d="M1240.9 549.2h2.6v2h-2.6zM1227.9 548.1h2.6v2h-2.6zM1260.2 548.3h2.6v2h-2.6zM1261.1 539.3h2.6v2h-2.6zM1234.4 538.9h2.6v2h-2.6zM1217.5 543.4h2.6v2h-2.6zM1245.1 548.7h2.6v2h-2.6zM1253.1 557.2h2.6v2h-2.6zM1245.3 534.7h2.6v2h-2.6zM1238.2 539.6h2.6v2h-2.6zM1233.2 554.6h2.6v2h-2.6zM1225.0 533.1h2.6v2h-2.6zM1242.9 542.4h2.6v2h-2.6zM1209.2 538.4h2.6v2h-2.6zM1221.7 544.8h2.6v2h-2.6zM1226.8 545.6h2.6v2h-2.6zM1264.4 540.2h2.6v2h-2.6zM1216.7 542.9h2.6v2h-2.6zM1256.2 539.7h2.6v2h-2.6zM1255.9 536.9h2.6v2h-2.6zM1213.6 544.6h2.6v2h-2.6zM1214.3 540.0h2.6v2h-2.6zM1251.7 551.1h2.6v2h-2.6zM1238.1 542.5h2.6v2h-2.6zM1266.3 548.0h2.6v2h-2.6zM1238.5 554.3h2.6v2h-2.6zM1217.2 546.4h2.6v2h-2.6zM1252.9 544.9h2.6v2h-2.6zM1225.3 548.0h2.6v2h-2.6zM1220.8 539.9h2.6v2h-2.6zM1223.9 553.8h2.6v2h-2.6zM1231.5 553.8h2.6v2h-2.6zM1244.8 542.7h2.6v2h-2.6zM1254.6 547.3h2.6v2h-2.6zM1232.7 534.8h2.6v2h-2.6zM1243.8 552.5h2.6v2h-2.6zM1253.2 552.9h2.6v2h-2.6zM1268.0 547.9h2.6v2h-2.6zM1259.6 537.3h2.6v2h-2.6zM1224.9 532.3h2.6v2h-2.6zM1256.8 545.8h2.6v2h-2.6zM1266.3 542.6h2.6v2h-2.6zM1212.1 551.7h2.6v2h-2.6zM1207.7 536.9h2.6v2h-2.6zM1236.5 550.5h2.6v2h-2.6zM1225.7 546.7h2.6v2h-2.6z" fill="#ff2a4a"/><rect x="1227.8" y="584.3" width="2.8" height="2.8" fill="#ff3a2a"/><rect x="1267.6" y="582.2" width="2.8" height="2.8" fill="#ff3a2a"/><rect x="1232.0" y="570.7" width="2.8" height="2.8" fill="#ff3a2a"/><rect x="1234.6" y="554.6" width="2.8" height="2.8" fill="#ff3a2a"/><rect x="1168.2" y="559.2" width="2.8" height="2.8" fill="#ff3a2a"/><rect x="1197.6" y="572.6" width="2.8" height="2.8" fill="#ff3a2a"/><rect x="1203.8" y="743.2" width="2.8" height="2.8" fill="#ff3a2a"/><rect x="1243.5" y="742.2" width="2.8" height="2.8" fill="#ff3a2a"/><rect x="1198.6" y="664.6" width="2.8" height="2.8" fill="#ff3a2a"/><rect x="1217.6" y="666.6" width="2.8" height="2.8" fill="#ff3a2a"/></svg><div style="position:absolute;left:727.6px;top:252.0px;width:59.6px;height:37.5px;background:#ff0000"></div>
<div style="position:absolute;left:727.6px;top:291.9px;width:59.6px;height:37.5px;background:#ff9000"></div>
<div style="position:absolute;left:727.6px;top:331.9px;width:59.6px;height:37.5px;background:#dfff00"></div>
<div style="position:absolute;left:727.6px;top:371.9px;width:59.6px;height:37.5px;background:#50ff00"></div>
<div style="position:absolute;left:727.6px;top:411.8px;width:59.6px;height:37.5px;background:#00ff40"></div>
<div style="position:absolute;left:727.6px;top:451.8px;width:59.6px;height:37.5px;background:#00ffd0"></div>
<div style="position:absolute;left:727.6px;top:491.7px;width:59.6px;height:37.5px;background:#0090ff"></div>
<div style="position:absolute;left:727.6px;top:531.7px;width:59.6px;height:37.5px;background:#0000ff"></div>
<svg style="position:absolute;left:680px;top:234px" width="120" height="356" viewBox="680 234 120 356"><rect x="693.4" y="251" width="8" height="320" fill="#e6e8ea" stroke="#c9c9c9" stroke-width="1"/><path d="M687 239.6 H701.6 L713 251.2 H687Z M687 582 H701.6 L713 570.4 H687Z" fill="#d2d2d2" stroke="#a0a0a0" stroke-width="1"/><path d="M713 251.4 H727 M713 570.2 H727" stroke="#b0b0b0" stroke-width="1"/></svg>
<span style="position:absolute;left:726.10px;top:191.71px;font:29.6px/38px 'Liberation Mono',monospace;color:#000;white-space:pre;letter-spacing:0.117px;-webkit-text-stroke:0.7px #fff;">von Mises stress</span>
<span style="position:absolute;left:809.00px;top:232.01px;font:29.6px/38px 'Liberation Mono',monospace;color:#000;white-space:pre;letter-spacing:0.117px;-webkit-text-stroke:0.7px #fff;">1.307</span>
<span style="position:absolute;left:809.00px;top:272.06px;font:29.6px/38px 'Liberation Mono',monospace;color:#000;white-space:pre;letter-spacing:0.117px;-webkit-text-stroke:0.7px #fff;">1.143</span>
<span style="position:absolute;left:809.00px;top:312.11px;font:29.6px/38px 'Liberation Mono',monospace;color:#000;white-space:pre;letter-spacing:0.117px;-webkit-text-stroke:0.7px #fff;">0.98</span>
<span style="position:absolute;left:809.00px;top:352.16px;font:29.6px/38px 'Liberation Mono',monospace;color:#000;white-space:pre;letter-spacing:0.117px;-webkit-text-stroke:0.7px #fff;">0.8166</span>
<span style="position:absolute;left:809.00px;top:392.21px;font:29.6px/38px 'Liberation Mono',monospace;color:#000;white-space:pre;letter-spacing:0.117px;-webkit-text-stroke:0.7px #fff;">0.6533</span>
<span style="position:absolute;left:809.00px;top:432.26px;font:29.6px/38px 'Liberation Mono',monospace;color:#000;white-space:pre;letter-spacing:0.117px;-webkit-text-stroke:0.7px #fff;">0.49</span>
<span style="position:absolute;left:809.00px;top:472.31px;font:29.6px/38px 'Liberation Mono',monospace;color:#000;white-space:pre;letter-spacing:0.117px;-webkit-text-stroke:0.7px #fff;">0.3267</span>
<span style="position:absolute;left:809.00px;top:512.36px;font:29.6px/38px 'Liberation Mono',monospace;color:#000;white-space:pre;letter-spacing:0.117px;-webkit-text-stroke:0.7px #fff;">0.1633</span>
<span style="position:absolute;left:809.00px;top:552.41px;font:29.6px/38px 'Liberation Mono',monospace;color:#000;white-space:pre;letter-spacing:0.117px;-webkit-text-stroke:0.7px #fff;">0</span>
<span style="position:absolute;left:807.00px;top:601.11px;font:29.6px/38px 'Liberation Mono',monospace;color:#000;white-space:pre;letter-spacing:0.117px;-webkit-text-stroke:0.7px #fff;">GPa</span>
<span style="position:absolute;left:726.10px;top:641.51px;font:29.6px/38px 'Liberation Mono',monospace;color:#000;white-space:pre;letter-spacing:0.117px;-webkit-text-stroke:0.7px #fff;">Time = 1 s</span>
<span style="position:absolute;left:728.60px;top:681.71px;font:29.6px/38px 'Liberation Mono',monospace;color:#000;white-space:pre;letter-spacing:0.117px;-webkit-text-stroke:0.7px #fff;">= 0.01667 min</span>
<span style="position:absolute;left:726.10px;top:1279.61px;font:29.6px/38px 'Liberation Mono',monospace;color:#000;white-space:pre;letter-spacing:0.117px;-webkit-text-stroke:0.7px #fff;">Deformation scale factor 1</span>
</div></div>
<div id="graph"><div id="graphinner">
<div style="position:absolute;left:743.4px;top:1352.2px;width:1647.6px;height:72.0px;background:#fff"></div>
<svg style="position:absolute;left:0;top:0" width="2391" height="1435" viewBox="0 0 2391 1435"><path d="M743.4 1376.2 H2391" stroke="#d2d2d2" stroke-width="1"/><path d="M743.4 1400.2 H2391" stroke="#d2d2d2" stroke-width="1"/><path d="M2342.4 1352.2 V1424.2" stroke="#d2d2d2" stroke-width="1"/><path d="M2164.7 1352.2 V1424.2" stroke="#d2d2d2" stroke-width="1"/><path d="M1987.0 1352.2 V1424.2" stroke="#d2d2d2" stroke-width="1"/><path d="M1809.3 1352.2 V1424.2" stroke="#d2d2d2" stroke-width="1"/><path d="M1631.6 1352.2 V1424.2" stroke="#d2d2d2" stroke-width="1"/><path d="M1453.9 1352.2 V1424.2" stroke="#d2d2d2" stroke-width="1"/><path d="M1276.2 1352.2 V1424.2" stroke="#d2d2d2" stroke-width="1"/><path d="M1098.5 1352.2 V1424.2" stroke="#d2d2d2" stroke-width="1"/><path d="M920.8 1352.2 V1424.2" stroke="#d2d2d2" stroke-width="1"/><path d="M739.4 1352.2 H2391 M743.4 1352.2 V1430.2 M739.4 1424.2 H2391" stroke="#000" stroke-width="1.5" fill="none"/><path d="M738.1999999999999 1352.2 H749.0M741.1999999999999 1357.0 H746.8M741.1999999999999 1361.8 H746.8M741.1999999999999 1366.6 H746.8M741.1999999999999 1371.4 H746.8M738.1999999999999 1376.2 H749.0M741.1999999999999 1381.0 H746.8M741.1999999999999 1385.8 H746.8M741.1999999999999 1390.6 H746.8M741.1999999999999 1395.4 H746.8M738.1999999999999 1400.2 H749.0M741.1999999999999 1405.0 H746.8M741.1999999999999 1409.8 H746.8M741.1999999999999 1414.6 H746.8M741.1999999999999 1419.4 H746.8M738.1999999999999 1424.2 H749.0M2377.9 1421.8 V1427.6000000000001M2342.4 1419.8 V1429.8M2306.9 1421.8 V1427.6000000000001M2271.3 1421.8 V1427.6000000000001M2235.8 1421.8 V1427.6000000000001M2200.2 1421.8 V1427.6000000000001M2164.7 1419.8 V1429.8M2129.2 1421.8 V1427.6000000000001M2093.6 1421.8 V1427.6000000000001M2058.1 1421.8 V1427.6000000000001M2022.5 1421.8 V1427.6000000000001M1987.0 1419.8 V1429.8M1951.5 1421.8 V1427.6000000000001M1915.9 1421.8 V1427.6000000000001M1880.4 1421.8 V1427.6000000000001M1844.8 1421.8 V1427.6000000000001M1809.3 1419.8 V1429.8M1773.8 1421.8 V1427.6000000000001M1738.2 1421.8 V1427.6000000000001M1702.7 1421.8 V1427.6000000000001M1667.1 1421.8 V1427.6000000000001M1631.6 1419.8 V1429.8M1596.1 1421.8 V1427.6000000000001M1560.5 1421.8 V1427.6000000000001M1525.0 1421.8 V1427.6000000000001M1489.4 1421.8 V1427.6000000000001M1453.9 1419.8 V1429.8M1418.4 1421.8 V1427.6000000000001M1382.8 1421.8 V1427.6000000000001M1347.3 1421.8 V1427.6000000000001M1311.7 1421.8 V1427.6000000000001M1276.2 1419.8 V1429.8M1240.7 1421.8 V1427.6000000000001M1205.1 1421.8 V1427.6000000000001M1169.6 1421.8 V1427.6000000000001M1134.0 1421.8 V1427.6000000000001M1098.5 1419.8 V1429.8M1063.0 1421.8 V1427.6000000000001M1027.4 1421.8 V1427.6000000000001M991.9 1421.8 V1427.6000000000001M956.3 1421.8 V1427.6000000000001M920.8 1419.8 V1429.8M885.3 1421.8 V1427.6000000000001M849.7 1421.8 V1427.6000000000001M814.2 1421.8 V1427.6000000000001M778.6 1421.8 V1427.6000000000001" stroke="#000" stroke-width="1.3" fill="none"/></svg>
<span style="position:absolute;left:708.60px;top:1340.29px;font:15.6px/20px 'Liberation Sans',sans-serif;color:#1a1a1a;white-space:pre;letter-spacing:-0.029px;">1.5</span>
<span style="position:absolute;left:708.60px;top:1364.29px;font:15.6px/20px 'Liberation Sans',sans-serif;color:#1a1a1a;white-space:pre;letter-spacing:-0.029px;">1.0</span>
<span style="position:absolute;left:708.60px;top:1388.29px;font:15.6px/20px 'Liberation Sans',sans-serif;color:#1a1a1a;white-space:pre;letter-spacing:-0.029px;">0.5</span>
<span style="position:absolute;left:708.60px;top:1412.29px;font:15.6px/20px 'Liberation Sans',sans-serif;color:#1a1a1a;white-space:pre;letter-spacing:-0.029px;">0.0</span>
</div></div>
<div id="dlg" style="position:absolute;left:1422px;top:251px;width:980px;height:886px;box-sizing:border-box;border:1.6px solid #b9b9b9;border-radius:13px;background:#f0f0f0;overflow:hidden;box-shadow:0 0 0 1px rgba(0,0,0,0.05)"><div style="position:absolute;left:0;top:0;width:980px;height:49px;background:#f3f3f3"></div><div style="position:absolute;left:-1423.6px;top:-252.6px;width:2391px;height:1435px">
<svg style="position:absolute;left:1437.6px;top:262.8px" width="24.0" height="28.0" viewBox="0 0 24 28"><defs><linearGradient id="lgo" x1="0" y1="0" x2="1" y2="0"><stop offset="0" stop-color="#f28a1c"/><stop offset="0.55" stop-color="#f79a3c"/><stop offset="1" stop-color="#f4b070"/></linearGradient><linearGradient id="lgb" x1="0" y1="0" x2="1" y2="0.6"><stop offset="0" stop-color="#a29cff"/><stop offset="0.5" stop-color="#8c92fa"/><stop offset="0.8" stop-color="#3a5cf4"/><stop offset="1" stop-color="#1a44f0"/></linearGradient></defs><path d="M6.6 15.2 L11.9 14.2 L13.6 12.5 L18.6 11.2 V24.2 L15.4 22 L13.4 24.8 L6.6 26Z" fill="url(#lgb)"/><path d="M18.2 0.7 Q21 -0.3 23.9 0.7 V23.1 L18.2 24.2Z" fill="#0c36e6"/><path d="M18.6 1 V24" stroke="#0a1ea8" stroke-width="1"/><path d="M0.4 5.2 L5.6 4 L9 7.4 L11.8 2.7 L18.1 2 V11.4 L13.6 12.6 L11.9 14.3 L6.6 15.3 V26 L0.4 27.2Z" fill="url(#lgo)" stroke="#4a2358" stroke-width="1.1" stroke-linejoin="round"/><path d="M1.1 26.6 V6 M6.4 15.6 V25.4" stroke="#7a3030" stroke-width="0.9"/><path d="M11.9 14.4 L14.2 17.4" stroke="#1a1a7a" stroke-width="1.4"/></svg>
<span style="position:absolute;left:1473.80px;top:265.80px;font:20.5px/27px 'Liberation Sans',sans-serif;color:#000;white-space:pre;letter-spacing:0.165px;">Monitor - CCX</span>
<span style="position:absolute;left:1443.80px;top:319.41px;font:19.6px/25px 'Liberation Sans',sans-serif;color:#000;white-space:pre;letter-spacing:0.541px;">Errors</span>
<div style="position:absolute;left:1446px;top:351.5px;width:919px;height:139.5px;background:#fff"></div>
<div style="position:absolute;left:1446px;top:491px;width:945px;height:30px;background:#f0f0f0"></div>
<div style="position:absolute;left:2365px;top:351.5px;width:26px;height:140px;background:#f0f0f0"></div>
<div style="position:absolute;left:1446px;top:520.6px;width:945px;height:1.6px;background:#777"></div>
<svg style="position:absolute;left:0;top:0" width="2391" height="1435"><path d="M1464.6 499.40000000000003 L1458.4 505.6 L1464.6 511.8Z" fill="#8c8c8c"/><path d="M2345.2000000000003 499.40000000000003 L2351.4 505.6 L2345.2000000000003 511.8Z" fill="#8c8c8c"/><path d="M2372.8 371.6 L2379 365.4 L2385.2 371.6Z" fill="#9a9a9a"/><path d="M2372.8 472.29999999999995 L2379 478.5 L2385.2 472.29999999999995Z" fill="#9a9a9a"/></svg>
<div style="position:absolute;left:1953.3px;top:538.6px;width:212.5px;height:37.0px;border:1px solid #d6d6d6;background:#efefef;border-radius:3px;box-shadow:inset 0 0 0 1.5px #f8f8f8"></div><span style="position:absolute;left:2000.40px;top:544.48px;font:19.4px/25px 'Liberation Sans',sans-serif;color:#a2a2a2;white-space:pre;letter-spacing:0.778px;">Select nodes</span>
<div style="position:absolute;left:2182.3px;top:538.6px;width:228.0px;height:37.0px;border:1px solid #d6d6d6;background:#efefef;border-radius:3px;box-shadow:inset 0 0 0 1.5px #f8f8f8"></div><span style="position:absolute;left:2216.60px;top:544.48px;font:19.4px/25px 'Liberation Sans',sans-serif;color:#a2a2a2;white-space:pre;letter-spacing:0.665px;">Select elements</span>
<span style="position:absolute;left:1443.60px;top:585.71px;font:19.6px/25px 'Liberation Sans',sans-serif;color:#000;white-space:pre;letter-spacing:0.462px;">Solver output</span>
<div style="position:absolute;left:1446px;top:617px;width:919px;height:439.4px;background:#fff;overflow:hidden"><div style="position:absolute;left:-1446px;top:-617px;width:2391px;height:1435px">
<span style="position:absolute;left:1450.40px;top:642.92px;font:18.3px/24px 'Liberation Mono',monospace;color:#0a0a0a;white-space:pre;letter-spacing:-0.007px;-webkit-text-stroke:0.25px #fff;">************************************************************</span>
<span style="position:absolute;left:1450.40px;top:681.28px;font:18.3px/24px 'Liberation Mono',monospace;color:#0a0a0a;white-space:pre;letter-spacing:-0.007px;-webkit-text-stroke:0.25px #fff;">CalculiX Version 2.23, Copyright(C) 1998-2025 Guido Dhondt</span>
<span style="position:absolute;left:1450.40px;top:702.26px;font:18.3px/24px 'Liberation Mono',monospace;color:#0a0a0a;white-space:pre;letter-spacing:-0.007px;-webkit-text-stroke:0.25px #fff;">CalculiX comes with ABSOLUTELY NO WARRANTY. This is free</span>
<span style="position:absolute;left:1450.40px;top:723.24px;font:18.3px/24px 'Liberation Mono',monospace;color:#0a0a0a;white-space:pre;letter-spacing:-0.007px;-webkit-text-stroke:0.25px #fff;">software, and you are welcome to redistribute it under</span>
<span style="position:absolute;left:1450.40px;top:744.22px;font:18.3px/24px 'Liberation Mono',monospace;color:#0a0a0a;white-space:pre;letter-spacing:-0.007px;-webkit-text-stroke:0.25px #fff;">certain conditions, see gpl.htm</span>
<span style="position:absolute;left:1450.40px;top:789.78px;font:18.3px/24px 'Liberation Mono',monospace;color:#0a0a0a;white-space:pre;letter-spacing:-0.007px;-webkit-text-stroke:0.25px #fff;">************************************************************</span>
<span style="position:absolute;left:1450.40px;top:828.14px;font:18.3px/24px 'Liberation Mono',monospace;color:#0a0a0a;white-space:pre;letter-spacing:-0.007px;-webkit-text-stroke:0.25px #fff;">You are using an executable made on Fri Oct 24 20:08:29     2025</span>
<span style="position:absolute;left:1450.40px;top:870.10px;font:18.3px/24px 'Liberation Mono',monospace;color:#0a0a0a;white-space:pre;letter-spacing:-0.007px;-webkit-text-stroke:0.25px #fff;">  The numbers below are estimated upper bounds</span>
<span style="position:absolute;left:1450.40px;top:912.06px;font:18.3px/24px 'Liberation Mono',monospace;color:#0a0a0a;white-space:pre;letter-spacing:-0.007px;-webkit-text-stroke:0.25px #fff;">  number of:</span>
<span style="position:absolute;left:1450.40px;top:954.02px;font:18.3px/24px 'Liberation Mono',monospace;color:#0a0a0a;white-space:pre;letter-spacing:-0.007px;-webkit-text-stroke:0.25px #fff;">   nodes:        10136</span>
<span style="position:absolute;left:1450.40px;top:975.00px;font:18.3px/24px 'Liberation Mono',monospace;color:#0a0a0a;white-space:pre;letter-spacing:-0.007px;-webkit-text-stroke:0.25px #fff;">   elements:         3057</span>
<span style="position:absolute;left:1450.40px;top:995.98px;font:18.3px/24px 'Liberation Mono',monospace;color:#0a0a0a;white-space:pre;letter-spacing:-0.007px;-webkit-text-stroke:0.25px #fff;">   one-dimensional elements:            0</span>
<span style="position:absolute;left:1450.40px;top:1016.96px;font:18.3px/24px 'Liberation Mono',monospace;color:#0a0a0a;white-space:pre;letter-spacing:-0.007px;-webkit-text-stroke:0.25px #fff;">   two-dimensional elements:            0</span>
<span style="position:absolute;left:1450.40px;top:1037.94px;font:18.3px/24px 'Liberation Mono',monospace;color:#0a0a0a;white-space:pre;letter-spacing:-0.007px;-webkit-text-stroke:0.25px #fff;">   integration points per element:            8</span>
</div></div>
<div style="position:absolute;left:2365px;top:617px;width:26px;height:440px;background:#f0f0f0"></div>
<div style="position:absolute;left:2376.2px;top:648.5px;width:6.6px;height:29.5px;border-radius:3.3px;background:#7c7c7c"></div>
<div style="position:absolute;left:1446px;top:1056.4px;width:945px;height:1.4px;background:#9a9a9a"></div>
<div style="position:absolute;left:1446.4px;top:1076.6px;width:134.6px;height:29px;background:#f1f1f1;border:1px solid #e2e2e2;border-bottom:1.4px solid #8a8a8a;box-sizing:border-box"></div>
<span style="position:absolute;left:1448.60px;top:1078.31px;font:19.6px/25px 'Liberation Sans',sans-serif;color:#000;white-space:pre;letter-spacing:0.963px;">00:03:34</span>
<div style="position:absolute;left:1724.5px;top:1072.6px;width:287.0px;height:39.4px;border:1px solid #adadad;background:#e9e9e9;border-radius:3px;box-shadow:inset 0 0 0 1.5px #f8f8f8"></div><span style="position:absolute;left:1762.60px;top:1079.68px;font:19.4px/25px 'Liberation Sans',sans-serif;color:#000;white-space:pre;letter-spacing:0.660px;">Open working directory</span>
<div style="position:absolute;left:2028.0px;top:1072.6px;width:286.4px;height:39.4px;border:1px solid #d6d6d6;background:#efefef;border-radius:3px;box-shadow:inset 0 0 0 1.5px #f8f8f8"></div><span style="position:absolute;left:2079.00px;top:1079.68px;font:19.4px/25px 'Liberation Sans',sans-serif;color:#a2a2a2;white-space:pre;letter-spacing:0.636px;">Load partial solution</span>
<div style="position:absolute;left:2330.6px;top:1072.6px;width:118.0px;height:39.4px;border:1px solid #adadad;background:#e9e9e9;border-radius:3px;box-shadow:inset 0 0 0 1.5px #f8f8f8"></div><span style="position:absolute;left:2356.60px;top:1079.68px;font:19.4px/25px 'Liberation Sans',sans-serif;color:#000;white-space:pre;letter-spacing:0.266px;">Input file</span>
</div></div>
<svg style="position:absolute;left:0;top:0;z-index:20" width="2391" height="1435" viewBox="0 0 2391 1435"><path d="M1546.2 667.3C1548.8 668.0 1554.7 670.7 1562.1 671.6C1569.5 672.5 1580.6 672.6 1590.7 672.6C1600.8 672.6 1610.6 672.1 1622.5 671.6C1634.4 671.1 1650.3 669.6 1662.2 669.7C1674.1 669.8 1685.2 670.8 1694.0 672.1C1702.8 673.4 1708.1 674.9 1714.7 677.7C1721.3 680.5 1729.3 685.1 1733.8 688.8C1738.3 692.5 1741.7 696.4 1741.7 699.9C1741.7 703.4 1737.8 706.3 1733.8 709.5C1729.8 712.7 1724.5 715.7 1717.9 719.0C1711.3 722.3 1704.6 727.2 1694.0 729.3C1683.4 731.4 1668.9 731.4 1654.3 731.7C1639.7 732.0 1622.5 731.6 1606.6 730.9C1590.7 730.2 1571.6 728.9 1558.9 727.7C1546.2 726.5 1537.2 725.3 1530.3 723.8C1523.4 722.3 1523.4 719.5 1517.6 718.6C1511.8 717.7 1504.4 718.1 1495.4 718.2C1486.4 718.3 1473.4 719.3 1463.6 719.0C1453.8 718.7 1443.0 718.2 1436.6 716.6C1430.2 715.0 1427.5 712.8 1425.4 709.5C1423.3 706.2 1423.7 701.3 1423.8 696.8C1423.9 692.3 1424.5 687.2 1426.2 682.4C1427.9 677.6 1430.6 671.9 1434.2 668.1C1437.8 664.3 1442.3 661.5 1447.7 659.4C1453.1 657.3 1459.9 655.9 1466.8 655.4C1473.7 654.9 1481.1 655.8 1489.0 656.2C1496.9 656.6 1506.2 656.2 1514.4 657.8C1522.6 659.4 1534.3 664.5 1538.3 665.8" fill="none" stroke="#b8186c" stroke-width="9.2" stroke-linecap="round" stroke-linejoin="round"/></svg>
<div id="frame"></div>
</body></html>
